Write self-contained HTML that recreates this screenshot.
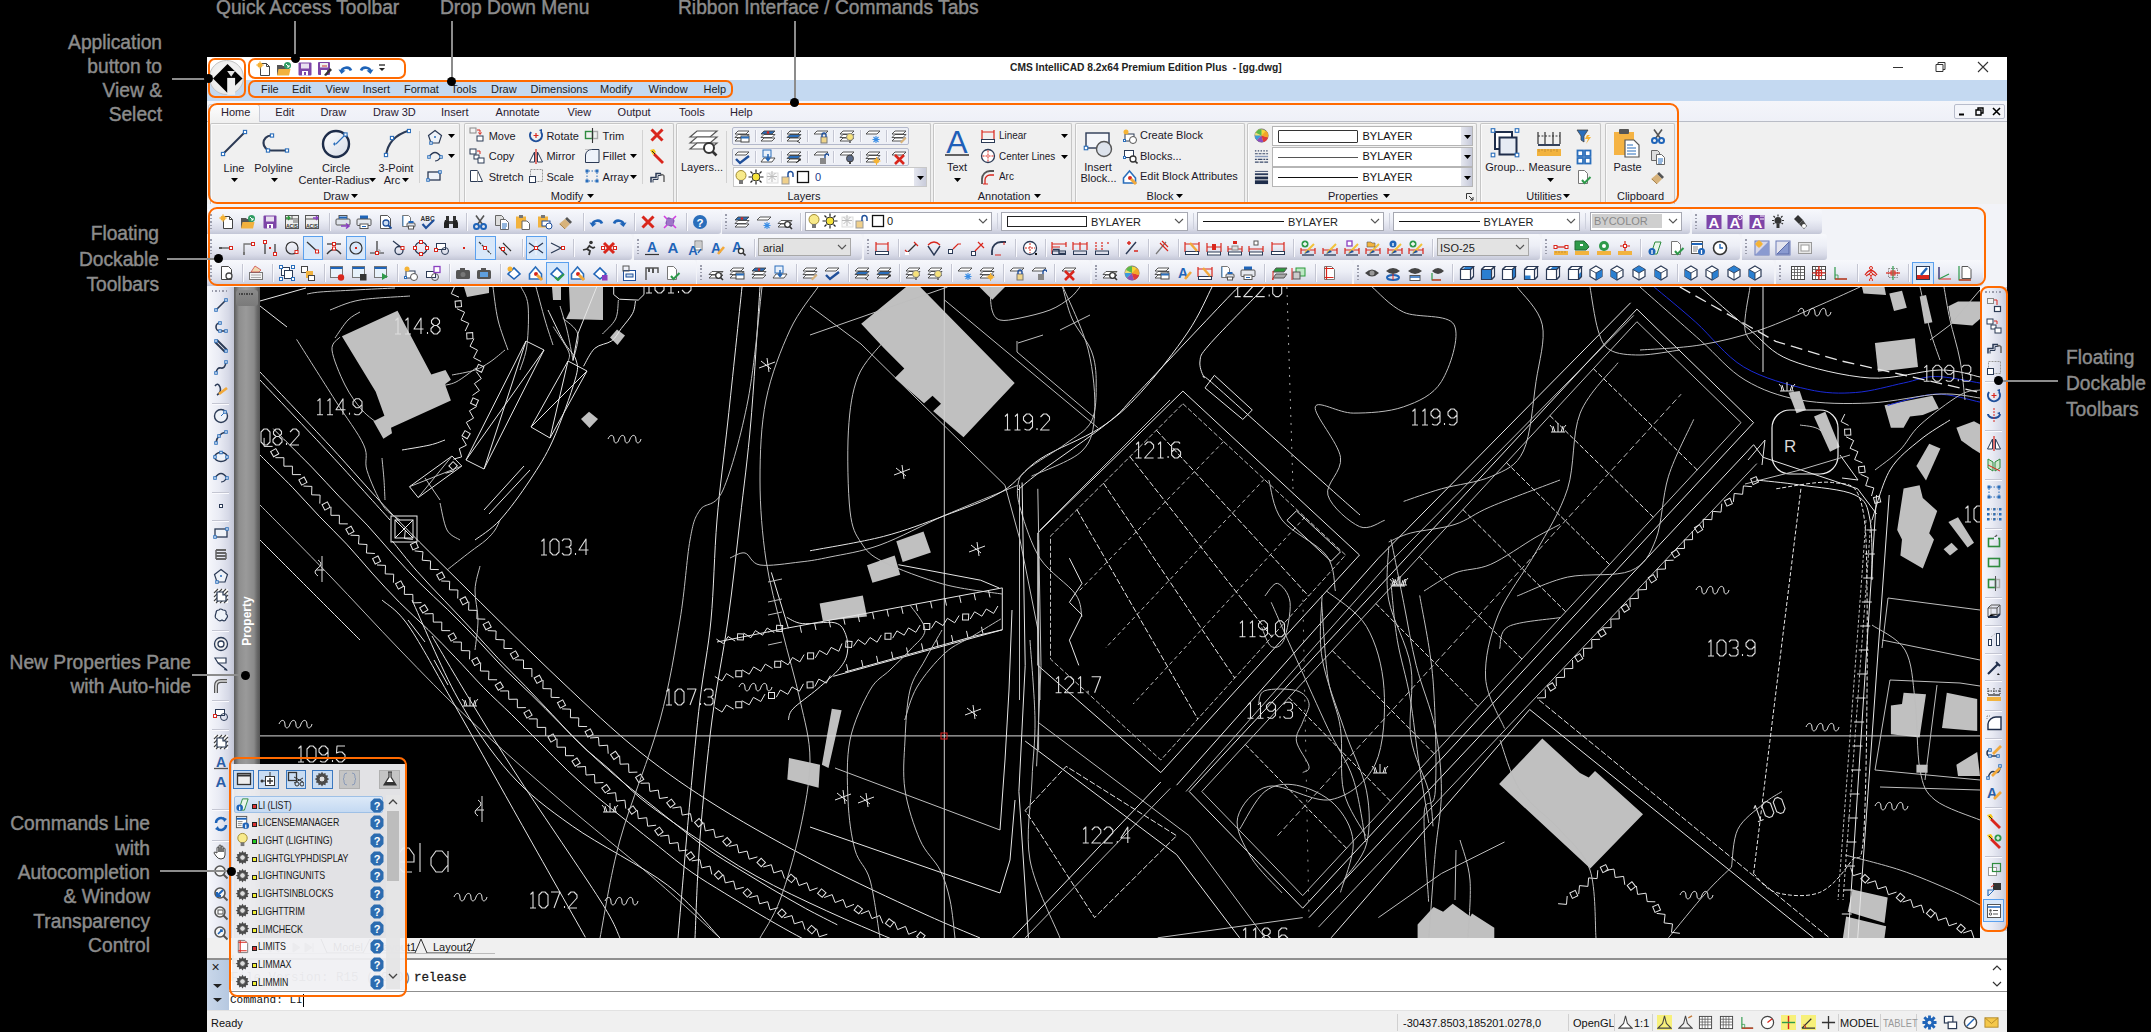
<!DOCTYPE html><html><head><meta charset="utf-8"><style>
*{margin:0;padding:0;box-sizing:border-box}
html,body{width:2151px;height:1032px;overflow:hidden;background:#000}
body{position:relative;font-family:"Liberation Sans",sans-serif;font-size:11px;color:#000}
.a{position:absolute;display:block}
.t{position:absolute;white-space:nowrap}
.or{position:absolute;border:2.5px solid #ff6a00;border-radius:7px}
.tb{position:absolute;background:linear-gradient(#f7f8fc,#eceef6 45%,#d9dbe8 80%,#c3c6d6);border-radius:0 3px 3px 0}
.tbv{position:absolute;background:linear-gradient(90deg,#f7f8fc,#e9ebf4 45%,#d5d8e6 80%,#c3c6d6)}
.cb{position:absolute;background:#fff;border:1px solid #a9abb4}
.sep{position:absolute;width:1px;background:#c5c7d0;border-right:1px solid #fbfbfd}
</style></head><body><div class="t" style="left:216px;top:-2.9px;font-size:20px;line-height:20px;color:#8c8c8c;transform:scaleX(0.96);transform-origin:0 0;-webkit-text-stroke:0.45px #8c8c8c">Quick Access Toolbar</div>
<div class="t" style="left:440px;top:-2.9px;font-size:20px;line-height:20px;color:#8c8c8c;transform:scaleX(0.96);transform-origin:0 0;-webkit-text-stroke:0.45px #8c8c8c">Drop Down Menu</div>
<div class="t" style="left:678px;top:-2.9px;font-size:20px;line-height:20px;color:#8c8c8c;transform:scaleX(0.96);transform-origin:0 0;-webkit-text-stroke:0.45px #8c8c8c">Ribbon Interface / Commands Tabs</div>
<div class="t" style="left:-838px;width:1000px;text-align:right;top:32.1px;font-size:20px;line-height:20px;color:#8c8c8c;transform:scaleX(0.96);transform-origin:100% 0;-webkit-text-stroke:0.45px #8c8c8c">Application</div>
<div class="t" style="left:-838px;width:1000px;text-align:right;top:55.9px;font-size:20px;line-height:20px;color:#8c8c8c;transform:scaleX(0.96);transform-origin:100% 0;-webkit-text-stroke:0.45px #8c8c8c">button to</div>
<div class="t" style="left:-838px;width:1000px;text-align:right;top:79.7px;font-size:20px;line-height:20px;color:#8c8c8c;transform:scaleX(0.96);transform-origin:100% 0;-webkit-text-stroke:0.45px #8c8c8c">View &amp;</div>
<div class="t" style="left:-838px;width:1000px;text-align:right;top:103.5px;font-size:20px;line-height:20px;color:#8c8c8c;transform:scaleX(0.96);transform-origin:100% 0;-webkit-text-stroke:0.45px #8c8c8c">Select</div>
<div class="t" style="left:-841px;width:1000px;text-align:right;top:223.1px;font-size:20px;line-height:20px;color:#8c8c8c;transform:scaleX(0.96);transform-origin:100% 0;-webkit-text-stroke:0.45px #8c8c8c">Floating</div>
<div class="t" style="left:-841px;width:1000px;text-align:right;top:248.7px;font-size:20px;line-height:20px;color:#8c8c8c;transform:scaleX(0.96);transform-origin:100% 0;-webkit-text-stroke:0.45px #8c8c8c">Dockable</div>
<div class="t" style="left:-841px;width:1000px;text-align:right;top:274.3px;font-size:20px;line-height:20px;color:#8c8c8c;transform:scaleX(0.96);transform-origin:100% 0;-webkit-text-stroke:0.45px #8c8c8c">Toolbars</div>
<div class="t" style="left:-809px;width:1000px;text-align:right;top:652.1px;font-size:20px;line-height:20px;color:#8c8c8c;transform:scaleX(0.96);transform-origin:100% 0;-webkit-text-stroke:0.45px #8c8c8c">New Properties Pane</div>
<div class="t" style="left:-809px;width:1000px;text-align:right;top:676.1px;font-size:20px;line-height:20px;color:#8c8c8c;transform:scaleX(0.96);transform-origin:100% 0;-webkit-text-stroke:0.45px #8c8c8c">with Auto-hide</div>
<div class="t" style="left:-850px;width:1000px;text-align:right;top:813.1px;font-size:20px;line-height:20px;color:#8c8c8c;transform:scaleX(0.96);transform-origin:100% 0;-webkit-text-stroke:0.45px #8c8c8c">Commands Line</div>
<div class="t" style="left:-850px;width:1000px;text-align:right;top:837.5px;font-size:20px;line-height:20px;color:#8c8c8c;transform:scaleX(0.96);transform-origin:100% 0;-webkit-text-stroke:0.45px #8c8c8c">with</div>
<div class="t" style="left:-850px;width:1000px;text-align:right;top:861.9px;font-size:20px;line-height:20px;color:#8c8c8c;transform:scaleX(0.96);transform-origin:100% 0;-webkit-text-stroke:0.45px #8c8c8c">Autocompletion</div>
<div class="t" style="left:-850px;width:1000px;text-align:right;top:886.3px;font-size:20px;line-height:20px;color:#8c8c8c;transform:scaleX(0.96);transform-origin:100% 0;-webkit-text-stroke:0.45px #8c8c8c">&amp; Window</div>
<div class="t" style="left:-850px;width:1000px;text-align:right;top:910.7px;font-size:20px;line-height:20px;color:#8c8c8c;transform:scaleX(0.96);transform-origin:100% 0;-webkit-text-stroke:0.45px #8c8c8c">Transparency</div>
<div class="t" style="left:-850px;width:1000px;text-align:right;top:935.1px;font-size:20px;line-height:20px;color:#8c8c8c;transform:scaleX(0.96);transform-origin:100% 0;-webkit-text-stroke:0.45px #8c8c8c">Control</div>
<div class="t" style="left:2066px;top:347.1px;font-size:20px;line-height:20px;color:#8c8c8c;transform:scaleX(0.96);transform-origin:0 0;-webkit-text-stroke:0.45px #8c8c8c">Floating</div>
<div class="t" style="left:2066px;top:373.1px;font-size:20px;line-height:20px;color:#8c8c8c;transform:scaleX(0.96);transform-origin:0 0;-webkit-text-stroke:0.45px #8c8c8c">Dockable</div>
<div class="t" style="left:2066px;top:399.1px;font-size:20px;line-height:20px;color:#8c8c8c;transform:scaleX(0.96);transform-origin:0 0;-webkit-text-stroke:0.45px #8c8c8c">Toolbars</div>
<div class="a" style="left:207px;top:57px;width:1800px;height:975px;background:#f0f0f0"></div>
<div class="a" style="left:207px;top:57px;width:1800px;height:23px;background:#fff"></div>
<div class="t" style="left:1010px;top:61.7px;font-size:11px;line-height:11px;color:#222;font-weight:bold;transform:scaleX(0.93);transform-origin:0 0">CMS IntelliCAD 8.2x64 Premium Edition Plus &nbsp;- [gg.dwg]</div>
<svg class="a" style="left:1890px;top:60px;" width="120" height="16" viewBox="0 0 120 16"><path d="M3 7.5h10" stroke="#333" stroke-width="1"/><path d="M46 4.5h7v7h-7z M48 4.5v-2h7v7h-2" fill="none" stroke="#333" stroke-width="1"/><path d="M88 2l10 10M98 2l-10 10" stroke="#333" stroke-width="1.1"/></svg>
<div class="a" style="left:207px;top:80px;width:1800px;height:21px;background:#c4d9f1"></div>
<div class="t" style="left:261px;top:83.7px;font-size:11px;line-height:11px;color:#1e1e1e;">File</div>
<div class="t" style="left:292px;top:83.7px;font-size:11px;line-height:11px;color:#1e1e1e;">Edit</div>
<div class="t" style="left:325.5px;top:83.7px;font-size:11px;line-height:11px;color:#1e1e1e;">View</div>
<div class="t" style="left:362.5px;top:83.7px;font-size:11px;line-height:11px;color:#1e1e1e;">Insert</div>
<div class="t" style="left:404px;top:83.7px;font-size:11px;line-height:11px;color:#1e1e1e;">Format</div>
<div class="t" style="left:451px;top:83.7px;font-size:11px;line-height:11px;color:#1e1e1e;">Tools</div>
<div class="t" style="left:491px;top:83.7px;font-size:11px;line-height:11px;color:#1e1e1e;">Draw</div>
<div class="t" style="left:530.5px;top:83.7px;font-size:11px;line-height:11px;color:#1e1e1e;">Dimensions</div>
<div class="t" style="left:600px;top:83.7px;font-size:11px;line-height:11px;color:#1e1e1e;">Modify</div>
<div class="t" style="left:648.5px;top:83.7px;font-size:11px;line-height:11px;color:#1e1e1e;">Window</div>
<div class="t" style="left:703.5px;top:83.7px;font-size:11px;line-height:11px;color:#1e1e1e;">Help</div>
<div class="a" style="left:209px;top:60px;width:35px;height:35px;border-radius:50%;background:radial-gradient(circle at 50% 40%,#fafafa,#e4e4e4);border:1px solid #c4c4c4"></div>
<svg class="a" style="left:212px;top:63px;" width="32" height="32" viewBox="0 0 32 32"><path d="M15.5 1L30.5 15.6L15.5 30L1 15.6Z" fill="#000"/><path d="M15.2 8.1h7.9l-3.9 5.7z" fill="#e4e4e4"/><path d="M15.2 14.9h7.9v17h-7.9z" fill="#efefef"/></svg>
<div class="a" style="left:207px;top:101px;width:1800px;height:21px;background:linear-gradient(#f4f5fa,#eef0f7)"></div>
<div class="a" style="left:207px;top:121px;width:1800px;height:1px;background:#b9bcc6"></div>
<div class="a" style="left:208px;top:104px;width:52px;height:18px;background:linear-gradient(#fdfdfd,#f0f0f0);border:1px solid #c9ccd6;border-bottom:none;border-radius:3px 3px 0 0"></div>
<div class="t" style="left:221px;top:106.7px;font-size:11px;line-height:11px;color:#2a2030;">Home</div>
<div class="t" style="left:275.3px;top:106.7px;font-size:11px;line-height:11px;color:#2a2030;">Edit</div>
<div class="t" style="left:320.5px;top:106.7px;font-size:11px;line-height:11px;color:#2a2030;">Draw</div>
<div class="t" style="left:373px;top:106.7px;font-size:11px;line-height:11px;color:#2a2030;">Draw 3D</div>
<div class="t" style="left:441px;top:106.7px;font-size:11px;line-height:11px;color:#2a2030;">Insert</div>
<div class="t" style="left:495.6px;top:106.7px;font-size:11px;line-height:11px;color:#2a2030;">Annotate</div>
<div class="t" style="left:567.5px;top:106.7px;font-size:11px;line-height:11px;color:#2a2030;">View</div>
<div class="t" style="left:617.6px;top:106.7px;font-size:11px;line-height:11px;color:#2a2030;">Output</div>
<div class="t" style="left:679px;top:106.7px;font-size:11px;line-height:11px;color:#2a2030;">Tools</div>
<div class="t" style="left:730px;top:106.7px;font-size:11px;line-height:11px;color:#2a2030;">Help</div>
<div class="a" style="left:1954px;top:104px;width:51px;height:15px;border:1px solid #b8bccb;border-radius:2px;background:#f4f5fa"></div>
<svg class="a" style="left:1955px;top:105px;" width="50" height="14" viewBox="0 0 50 14"><path d="M4 9.5h5" stroke="#000" stroke-width="2"/><path d="M21 5h5v5h-5z M23 5v-2h5v5h-2" fill="none" stroke="#000" stroke-width="1.4"/><path d="M38 3l7 7M45 3l-7 7" stroke="#000" stroke-width="1.6"/></svg>
<div class="a" style="left:207px;top:122px;width:1800px;height:82px;background:#f0f0f0"></div>
<div class="a" style="left:210px;top:123px;width:250.3px;height:81px;border:1px solid #c6c6c6;border-bottom:none;border-radius:2px 2px 0 0;box-shadow:inset 1px 1px 0 #fafafa"></div>
<div class="a" style="left:463.5px;top:123px;width:210.70000000000005px;height:81px;border:1px solid #c6c6c6;border-bottom:none;border-radius:2px 2px 0 0;box-shadow:inset 1px 1px 0 #fafafa"></div>
<div class="a" style="left:676.4px;top:123px;width:254.60000000000002px;height:81px;border:1px solid #c6c6c6;border-bottom:none;border-radius:2px 2px 0 0;box-shadow:inset 1px 1px 0 #fafafa"></div>
<div class="a" style="left:933.2px;top:123px;width:139.0999999999999px;height:81px;border:1px solid #c6c6c6;border-bottom:none;border-radius:2px 2px 0 0;box-shadow:inset 1px 1px 0 #fafafa"></div>
<div class="a" style="left:1075.3px;top:123px;width:169.70000000000005px;height:81px;border:1px solid #c6c6c6;border-bottom:none;border-radius:2px 2px 0 0;box-shadow:inset 1px 1px 0 #fafafa"></div>
<div class="a" style="left:1247.3px;top:123px;width:229.29999999999995px;height:81px;border:1px solid #c6c6c6;border-bottom:none;border-radius:2px 2px 0 0;box-shadow:inset 1px 1px 0 #fafafa"></div>
<div class="a" style="left:1479.8px;top:123px;width:121.70000000000005px;height:81px;border:1px solid #c6c6c6;border-bottom:none;border-radius:2px 2px 0 0;box-shadow:inset 1px 1px 0 #fafafa"></div>
<div class="a" style="left:1604.6px;top:123px;width:70.40000000000009px;height:81px;border:1px solid #c6c6c6;border-bottom:none;border-radius:2px 2px 0 0;box-shadow:inset 1px 1px 0 #fafafa"></div>
<div class="t" style="left:-266px;width:1000px;text-align:center;top:162.7px;font-size:11px;line-height:11px;color:#201828;">Line</div>
<svg class="a" style="left:230.5px;top:178px;" width="7" height="4" viewBox="0 0 7 4"><path d="M0 0h7l-3.5 4z" fill="#000"/></svg>
<div class="t" style="left:-226.5px;width:1000px;text-align:center;top:162.7px;font-size:11px;line-height:11px;color:#201828;">Polyline</div>
<svg class="a" style="left:271px;top:178px;" width="7" height="4" viewBox="0 0 7 4"><path d="M0 0h7l-3.5 4z" fill="#000"/></svg>
<div class="t" style="left:-164px;width:1000px;text-align:center;top:162.7px;font-size:11px;line-height:11px;color:#201828;">Circle</div>
<div class="t" style="left:-166px;width:1000px;text-align:center;top:174.7px;font-size:11px;line-height:11px;color:#201828;">Center-Radius</div>
<svg class="a" style="left:368.5px;top:178px;" width="7" height="4" viewBox="0 0 7 4"><path d="M0 0h7l-3.5 4z" fill="#000"/></svg>
<div class="t" style="left:-104px;width:1000px;text-align:center;top:162.7px;font-size:11px;line-height:11px;color:#201828;">3-Point</div>
<div class="t" style="left:-108px;width:1000px;text-align:center;top:174.7px;font-size:11px;line-height:11px;color:#201828;">Arc</div>
<svg class="a" style="left:402px;top:178px;" width="7" height="4" viewBox="0 0 7 4"><path d="M0 0h7l-3.5 4z" fill="#000"/></svg>
<div class="t" style="left:-164px;width:1000px;text-align:center;top:190.7px;font-size:11px;line-height:11px;color:#201828;">Draw</div>
<svg class="a" style="left:351px;top:194px;" width="7" height="4" viewBox="0 0 7 4"><path d="M0 0h7l-3.5 4z" fill="#000"/></svg>
<div class="a" style="left:419px;top:131px;width:1px;height:52px;background:#d2d2d2"></div>
<svg class="a" style="left:448px;top:133.5px;" width="7" height="4" viewBox="0 0 7 4"><path d="M0 0h7l-3.5 4z" fill="#000"/></svg>
<svg class="a" style="left:448px;top:154px;" width="7" height="4" viewBox="0 0 7 4"><path d="M0 0h7l-3.5 4z" fill="#000"/></svg>
<div class="t" style="left:488.7px;top:130.7px;font-size:11px;line-height:11px;color:#201828;">Move</div>
<div class="t" style="left:488.7px;top:151.2px;font-size:11px;line-height:11px;color:#201828;">Copy</div>
<div class="t" style="left:488.7px;top:171.7px;font-size:11px;line-height:11px;color:#201828;">Stretch</div>
<div class="t" style="left:546.4px;top:130.7px;font-size:11px;line-height:11px;color:#201828;">Rotate</div>
<div class="t" style="left:546.4px;top:151.2px;font-size:11px;line-height:11px;color:#201828;">Mirror</div>
<div class="t" style="left:546.4px;top:171.7px;font-size:11px;line-height:11px;color:#201828;">Scale</div>
<div class="t" style="left:602.6px;top:130.7px;font-size:11px;line-height:11px;color:#201828;">Trim</div>
<div class="t" style="left:602.6px;top:151.2px;font-size:11px;line-height:11px;color:#201828;">Fillet</div>
<div class="t" style="left:602.6px;top:171.7px;font-size:11px;line-height:11px;color:#201828;">Array</div>
<svg class="a" style="left:630px;top:154px;" width="7" height="4" viewBox="0 0 7 4"><path d="M0 0h7l-3.5 4z" fill="#000"/></svg>
<svg class="a" style="left:630px;top:174.5px;" width="7" height="4" viewBox="0 0 7 4"><path d="M0 0h7l-3.5 4z" fill="#000"/></svg>
<div class="a" style="left:641.6px;top:130px;width:1px;height:54px;background:#d2d2d2"></div>
<div class="t" style="left:67px;width:1000px;text-align:center;top:190.7px;font-size:11px;line-height:11px;color:#201828;">Modify</div>
<svg class="a" style="left:587px;top:194px;" width="7" height="4" viewBox="0 0 7 4"><path d="M0 0h7l-3.5 4z" fill="#000"/></svg>
<div class="t" style="left:202px;width:1000px;text-align:center;top:162.2px;font-size:11px;line-height:11px;color:#201828;">Layers...</div>
<div class="a" style="left:725.5px;top:131px;width:1px;height:52px;background:#d2d2d2"></div>
<div class="a" style="left:732px;top:127px;width:177px;height:18px;border:1px solid #b4b9cc;border-radius:2px;background:#eef0f6"></div>
<div class="a" style="left:732px;top:147.6px;width:177px;height:18px;border:1px solid #b4b9cc;border-radius:2px;background:#eef0f6"></div>
<div class="cb" style="left:733px;top:167px;width:194px;height:20px;border-color:#c8c8c8"></div>
<div class="a" style="left:914px;top:168px;width:12px;height:18px;background:linear-gradient(90deg,#e4e6ef,#c9ccdb)"></div>
<svg class="a" style="left:917px;top:175.5px;" width="7" height="4" viewBox="0 0 7 4"><path d="M0 0h7l-3.5 4z" fill="#000"/></svg>
<div class="t" style="left:-84px;width:1000px;text-align:right;top:171.7px;font-size:11px;line-height:11px;color:#1a3c8c;display:none">0</div>
<div class="t" style="left:815px;top:172.2px;font-size:11px;line-height:11px;color:#1b3a8a;">0</div>
<div class="t" style="left:304px;width:1000px;text-align:center;top:190.7px;font-size:11px;line-height:11px;color:#201828;">Layers</div>
<div class="t" style="left:457px;width:1000px;text-align:center;top:161.7px;font-size:11px;line-height:11px;color:#201828;">Text</div>
<svg class="a" style="left:954px;top:178px;" width="7" height="4" viewBox="0 0 7 4"><path d="M0 0h7l-3.5 4z" fill="#000"/></svg>
<div class="t" style="left:998.7px;top:130.2px;font-size:11px;line-height:11px;color:#201828;transform:scaleX(0.9);transform-origin:0 0">Linear</div>
<div class="t" style="left:998.7px;top:150.7px;font-size:11px;line-height:11px;color:#201828;transform:scaleX(0.9);transform-origin:0 0">Center Lines</div>
<div class="t" style="left:998.7px;top:171.2px;font-size:11px;line-height:11px;color:#201828;transform:scaleX(0.9);transform-origin:0 0">Arc</div>
<svg class="a" style="left:1061px;top:134px;" width="7" height="4" viewBox="0 0 7 4"><path d="M0 0h7l-3.5 4z" fill="#000"/></svg>
<svg class="a" style="left:1061px;top:154.5px;" width="7" height="4" viewBox="0 0 7 4"><path d="M0 0h7l-3.5 4z" fill="#000"/></svg>
<div class="t" style="left:504px;width:1000px;text-align:center;top:190.7px;font-size:11px;line-height:11px;color:#201828;">Annotation</div>
<svg class="a" style="left:1034px;top:194px;" width="7" height="4" viewBox="0 0 7 4"><path d="M0 0h7l-3.5 4z" fill="#000"/></svg>
<div class="t" style="left:598px;width:1000px;text-align:center;top:161.7px;font-size:11px;line-height:11px;color:#201828;">Insert</div>
<div class="t" style="left:598.5px;width:1000px;text-align:center;top:172.7px;font-size:11px;line-height:11px;color:#201828;">Block...</div>
<div class="t" style="left:1140px;top:130.2px;font-size:11px;line-height:11px;color:#201828;">Create Block</div>
<div class="t" style="left:1140px;top:150.7px;font-size:11px;line-height:11px;color:#201828;">Blocks...</div>
<div class="t" style="left:1140px;top:171.2px;font-size:11px;line-height:11px;color:#201828;">Edit Block Attributes</div>
<div class="t" style="left:660px;width:1000px;text-align:center;top:190.7px;font-size:11px;line-height:11px;color:#201828;">Block</div>
<svg class="a" style="left:1176px;top:194px;" width="7" height="4" viewBox="0 0 7 4"><path d="M0 0h7l-3.5 4z" fill="#000"/></svg>
<div class="cb" style="left:1271.8px;top:126px;width:201px;height:20px;border-color:#b5b5b5"></div>
<div class="a" style="left:1461px;top:127px;width:11px;height:18px;background:linear-gradient(90deg,#e6e8f0,#c5c8d8)"></div>
<svg class="a" style="left:1463.5px;top:134.5px;" width="7" height="4" viewBox="0 0 7 4"><path d="M0 0h7l-3.5 4z" fill="#000"/></svg>
<div class="t" style="left:1362.5px;top:130.9px;font-size:11px;line-height:11px;color:#111;">BYLAYER</div>
<div class="cb" style="left:1271.8px;top:146.5px;width:201px;height:20px;border-color:#b5b5b5"></div>
<div class="a" style="left:1461px;top:147.5px;width:11px;height:18px;background:linear-gradient(90deg,#e6e8f0,#c5c8d8)"></div>
<svg class="a" style="left:1463.5px;top:155.0px;" width="7" height="4" viewBox="0 0 7 4"><path d="M0 0h7l-3.5 4z" fill="#000"/></svg>
<div class="t" style="left:1362.5px;top:151.4px;font-size:11px;line-height:11px;color:#111;">BYLAYER</div>
<div class="cb" style="left:1271.8px;top:167px;width:201px;height:20px;border-color:#b5b5b5"></div>
<div class="a" style="left:1461px;top:168px;width:11px;height:18px;background:linear-gradient(90deg,#e6e8f0,#c5c8d8)"></div>
<svg class="a" style="left:1463.5px;top:175.5px;" width="7" height="4" viewBox="0 0 7 4"><path d="M0 0h7l-3.5 4z" fill="#000"/></svg>
<div class="t" style="left:1362.5px;top:171.9px;font-size:11px;line-height:11px;color:#111;">BYLAYER</div>
<div class="a" style="left:1277.5px;top:129.5px;width:80.5px;height:13px;border:1.5px solid #333;border-radius:1px;background:#fff"></div>
<div class="a" style="left:1277.5px;top:156.5px;width:80.5px;height:1px;background:#555"></div>
<div class="a" style="left:1277.5px;top:177px;width:80.5px;height:1px;background:#111"></div>
<div class="t" style="left:853px;width:1000px;text-align:center;top:190.7px;font-size:11px;line-height:11px;color:#201828;">Properties</div>
<svg class="a" style="left:1382.5px;top:194px;" width="7" height="4" viewBox="0 0 7 4"><path d="M0 0h7l-3.5 4z" fill="#000"/></svg>
<svg class="a" style="left:1466px;top:193px;" width="8" height="8" viewBox="0 0 8 8"><path d="M0.5 6V0.5H6" stroke="#333" fill="none"/><path d="M3 3l4 4M7 4v3h-3" stroke="#333" fill="none"/></svg>
<div class="t" style="left:1005px;width:1000px;text-align:center;top:162.2px;font-size:11px;line-height:11px;color:#201828;">Group...</div>
<div class="t" style="left:1050px;width:1000px;text-align:center;top:162.2px;font-size:11px;line-height:11px;color:#201828;">Measure</div>
<svg class="a" style="left:1547px;top:177.5px;" width="7" height="4" viewBox="0 0 7 4"><path d="M0 0h7l-3.5 4z" fill="#000"/></svg>
<div class="t" style="left:1044px;width:1000px;text-align:center;top:190.7px;font-size:11px;line-height:11px;color:#201828;">Utilities</div>
<svg class="a" style="left:1562.5px;top:194px;" width="7" height="4" viewBox="0 0 7 4"><path d="M0 0h7l-3.5 4z" fill="#000"/></svg>
<div class="t" style="left:1127.5px;width:1000px;text-align:center;top:162.2px;font-size:11px;line-height:11px;color:#201828;">Paste</div>
<div class="t" style="left:1140.5px;width:1000px;text-align:center;top:190.7px;font-size:11px;line-height:11px;color:#201828;">Clipboard</div>
<div class="a" style="left:207px;top:204px;width:1800px;height:83px;background:#f2f3f8"></div>
<div class="tb" style="left:207px;top:208.5px;width:513.7px;height:25.5px"></div>
<div class="a" style="left:210px;top:213.5px;width:2px;height:15px;background:repeating-linear-gradient(#9a9cab 0 1.5px,transparent 1.5px 3.5px)"></div>
<div class="tb" style="left:722px;top:208.5px;width:968px;height:25.5px"></div>
<div class="a" style="left:725px;top:213.5px;width:2px;height:15px;background:repeating-linear-gradient(#9a9cab 0 1.5px,transparent 1.5px 3.5px)"></div>
<div class="tb" style="left:1692px;top:208.5px;width:130px;height:25.5px"></div>
<div class="a" style="left:1695px;top:213.5px;width:2px;height:15px;background:repeating-linear-gradient(#9a9cab 0 1.5px,transparent 1.5px 3.5px)"></div>
<div class="tb" style="left:207px;top:234px;width:425px;height:25.5px"></div>
<div class="a" style="left:210px;top:239px;width:2px;height:15px;background:repeating-linear-gradient(#9a9cab 0 1.5px,transparent 1.5px 3.5px)"></div>
<div class="tb" style="left:634px;top:234px;width:228px;height:25.5px"></div>
<div class="a" style="left:637px;top:239px;width:2px;height:15px;background:repeating-linear-gradient(#9a9cab 0 1.5px,transparent 1.5px 3.5px)"></div>
<div class="tb" style="left:864px;top:234px;width:676.3px;height:25.5px"></div>
<div class="a" style="left:867px;top:239px;width:2px;height:15px;background:repeating-linear-gradient(#9a9cab 0 1.5px,transparent 1.5px 3.5px)"></div>
<div class="tb" style="left:1542px;top:234px;width:198.4000000000001px;height:25.5px"></div>
<div class="a" style="left:1545px;top:239px;width:2px;height:15px;background:repeating-linear-gradient(#9a9cab 0 1.5px,transparent 1.5px 3.5px)"></div>
<div class="tb" style="left:1742px;top:234px;width:85px;height:25.5px"></div>
<div class="a" style="left:1745px;top:239px;width:2px;height:15px;background:repeating-linear-gradient(#9a9cab 0 1.5px,transparent 1.5px 3.5px)"></div>
<div class="tb" style="left:207px;top:260px;width:488.6px;height:25.5px"></div>
<div class="a" style="left:210px;top:265px;width:2px;height:15px;background:repeating-linear-gradient(#9a9cab 0 1.5px,transparent 1.5px 3.5px)"></div>
<div class="tb" style="left:697px;top:260px;width:393px;height:25.5px"></div>
<div class="a" style="left:700px;top:265px;width:2px;height:15px;background:repeating-linear-gradient(#9a9cab 0 1.5px,transparent 1.5px 3.5px)"></div>
<div class="tb" style="left:1092px;top:260px;width:260px;height:25.5px"></div>
<div class="a" style="left:1095px;top:265px;width:2px;height:15px;background:repeating-linear-gradient(#9a9cab 0 1.5px,transparent 1.5px 3.5px)"></div>
<div class="tb" style="left:1354px;top:260px;width:420px;height:25.5px"></div>
<div class="a" style="left:1357px;top:265px;width:2px;height:15px;background:repeating-linear-gradient(#9a9cab 0 1.5px,transparent 1.5px 3.5px)"></div>
<div class="tb" style="left:1776px;top:260px;width:207px;height:25.5px"></div>
<div class="a" style="left:1779px;top:265px;width:2px;height:15px;background:repeating-linear-gradient(#9a9cab 0 1.5px,transparent 1.5px 3.5px)"></div>
<div class="cb" style="left:805.2px;top:211.5px;width:186.79999999999995px;height:19.5px;background:#fff;border-color:#a6a8b2"></div>
<svg class="a" style="left:978px;top:218.25px;" width="10" height="6" viewBox="0 0 10 6"><path d="M1 1l4 4l4-4" stroke="#555" fill="none" stroke-width="1.1"/></svg>
<div class="t" style="left:887px;top:216.2px;font-size:11px;line-height:11px;color:#1a1a1a;">0</div>
<div class="cb" style="left:1001px;top:211.5px;width:187px;height:19.5px;background:#fff;border-color:#a6a8b2"></div>
<svg class="a" style="left:1174px;top:218.25px;" width="10" height="6" viewBox="0 0 10 6"><path d="M1 1l4 4l4-4" stroke="#555" fill="none" stroke-width="1.1"/></svg>
<div class="a" style="left:1007px;top:215.5px;width:80px;height:11.5px;border:1.5px solid #222"></div>
<div class="t" style="left:1091px;top:216.7px;font-size:11px;line-height:11px;color:#222;">BYLAYER</div>
<div class="cb" style="left:1197px;top:211.5px;width:186.79999999999995px;height:19.5px;background:#fff;border-color:#a6a8b2"></div>
<svg class="a" style="left:1369.8px;top:218.25px;" width="10" height="6" viewBox="0 0 10 6"><path d="M1 1l4 4l4-4" stroke="#555" fill="none" stroke-width="1.1"/></svg>
<div class="a" style="left:1203px;top:220.75px;width:81px;height:1px;background:#111"></div>
<div class="t" style="left:1288px;top:216.7px;font-size:11px;line-height:11px;color:#222;">BYLAYER</div>
<div class="cb" style="left:1393px;top:211.5px;width:186.5999999999999px;height:19.5px;background:#fff;border-color:#a6a8b2"></div>
<svg class="a" style="left:1565.6px;top:218.25px;" width="10" height="6" viewBox="0 0 10 6"><path d="M1 1l4 4l4-4" stroke="#555" fill="none" stroke-width="1.1"/></svg>
<div class="a" style="left:1399px;top:220.75px;width:80.5px;height:1px;background:#111"></div>
<div class="t" style="left:1483.5px;top:216.7px;font-size:11px;line-height:11px;color:#222;">BYLAYER</div>
<div class="cb" style="left:1589.7px;top:211.5px;width:92.29999999999995px;height:19.5px;background:#fff;border-color:#a6a8b2"></div>
<svg class="a" style="left:1668px;top:218.25px;" width="10" height="6" viewBox="0 0 10 6"><path d="M1 1l4 4l4-4" stroke="#555" fill="none" stroke-width="1.1"/></svg>
<div class="a" style="left:1592px;top:214px;width:70px;height:14px;background:#cfcfcf"></div>
<div class="t" style="left:1594px;top:216.2px;font-size:11px;line-height:11px;color:#8a8a8a;">BYCOLOR</div>
<div class="a" style="left:996.5px;top:213px;width:1px;height:16px;background:#cdd0dc"></div>
<div class="a" style="left:1192.5px;top:213px;width:1px;height:16px;background:#cdd0dc"></div>
<div class="a" style="left:1388.5px;top:213px;width:1px;height:16px;background:#cdd0dc"></div>
<div class="a" style="left:1585px;top:213px;width:1px;height:16px;background:#cdd0dc"></div>
<div class="cb" style="left:758.3px;top:237.6px;width:92.90000000000009px;height:18.400000000000006px;background:#e3e3e3;border-color:#a8a8a8"></div>
<svg class="a" style="left:837.2px;top:243.8px;" width="10" height="6" viewBox="0 0 10 6"><path d="M1 1l4 4l4-4" stroke="#555" fill="none" stroke-width="1.1"/></svg>
<div class="t" style="left:763px;top:242.8px;font-size:11px;line-height:11px;color:#222;">arial</div>
<div class="cb" style="left:1436.5px;top:237.6px;width:92.90000000000009px;height:18.400000000000006px;background:#e3e3e3;border-color:#a8a8a8"></div>
<svg class="a" style="left:1515.4px;top:243.8px;" width="10" height="6" viewBox="0 0 10 6"><path d="M1 1l4 4l4-4" stroke="#555" fill="none" stroke-width="1.1"/></svg>
<div class="t" style="left:1440px;top:242.8px;font-size:11px;line-height:11px;color:#222;">ISO-25</div>
<div class="tbv" style="left:207px;top:287px;width:27px;height:651px"></div>
<div class="a" style="left:212px;top:290px;width:15px;height:2px;background:repeating-linear-gradient(90deg,#9a9cab 0 1.5px,transparent 1.5px 3.5px)"></div>
<div class="a" style="left:234px;top:287px;width:26px;height:651px;background:linear-gradient(90deg,#5a5a5a 0,#6f6f6f 2px,#8e8e8e 5px,#9a9a9a 12px,#8a8a8a 20px,#6a6a6a 23px,#555 26px)"></div>
<div class="a" style="left:236px;top:290px;width:22px;height:16px;background:linear-gradient(#8a8a8a,#7a7a7a);border-radius:3px"></div>
<div class="a" style="left:239px;top:293px;width:15px;height:2px;background:repeating-linear-gradient(90deg,#444 0 1.5px,transparent 1.5px 2.5px)"></div>
<div class="t" style="left:220px;top:614px;width:54px;height:14px;font-size:12px;line-height:14px;color:#fff;font-weight:bold;transform:rotate(-90deg);text-align:center">Property</div>
<div class="a" style="left:260px;top:287px;width:1720px;height:651px;background:#000"></div>
<svg class="a" style="left:260px;top:287px" width="1720" height="651" viewBox="260 287 1720 651"><path d="M341.9 336.2 L397.5 310.7 L431.3 374.4 L445.5 370.0 L450.9 379.8 L445.0 384.2 L450.9 400.5 L391.0 427.8 L392.0 433.2 L383.4 438.7 L373.5 421.3 L384.4 415.8 L375.7 391.8Z" fill="#c0c0c0"/><path d="M464.0 287.0 L489.0 287.0 L489.0 293.0 L467.0 297.0Z" fill="#c0c0c0"/><path d="M552.0 287.0 L561.0 287.0 L561.0 300.0 L553.0 300.0Z" fill="#c0c0c0"/><path d="M569.0 287.0 L603.0 287.0 L603.0 320.0 L566.0 319.0 L570.0 311.0Z" fill="#c0c0c0"/><path d="M610.0 337.5 L617.0 329.5 L625.0 335.6 L617.5 345.0Z" fill="#c0c0c0"/><path d="M581.0 419.0 L589.0 411.7 L598.0 419.0 L589.5 428.0Z" fill="#c0c0c0"/><path d="M861.2 323.8 L906.0 287.0 L920.3 287.0 L1014.7 383.0 L963.5 437.3 L894.7 378.1 L904.3 368.5 L883.6 347.8Z" fill="#c0c0c0"/><path d="M979.5 287.0 L1005.0 287.0 L992.3 299.8Z" fill="#c0c0c0"/><path d="M896.3 541.2 L923.5 531.6 L930.9 552.4 L902.7 562.0Z" fill="#c0c0c0"/><path d="M867.0 565.2 L894.7 555.6 L900.2 574.8 L872.4 582.8Z" fill="#c0c0c0"/><path d="M819.6 603.6 L862.8 595.6 L867.0 616.4 L822.8 621.0Z" fill="#c0c0c0"/><path d="M789.0 758.0 L820.0 764.7 L818.6 787.7 L787.3 779.5Z" fill="#c0c0c0"/><path d="M831.8 708.7 L841.6 710.3 L828.5 768.0 L821.9 764.7Z" fill="#c0c0c0"/><path d="M1862.0 287.0 L1884.5 287.0 L1886.0 295.0 L1863.5 293.4Z" fill="#c0c0c0"/><path d="M1889.3 293.4 L1902.0 290.8 L1906.8 307.8 L1894.0 311.0Z" fill="#c0c0c0"/><path d="M1919.7 296.6 L1926.0 295.0 L1932.4 322.2 L1924.5 323.8Z" fill="#c0c0c0"/><path d="M1948.4 306.2 L1958.0 301.4 L1980.0 301.4 L1980.0 319.0 L1972.4 325.4 L1951.6 323.8 L1950.0 315.8Z" fill="#c0c0c0"/><path d="M1874.9 343.0 L1914.8 338.2 L1918.0 367.0 L1878.0 371.7Z" fill="#c0c0c0"/><path d="M1788.5 392.5 L1799.7 391.0 L1806.0 410.0 L1796.5 413.3Z" fill="#c0c0c0"/><path d="M1814.0 416.5 L1825.3 411.7 L1839.7 446.9 L1830.0 451.7Z" fill="#c0c0c0"/><path d="M1884.5 405.3 L1932.4 395.7 L1938.8 408.5 L1922.8 414.9 L1910.0 416.5 L1903.6 427.7 L1890.9 427.7Z" fill="#c0c0c0"/><path d="M1956.4 427.7 L1974.0 421.3 L1980.0 424.5 L1980.0 453.3 L1972.4 448.5 L1961.2 440.5Z" fill="#c0c0c0"/><path d="M1916.4 466.0 L1929.2 443.7 L1940.4 448.5 L1926.0 480.5Z" fill="#c0c0c0"/><path d="M1903.6 488.5 L1919.6 485.3 L1922.8 498.0 L1937.2 510.9 L1929.2 533.2 L1934.0 539.6 L1922.8 568.4 L1900.4 555.6 L1902.0 539.6 L1897.2 530.0Z" fill="#c0c0c0"/><path d="M1948.4 522.0 L1958.0 517.3 L1974.0 542.8 L1967.6 547.6Z" fill="#c0c0c0"/><path d="M1943.6 549.2 L1951.6 542.8 L1958.0 549.2 L1950.0 555.6Z" fill="#c0c0c0"/><path d="M1499.1 783.9 L1542.3 738.5 L1580.0 773.0 L1588.7 777.5 L1595.0 771.1 L1643.0 814.3 L1590.3 868.6Z" fill="#c0c0c0"/><path d="M1417.6 924.6 L1433.6 907.0 L1443.1 911.8 L1452.7 903.8 L1470.3 916.6 L1472.0 913.4 L1494.3 927.8 L1494.3 938.0 L1417.6 938.0Z" fill="#c0c0c0"/><path d="M1890.9 705.5 L1902.0 704.0 L1903.6 692.7 L1926.0 694.3 L1919.6 737.5 L1890.9 734.3Z" fill="#c0c0c0"/><path d="M1942.0 728.0 L1946.8 692.7 L1977.2 699.1 L1977.2 731.1Z" fill="#c0c0c0"/><path d="M1916.4 764.7 L1927.6 764.7 L1927.6 772.7 L1916.4 772.7Z" fill="#c0c0c0"/><path d="M1956.4 764.7 L1977.2 751.9 L1980.0 775.9 L1958.0 775.9Z" fill="#c0c0c0"/><path d="M1852.5 889.4 L1887.7 897.4 L1884.5 923.0 L1847.7 911.8Z" fill="#c0c0c0"/><path d="M1846.1 916.6 L1886.1 926.2 L1884.5 938.0 L1842.9 938.0Z" fill="#c0c0c0"/><path d="M923.5 403.7 L932.5 395.7 L941.0 403.7 L932.5 411.7Z" fill="#000"/><path d="M264.1 437.9 L264.1 446.4 L272.6 446.4 M275.4 457.7 L283.9 457.7 L283.9 466.2 L292.4 466.2 L292.4 474.6 L300.9 474.6 M303.5 486.1 L311.9 486.4 L311.6 494.8 L320.1 495.1 L319.8 503.6 M331.0 506.8 L330.9 515.3 L339.4 515.3 L339.3 523.8 L347.8 523.9 M350.5 535.2 L359.1 535.5 L358.5 544.0 L367.0 544.5 L366.4 553.0 L374.9 553.5 M377.0 565.0 L385.5 565.4 L385.2 573.9 L393.7 574.2 L393.4 582.7 M404.6 585.9 L404.3 594.4 L412.8 594.4 L413.0 602.9 L421.5 602.6 M424.6 613.9 L433.1 613.6 L433.3 622.1 L441.8 622.1 L441.7 630.6 L450.2 630.7 M452.9 642.0 L461.4 642.1 L461.3 650.6 L469.8 650.8 L469.5 659.3 M480.7 662.5 L480.4 671.0 L488.9 671.2 L488.6 679.7 L497.1 679.8 M500.1 691.0 L508.6 690.9 L508.8 699.3 L517.3 699.2 L517.4 707.7 L525.9 707.6 M528.7 718.9 L537.2 718.9 L537.2 727.4 L545.7 727.4 L545.7 735.9 M557.0 738.7 L557.0 747.2 L565.5 747.2 L565.5 755.7 L574.0 755.7 M577.1 767.0 L585.5 766.5 L586.0 775.0 L594.5 774.5 L594.9 783.0 L603.4 782.5 M607.1 793.6 L615.6 792.7 L616.5 801.1 L624.9 800.2 L625.8 808.6 M637.4 810.2 L638.3 818.7 L646.7 817.7 L647.7 826.2 L656.1 825.2 M660.2 836.2 L668.6 835.2 L669.6 843.6 L678.0 842.6 L679.1 851.0 L687.5 850.0 M691.7 860.9 L699.9 859.6 L701.7 867.9 L710.0 866.1 L711.8 874.4 M723.5 874.7 L725.3 882.9 L733.6 881.0 L735.6 889.3 L743.8 887.3 M749.3 897.6 L757.5 895.6 L759.5 903.8 L767.7 901.7 L770.0 909.9 L778.2 907.7 M783.8 917.8 L792.0 915.6 L794.3 923.8 L802.4 921.4 L805.0 929.5 M816.6 928.7 L819.2 936.8 L827.3 934.2 " stroke="#e6e6e6" stroke-width="1" fill="none"/><rect x="-3" y="-3" width="6" height="6" fill="none" stroke="#e6e6e6" transform="translate(274.7 452.7) rotate(60)"/><rect x="-3" y="-3" width="6" height="6" fill="none" stroke="#e6e6e6" transform="translate(302.9 481.1) rotate(62)"/><rect x="-3" y="-3" width="6" height="6" fill="none" stroke="#e6e6e6" transform="translate(326.1 506.0) rotate(62)"/><rect x="-3" y="-3" width="6" height="6" fill="none" stroke="#e6e6e6" transform="translate(349.9 530.3) rotate(61)"/><rect x="-3" y="-3" width="6" height="6" fill="none" stroke="#e6e6e6" transform="translate(376.6 560.0) rotate(64)"/><rect x="-3" y="-3" width="6" height="6" fill="none" stroke="#e6e6e6" transform="translate(399.6 585.0) rotate(62)"/><rect x="-3" y="-3" width="6" height="6" fill="none" stroke="#e6e6e6" transform="translate(423.8 608.9) rotate(58)"/><rect x="-3" y="-3" width="6" height="6" fill="none" stroke="#e6e6e6" transform="translate(452.3 637.0) rotate(61)"/><rect x="-3" y="-3" width="6" height="6" fill="none" stroke="#e6e6e6" transform="translate(475.8 661.6) rotate(62)"/><rect x="-3" y="-3" width="6" height="6" fill="none" stroke="#e6e6e6" transform="translate(499.3 686.1) rotate(59)"/><rect x="-3" y="-3" width="6" height="6" fill="none" stroke="#e6e6e6" transform="translate(528.0 714.0) rotate(60)"/><rect x="-3" y="-3" width="6" height="6" fill="none" stroke="#e6e6e6" transform="translate(552.0 738.0) rotate(60)"/><rect x="-3" y="-3" width="6" height="6" fill="none" stroke="#e6e6e6" transform="translate(576.1 762.1) rotate(57)"/><rect x="-3" y="-3" width="6" height="6" fill="none" stroke="#e6e6e6" transform="translate(605.9 788.7) rotate(54)"/><rect x="-3" y="-3" width="6" height="6" fill="none" stroke="#e6e6e6" transform="translate(632.4 810.1) rotate(54)"/><rect x="-3" y="-3" width="6" height="6" fill="none" stroke="#e6e6e6" transform="translate(658.9 831.3) rotate(54)"/><rect x="-3" y="-3" width="6" height="6" fill="none" stroke="#e6e6e6" transform="translate(690.4 856.0) rotate(53)"/><rect x="-3" y="-3" width="6" height="6" fill="none" stroke="#e6e6e6" transform="translate(718.5 875.0) rotate(47)"/><rect x="-3" y="-3" width="6" height="6" fill="none" stroke="#e6e6e6" transform="translate(747.4 892.9) rotate(46)"/><rect x="-3" y="-3" width="6" height="6" fill="none" stroke="#e6e6e6" transform="translate(781.9 913.2) rotate(45)"/><rect x="-3" y="-3" width="6" height="6" fill="none" stroke="#e6e6e6" transform="translate(811.7 929.6) rotate(42)"/><path d="M405.3 530.1 L404.5 538.5 L412.9 539.4 M414.6 550.9 L423.0 551.8 L422.2 560.2 L430.6 560.9 L430.3 569.4 L438.8 569.6 M441.2 581.0 L449.7 581.3 L449.4 589.8 L457.9 590.0 L457.7 598.5 M468.9 601.7 L468.6 610.2 L477.1 610.4 L476.9 618.9 L485.3 619.2 M487.7 630.6 L496.1 631.0 L495.8 639.5 L504.2 639.9 L503.9 648.4 L512.3 648.6 M515.0 659.9 L523.5 660.0 L523.5 668.5 L531.9 668.6 L531.9 677.1 M543.1 680.1 L542.9 688.6 L551.3 688.8 L551.1 697.3 L559.6 697.6 M562.1 708.9 L570.6 709.2 L570.4 717.7 L578.8 717.9 L578.6 726.4 L587.1 726.6 M590.0 738.0 L598.5 737.4 L599.1 745.8 L607.6 745.2 L608.2 753.7 M619.6 755.7 L620.1 764.2 L628.6 763.9 L628.9 772.4 L637.4 772.1 M640.6 783.3 L649.1 783.0 L649.9 791.4 L658.3 790.1 L659.5 798.5 L667.9 797.3 M672.4 808.1 L680.8 806.8 L682.2 815.1 L690.5 813.6 L692.1 821.9 M703.8 822.6 L705.3 830.9 L713.7 829.3 L715.4 837.6 L723.7 835.9 M728.8 846.4 L737.1 844.6 L738.8 852.9 L747.1 851.1 L749.2 859.2 L757.4 856.9 M763.2 867.0 L771.4 864.7 L773.7 872.9 L781.7 870.5 L784.5 878.5 M796.1 877.5 L798.9 885.5 L806.9 882.7 L809.7 890.7 L817.6 887.9 M824.2 897.5 L832.2 894.6 L835.1 902.5 L843.1 899.5 L846.1 907.5 L854.0 904.4 M860.8 913.9 L868.7 910.7 L871.8 918.6 L879.7 915.5 L882.9 923.3 M894.4 921.7 L897.6 929.6 L905.5 926.4 L908.6 934.3 L916.5 931.1 M923.4 940.6 " stroke="#e6e6e6" stroke-width="1" fill="none"/><rect x="-3" y="-3" width="6" height="6" fill="none" stroke="#e6e6e6" transform="translate(414.4 545.9) rotate(66)"/><rect x="-3" y="-3" width="6" height="6" fill="none" stroke="#e6e6e6" transform="translate(440.7 576.1) rotate(62)"/><rect x="-3" y="-3" width="6" height="6" fill="none" stroke="#e6e6e6" transform="translate(464.0 600.8) rotate(62)"/><rect x="-3" y="-3" width="6" height="6" fill="none" stroke="#e6e6e6" transform="translate(487.2 625.7) rotate(63)"/><rect x="-3" y="-3" width="6" height="6" fill="none" stroke="#e6e6e6" transform="translate(514.4 655.0) rotate(61)"/><rect x="-3" y="-3" width="6" height="6" fill="none" stroke="#e6e6e6" transform="translate(538.2 679.3) rotate(62)"/><rect x="-3" y="-3" width="6" height="6" fill="none" stroke="#e6e6e6" transform="translate(561.5 704.0) rotate(62)"/><rect x="-3" y="-3" width="6" height="6" fill="none" stroke="#e6e6e6" transform="translate(589.1 733.0) rotate(62)"/><rect x="-3" y="-3" width="6" height="6" fill="none" stroke="#e6e6e6" transform="translate(614.7 755.4) rotate(56)"/><rect x="-3" y="-3" width="6" height="6" fill="none" stroke="#e6e6e6" transform="translate(639.7 778.4) rotate(58)"/><rect x="-3" y="-3" width="6" height="6" fill="none" stroke="#e6e6e6" transform="translate(670.9 803.3) rotate(52)"/><rect x="-3" y="-3" width="6" height="6" fill="none" stroke="#e6e6e6" transform="translate(698.8 822.8) rotate(49)"/><rect x="-3" y="-3" width="6" height="6" fill="none" stroke="#e6e6e6" transform="translate(727.0 841.7) rotate(48)"/><rect x="-3" y="-3" width="6" height="6" fill="none" stroke="#e6e6e6" transform="translate(761.2 862.5) rotate(44)"/><rect x="-3" y="-3" width="6" height="6" fill="none" stroke="#e6e6e6" transform="translate(791.2 878.4) rotate(41)"/><rect x="-3" y="-3" width="6" height="6" fill="none" stroke="#e6e6e6" transform="translate(821.8 893.1) rotate(40)"/><rect x="-3" y="-3" width="6" height="6" fill="none" stroke="#e6e6e6" transform="translate(858.3 909.6) rotate(38)"/><rect x="-3" y="-3" width="6" height="6" fill="none" stroke="#e6e6e6" transform="translate(889.6 922.9) rotate(38)"/><rect x="-3" y="-3" width="6" height="6" fill="none" stroke="#e6e6e6" transform="translate(920.9 936.2) rotate(38)"/><path d="M253.5 448.5 C255.2 450.2 257.0 452.0 263.5 458.5 C270.0 465.0 283.1 477.7 292.4 487.3 C301.7 497.0 310.3 506.8 319.3 516.3 C328.4 525.8 337.9 534.7 346.7 544.2 C355.5 553.6 363.3 563.3 372.1 573.1 C380.9 582.8 390.1 593.0 399.5 602.4 C408.8 611.9 418.8 620.4 428.1 629.6 C437.4 638.7 446.1 647.7 455.3 657.3 C464.6 666.9 474.1 677.9 483.4 687.4 C492.8 697.0 502.2 705.4 511.6 714.6 C520.9 723.7 530.2 733.1 539.5 742.5 C548.9 751.8 558.1 761.6 567.7 770.7 C577.4 779.8 587.1 788.5 597.2 797.1 C607.4 805.8 618.3 814.1 628.5 822.4 C638.7 830.6 648.1 838.2 658.6 846.4 C669.0 854.7 680.0 864.0 691.1 871.8 C702.1 879.6 713.5 886.3 724.7 893.2 C735.8 900.1 746.6 906.7 757.9 913.3 C769.2 920.0 781.2 927.0 792.3 933.0 C803.4 939.1 819.1 946.9 824.5 949.7" stroke="#e6e6e6" stroke-width="1" fill="none" /><path d="M273.3 428.7 C275.0 430.4 276.8 432.2 283.3 438.7 C289.8 445.2 303.1 458.2 312.5 467.9 C321.9 477.6 330.4 487.4 339.6 496.9 C348.7 506.5 358.3 515.6 367.2 525.1 C376.1 534.7 384.2 544.7 392.9 554.3 C401.6 563.9 410.2 573.5 419.4 582.7 C428.5 592.0 438.3 600.4 447.7 609.6 C457.1 618.8 466.3 628.2 475.6 637.9 C484.8 647.6 494.1 658.3 503.4 667.8 C512.7 677.2 521.9 685.4 531.2 694.6 C540.5 703.7 550.0 713.4 559.3 722.7 C568.6 732.0 577.7 741.5 587.0 750.4 C596.3 759.2 605.5 767.5 615.4 775.8 C625.2 784.2 635.9 792.4 646.0 800.5 C656.1 808.6 665.7 816.4 675.9 824.4 C686.1 832.5 696.7 841.4 707.2 848.9 C717.8 856.4 728.6 862.7 739.4 869.4 C750.3 876.1 761.1 882.7 772.1 889.2 C783.2 895.7 794.8 902.5 805.7 908.5 C816.5 914.4 832.1 922.1 837.3 924.8" stroke="#e6e6e6" stroke-width="1" fill="none" /><path d="M392.2 540.9 C396.3 545.9 408.2 561.3 417.0 571.2 C425.7 581.2 435.4 590.9 444.5 600.6 C453.6 610.3 462.8 619.8 471.7 629.5 C480.7 639.2 489.3 649.1 498.3 658.6 C507.4 668.2 516.9 677.4 525.9 686.7 C534.9 696.1 543.3 705.1 552.3 714.6 C561.4 724.2 570.6 734.8 580.3 744.1 C590.0 753.4 600.7 761.5 610.6 770.4 C620.6 779.4 629.8 789.3 640.0 797.8 C650.2 806.3 661.0 813.7 671.9 821.4 C682.8 829.1 694.1 836.7 705.2 844.1 C716.4 851.6 727.4 859.1 738.8 866.0 C750.1 872.9 761.8 879.3 773.5 885.4 C785.2 891.5 797.2 897.1 809.0 902.7 C820.8 908.2 832.6 913.6 844.3 918.8 C856.1 924.0 867.0 928.5 879.5 933.9 C892.0 939.2 912.9 948.1 919.5 950.9" stroke="#e6e6e6" stroke-width="1" fill="none" /><path d="M260.0 372.0 C271.7 384.3 308.0 422.3 330.0 446.0 C352.0 469.7 368.7 489.7 392.0 514.0 C415.3 538.3 442.0 564.3 470.0 592.0 C498.0 619.7 531.7 653.3 560.0 680.0 C588.3 706.7 613.3 730.7 640.0 752.0 C666.7 773.3 690.0 789.3 720.0 808.0 C750.0 826.7 786.7 846.7 820.0 864.0 C853.3 881.3 893.3 899.7 920.0 912.0 C946.7 924.3 970.0 933.7 980.0 938.0" stroke="#e6e6e6" stroke-width="1" fill="none" /><path d="M260.0 380.0 C271.7 392.3 308.3 430.7 330.0 454.0 C351.7 477.3 380.0 509.0 390.0 520.0" stroke="#e6e6e6" stroke-width="1" fill="none" /><path d="M260.0 505.0 C271.7 516.8 306.7 551.8 330.0 576.0 C353.3 600.2 376.7 626.0 400.0 650.0 C423.3 674.0 443.3 695.0 470.0 720.0 C496.7 745.0 530.0 774.2 560.0 800.0 C590.0 825.8 623.3 852.0 650.0 875.0 C676.7 898.0 708.3 927.5 720.0 938.0" stroke="#bdbdbd" stroke-width="1" fill="none" /><path d="M260.0 540.0 C268.3 548.3 293.3 573.3 310.0 590.0 C326.7 606.7 351.7 631.7 360.0 640.0" stroke="#e6e6e6" stroke-width="1" fill="none" /><path d="M382.0 600.0 C386.4 604.3 396.5 608.5 408.6 626.0 C420.7 643.5 437.0 674.2 454.5 704.8 C472.0 735.4 491.6 770.9 513.4 809.6 C535.2 848.4 573.4 916.0 585.4 937.3" stroke="#e6e6e6" stroke-width="1" fill="none" /><path d="M412.0 600.0 C419.6 616.3 441.4 669.1 457.7 698.0 C474.0 726.9 490.9 752.2 510.0 773.5 C529.1 794.8 546.1 807.4 572.3 826.0 C598.5 844.6 642.7 866.3 667.3 885.0 C691.9 903.7 711.2 929.2 720.0 938.0" stroke="#e6e6e6" stroke-width="1" fill="none" /><path d="M432.0 636.0 C438.3 646.7 455.3 676.0 470.0 700.0 C484.7 724.0 498.3 746.7 520.0 780.0 C541.7 813.3 583.3 873.7 600.0 900.0 C616.7 926.3 616.7 931.7 620.0 938.0" stroke="#e6e6e6" stroke-width="1" fill="none" /><path d="M408.0 620.0 L425.0 642.0" stroke="#e6e6e6" stroke-width="1" fill="none" /><path d="M434.0 660.0 L448.0 685.0" stroke="#e6e6e6" stroke-width="1" fill="none" /><rect x="391" y="516" width="26" height="26" fill="none" stroke="#eee"/><rect x="395" y="520" width="18" height="18" fill="none" stroke="#eee"/><path d="M395 520l18 18M413 520l-18 18" stroke="#eee"/><path d="M260.0 301.0 L306.0 288.0" stroke="#e6e6e6" stroke-width="1" fill="none" /><path d="M260.0 306.0 L287.0 327.0" stroke="#e6e6e6" stroke-width="1" fill="none" /><path d="M296.6 339.4 C303.0 349.5 323.8 382.4 335.0 400.0 C346.2 417.6 358.4 433.1 363.7 444.9 C369.0 456.6 363.8 460.4 367.0 470.5 C370.2 480.6 377.5 497.4 383.0 505.7 C388.5 514.0 397.2 517.6 400.0 520.0" stroke="#bdbdbd" stroke-width="1" fill="none" /><path d="M340.0 337.0 C338.7 339.2 331.2 342.0 332.0 350.0 C332.8 358.0 340.0 375.0 345.0 385.0 C350.0 395.0 356.2 403.3 362.0 410.0 C367.8 416.7 377.0 422.5 380.0 425.0" stroke="#bdbdbd" stroke-width="1" fill="none" /><path d="M335.0 338.0 C337.2 335.0 343.8 324.3 348.0 320.0 C352.2 315.7 358.0 313.3 360.0 312.0" stroke="#bdbdbd" stroke-width="1" fill="none" /><path d="M307.0 294.0 C309.2 293.7 312.0 292.7 320.0 292.0 C328.0 291.3 342.5 290.7 355.0 290.0 C367.5 289.3 388.3 288.3 395.0 288.0" stroke="#bdbdbd" stroke-width="1" fill="none" /><path d="M330.0 310.0 C335.0 308.3 346.7 302.3 360.0 300.0 C373.3 297.7 401.7 296.7 410.0 296.0" stroke="#bdbdbd" stroke-width="1" fill="none" /><path d="M452.0 375.0 C455.8 374.2 468.7 372.2 475.0 370.0 C481.3 367.8 485.0 365.3 490.0 362.0 C495.0 358.7 502.5 352.0 505.0 350.0" stroke="#bdbdbd" stroke-width="1" fill="none" /><path d="M454.8 286.0 L451.3 293.7 L459.0 297.2 M456.9 308.7 L464.6 312.2 L461.0 319.9 L468.8 323.4 L465.2 331.0 M473.9 338.7 L470.0 346.3 L477.5 350.2 L473.6 357.7 L481.1 361.6 M476.4 371.7 L481.3 378.6 L474.4 383.6 L479.4 390.5 L472.5 395.4 M476.7 406.5 L469.4 410.8 L473.6 418.1 L466.3 422.4 L470.5 429.7 M462.1 437.8 L466.4 445.2 L459.3 448.7 L461.6 456.9 L453.4 459.2 M453.8 470.8 L445.6 473.2 " stroke="#e6e6e6" stroke-width="1" fill="none"/><rect x="-3" y="-3" width="6" height="6" fill="none" stroke="#e6e6e6" transform="translate(458.3 303.9) rotate(85)"/><rect x="-3" y="-3" width="6" height="6" fill="none" stroke="#e6e6e6" transform="translate(469.8 335.8) rotate(87)"/><rect x="-3" y="-3" width="6" height="6" fill="none" stroke="#e6e6e6" transform="translate(480.0 368.3) rotate(114)"/><rect x="-3" y="-3" width="6" height="6" fill="none" stroke="#e6e6e6" transform="translate(474.5 401.8) rotate(114)"/><rect x="-3" y="-3" width="6" height="6" fill="none" stroke="#e6e6e6" transform="translate(466.1 434.7) rotate(120)"/><rect x="-3" y="-3" width="6" height="6" fill="none" stroke="#e6e6e6" transform="translate(453.1 465.9) rotate(134)"/><path d="M476.0 368.0 C472.7 370.3 462.0 379.0 456.0 382.0 C450.0 385.0 442.7 385.3 440.0 386.0" stroke="#bdbdbd" stroke-width="1" fill="none" /><path d="M402.0 450.0 C406.7 449.2 422.8 446.7 430.0 445.0 C437.2 443.3 442.5 440.8 445.0 440.0" stroke="#e6e6e6" stroke-width="1" fill="none" /><path d="M382.0 458.0 C382.3 461.7 383.5 473.0 384.0 480.0 C384.5 487.0 384.8 496.7 385.0 500.0" stroke="#bdbdbd" stroke-width="1" fill="none" /><path d="M409.5 486.7 L452.0 456.0 L461.8 466.0 L418.2 497.6 L409.5 486.7" stroke="#e6e6e6" stroke-width="1" fill="none" /><path d="M409.5 486.7 L461.8 466.0" stroke="#bdbdbd" stroke-width="1" fill="none" /><path d="M452.0 456.0 L418.2 497.6" stroke="#bdbdbd" stroke-width="1" fill="none" /><path d="M425.0 478.0 L440.0 500.0" stroke="#bdbdbd" stroke-width="1" fill="none" /><path d="M466.0 460.0 L526.0 341.0 L544.0 350.0 L484.0 469.0 L466.0 460.0" stroke="#e6e6e6" stroke-width="1" fill="none" /><path d="M466.0 460.0 L544.0 350.0" stroke="#e6e6e6" stroke-width="1" fill="none" /><path d="M526.0 341.0 L484.0 469.0" stroke="#e6e6e6" stroke-width="1" fill="none" /><path d="M531.0 427.0 L568.0 361.0 L587.0 371.0 L550.0 438.0 L531.0 427.0" stroke="#e6e6e6" stroke-width="1" fill="none" /><path d="M531.0 427.0 L587.0 371.0" stroke="#e6e6e6" stroke-width="1" fill="none" /><path d="M568.0 361.0 L550.0 438.0" stroke="#e6e6e6" stroke-width="1" fill="none" /><path d="M484.0 510.0 L524.0 466.0" stroke="#e6e6e6" stroke-width="1" fill="none" /><path d="M489.0 514.0 L530.0 470.0" stroke="#e6e6e6" stroke-width="1" fill="none" /><path d="M521.0 287.0 C522.2 290.0 527.0 295.3 528.0 305.0 C529.0 314.7 528.3 334.2 527.0 345.0 C525.7 355.8 521.2 365.8 520.0 370.0" stroke="#bdbdbd" stroke-width="1" fill="none" /><path d="M536.0 287.0 C537.5 292.5 542.2 310.3 545.0 320.0 C547.8 329.7 551.7 340.8 553.0 345.0" stroke="#bdbdbd" stroke-width="1" fill="none" /><path d="M560.0 306.0 C561.2 310.0 564.8 321.0 567.0 330.0 C569.2 339.0 572.0 355.0 573.0 360.0" stroke="#bdbdbd" stroke-width="1" fill="none" /><path d="M548.0 310.0 C550.7 315.3 559.3 333.7 564.0 342.0 C568.7 350.3 574.2 353.7 576.0 360.0 C577.8 366.3 578.8 366.7 575.0 380.0 C571.2 393.3 560.5 423.3 553.0 440.0 C545.5 456.7 538.8 466.7 530.0 480.0 C521.2 493.3 509.2 510.0 500.0 520.0 C490.8 530.0 479.2 536.7 475.0 540.0" stroke="#e6e6e6" stroke-width="1" fill="none" /><path d="M480.0 566.0 C479.2 570.0 475.3 581.0 475.0 590.0 C474.7 599.0 478.0 610.0 478.0 620.0 C478.0 630.0 475.5 645.0 475.0 650.0" stroke="#bdbdbd" stroke-width="1" fill="none" /><path d="M440.0 503.0 C441.2 507.5 443.7 523.8 447.0 530.0 C450.3 536.2 457.8 538.3 460.0 540.0" stroke="#bdbdbd" stroke-width="1" fill="none" /><path d="M447.0 570.0 C450.8 567.0 463.5 557.0 470.0 552.0 C476.5 547.0 481.8 543.7 486.0 540.0 C490.2 536.3 492.7 533.3 495.0 530.0 C497.3 526.7 499.2 521.7 500.0 520.0" stroke="#bdbdbd" stroke-width="1" fill="none" /><path d="M493.0 287.0 C493.8 292.5 495.5 309.5 498.0 320.0 C500.5 330.5 506.3 345.0 508.0 350.0" stroke="#bdbdbd" stroke-width="1" fill="none" /><path d="M613.7 285.0 L613.7 294.5 L619.4 299.2 L638.3 300.1 L644.0 294.5 L644.0 285.0" stroke="#e6e6e6" stroke-width="1" fill="none" /><path d="M618.4 300.0 C617.9 303.2 618.3 313.3 615.6 319.0 C612.9 324.7 604.6 331.5 602.4 334.0" stroke="#bdbdbd" stroke-width="1" fill="none" /><path d="M635.5 301.0 C635.0 303.1 635.0 308.8 632.6 313.4 C630.2 318.0 624.8 323.9 621.3 328.5 C617.8 333.1 616.2 337.5 611.8 340.8 C607.4 344.1 599.5 344.1 594.8 348.3 C590.1 352.6 585.4 363.3 583.5 366.3" stroke="#e6e6e6" stroke-width="1" fill="none" /><path d="M553.2 326.6 C555.7 330.7 565.9 345.3 568.4 351.0 C570.9 356.7 568.4 359.0 568.4 360.6" stroke="#bdbdbd" stroke-width="1" fill="none" /><path d="M562.7 318.0 C565.2 320.7 576.1 326.9 577.8 334.0 C579.5 341.1 573.8 356.2 573.0 360.6" stroke="#bdbdbd" stroke-width="1" fill="none" /><path d="M596.7 287.0 L577.8 334.0 L573.0 360.6" stroke="#e6e6e6" stroke-width="1" fill="none" /><path d="M742.0 287.0 C739.7 309.2 732.2 381.2 728.0 420.0 C723.8 458.8 719.8 486.7 717.0 520.0 C714.2 553.3 713.8 590.0 711.0 620.0 C708.2 650.0 703.5 670.0 700.0 700.0 C696.5 730.0 693.7 760.3 690.0 800.0 C686.3 839.7 680.0 915.0 678.0 938.0" stroke="#e6e6e6" stroke-width="1" fill="none" /><path d="M760.0 287.0 C758.5 309.2 754.3 381.2 751.0 420.0 C747.7 458.8 743.8 486.7 740.0 520.0 C736.2 553.3 732.7 586.7 728.0 620.0 C723.3 653.3 716.7 683.7 712.0 720.0 C707.3 756.3 702.8 801.7 700.0 838.0 C697.2 874.3 695.8 921.3 695.0 938.0" stroke="#e6e6e6" stroke-width="1" fill="none" /><path d="M762.0 287.0 C759.7 305.8 754.5 366.2 748.0 400.0 C741.5 433.8 731.0 471.7 723.0 490.0 C715.0 508.3 705.5 501.7 700.0 510.0 C694.5 518.3 693.3 521.7 690.0 540.0 C686.7 558.3 685.0 590.0 680.0 620.0 C675.0 650.0 670.0 683.3 660.0 720.0 C650.0 756.7 630.0 803.7 620.0 840.0 C610.0 876.3 603.3 921.7 600.0 938.0" stroke="#bdbdbd" stroke-width="1" fill="none" /><path d="M818.0 287.0 C813.3 294.2 798.7 311.2 790.0 330.0 C781.3 348.8 771.0 375.0 766.0 400.0 C761.0 425.0 760.0 453.3 760.0 480.0 C760.0 506.7 762.3 535.0 766.0 560.0 C769.7 585.0 776.3 606.7 782.0 630.0 C787.7 653.3 795.3 678.3 800.0 700.0 C804.7 721.7 810.0 738.3 810.0 760.0 C810.0 781.7 805.0 806.7 800.0 830.0 C795.0 853.3 786.7 882.0 780.0 900.0 C773.3 918.0 763.3 931.7 760.0 938.0" stroke="#bdbdbd" stroke-width="1" fill="none" /><path d="M730.0 558.0 C732.5 557.2 740.0 551.8 745.0 553.0 C750.0 554.2 750.8 563.5 760.0 565.0 C769.2 566.5 788.3 563.3 800.0 562.0 C811.7 560.7 816.7 559.8 830.0 557.0 C843.3 554.2 861.0 551.9 880.0 545.0 C899.0 538.1 923.7 524.6 944.0 515.7 C964.3 506.8 989.6 496.8 1001.9 491.7 C1014.2 486.6 1015.2 486.4 1017.9 485.3" stroke="#bdbdbd" stroke-width="1" fill="none" /><path d="M944.3 287.0 L944.3 938.0" stroke="#cfcfcf" stroke-width="1" fill="none" /><path d="M260.0 735.9 L1980.0 735.9" stroke="#dcdcdc" stroke-width="1" fill="none" /><rect x="941" y="733" width="6" height="6" fill="none" stroke="#d22"/><path d="M810.0 306.0 L861.0 344.0 L1005.0 485.3 L1020.0 540.0 L1038.0 630.0 L1040.0 700.0" stroke="#bdbdbd" stroke-width="1" fill="none" /><path d="M944.3 299.8 L1097.8 427.7" stroke="#bdbdbd" stroke-width="1" fill="none" /><path d="M810.0 335.0 L947.5 287.0" stroke="#bdbdbd" stroke-width="1" fill="none" /><path d="M883.6 341.4 C879.3 347.2 863.9 361.6 858.0 376.5 C852.1 391.4 849.7 408.5 848.4 430.9 C847.1 453.3 847.9 492.2 850.0 510.9 C852.1 529.5 855.6 534.3 861.2 542.8 C866.8 551.3 869.8 555.1 883.6 562.0 C897.5 568.9 924.6 579.1 944.3 584.4 C964.0 589.7 992.3 592.4 1001.9 594.0" stroke="#bdbdbd" stroke-width="1" fill="none" /><path d="M810.0 550.8 C822.3 548.4 861.2 542.2 883.6 536.4 C906.0 530.5 924.6 523.2 944.3 515.7 C964.0 508.3 985.9 501.1 1001.9 491.7 C1017.9 482.2 1023.6 469.6 1040.0 459.0 C1056.3 448.4 1083.2 439.0 1100.0 428.0 C1116.8 417.0 1125.8 408.8 1140.5 392.8 C1155.2 376.8 1176.1 349.6 1188.0 332.0 C1199.9 314.4 1208.0 294.5 1212.0 287.0" stroke="#e6e6e6" stroke-width="1" fill="none" /><path d="M1017.9 490.0 C1021.6 487.0 1024.8 483.3 1040.0 472.0 C1055.2 460.7 1092.0 435.7 1108.8 422.0 C1125.5 408.3 1120.2 411.2 1140.5 390.0 C1160.8 368.8 1213.9 312.2 1230.5 295.0 C1247.1 277.8 1238.4 288.3 1240.0 287.0" stroke="#e6e6e6" stroke-width="1" fill="none" /><path d="M1062.6 287.0 C1064.2 292.3 1067.4 308.3 1072.2 319.0 C1077.0 329.7 1087.4 340.3 1091.4 351.0 C1095.4 361.7 1096.2 371.3 1096.2 383.0 C1096.2 394.7 1096.5 411.2 1091.4 421.3 C1086.3 431.4 1076.5 435.7 1065.8 443.7 C1055.1 451.7 1035.5 462.4 1027.5 469.3 C1019.5 476.2 1019.0 478.4 1017.9 485.3 C1016.8 492.2 1017.3 498.6 1021.0 510.9 C1024.7 523.1 1031.2 544.9 1040.3 558.8 C1049.4 572.6 1068.5 584.3 1075.4 594.0 C1082.3 603.7 1080.7 613.2 1081.8 617.0" stroke="#bdbdbd" stroke-width="1" fill="none" /><path d="M1019.5 485.0 L1019.5 700.0" stroke="#bdbdbd" stroke-width="1" fill="none" /><path d="M1038.6 540.0 L1038.6 750.0" stroke="#bdbdbd" stroke-width="1" fill="none" /><path d="M990.0 287.0 C990.3 290.8 990.3 304.5 992.0 310.0 C993.7 315.5 995.3 318.7 1000.0 320.0 C1004.7 321.3 1011.7 319.7 1020.0 318.0 C1028.3 316.3 1041.7 313.3 1050.0 310.0 C1058.3 306.7 1065.0 301.8 1070.0 298.0 C1075.0 294.2 1078.3 288.8 1080.0 287.0" stroke="#bdbdbd" stroke-width="1" fill="none" /><path d="M1018.0 343.0 L1043.0 335.0" stroke="#bdbdbd" stroke-width="1" fill="none" /><path d="M1060.0 330.0 L1090.0 315.0" stroke="#bdbdbd" stroke-width="1" fill="none" /><path d="M1017.0 341.0 L1017.0 352.0 L1095.0 418.0" stroke="#bdbdbd" stroke-width="1" fill="none" /><path d="M717.0 642.0 L786.8 628.2 L1002.3 587.9 L1002.3 629.8 L833.3 676.3" stroke="#e6e6e6" stroke-width="1" fill="none" /><path d="M845.0 672.0 L975.0 636.0 L1002.3 629.8" stroke="#e6e6e6" stroke-width="1" fill="none" /><path d="M716.4 639.1 L723.5 643.7 L728.1 636.5 L735.2 641.1 M743.7 633.1 L750.9 637.7 L755.4 630.6 L762.6 635.2 L767.2 628.0 L774.3 632.6 M782.8 624.6 " stroke="#e6e6e6" stroke-width="1" fill="none"/><rect x="-3" y="-3" width="6" height="6" fill="none" stroke="#e6e6e6" transform="translate(740.5 636.9) rotate(3)"/><rect x="-3" y="-3" width="6" height="6" fill="none" stroke="#e6e6e6" transform="translate(779.5 628.4) rotate(3)"/><path d="M714.8 676.5 L722.0 680.9 L726.4 673.6 L733.7 678.0 M742.0 669.8 L749.2 674.2 L753.6 666.9 L760.9 671.3 L765.3 664.1 L772.5 668.5 M780.9 660.3 L788.1 664.8 L792.5 657.5 L799.8 661.9 L804.1 654.6 M815.3 657.8 L819.5 650.5 L826.9 654.7 L831.1 647.4 L838.8 651.3 L842.0 643.5 M853.3 646.5 L858.1 639.6 L865.1 644.5 L870.0 637.5 L877.1 642.2 L881.4 634.9 M892.6 638.2 L896.9 630.9 L904.2 635.2 L908.5 627.9 L915.8 632.3 L920.2 625.0 M931.3 628.4 L935.8 621.2 L943.0 625.6 L947.4 618.3 L954.7 622.8 L959.1 615.5 M970.2 619.0 L974.6 611.8 L981.9 616.2 L986.3 609.0 L993.6 613.4 L997.9 606.0 " stroke="#e6e6e6" stroke-width="1" fill="none"/><rect x="-3" y="-3" width="6" height="6" fill="none" stroke="#e6e6e6" transform="translate(738.8 673.7) rotate(1)"/><rect x="-3" y="-3" width="6" height="6" fill="none" stroke="#e6e6e6" transform="translate(777.7 664.2) rotate(1)"/><rect x="-3" y="-3" width="6" height="6" fill="none" stroke="#e6e6e6" transform="translate(810.6 655.9) rotate(0)"/><rect x="-3" y="-3" width="6" height="6" fill="none" stroke="#e6e6e6" transform="translate(848.8 644.2) rotate(5)"/><rect x="-3" y="-3" width="6" height="6" fill="none" stroke="#e6e6e6" transform="translate(888.0 636.3) rotate(1)"/><rect x="-3" y="-3" width="6" height="6" fill="none" stroke="#e6e6e6" transform="translate(926.8 626.5) rotate(1)"/><rect x="-3" y="-3" width="6" height="6" fill="none" stroke="#e6e6e6" transform="translate(965.6 617.0) rotate(2)"/><path d="M714.9 707.5 L722.0 712.1 L726.4 705.0 L733.8 709.2 M741.8 700.7 L749.2 704.8 L753.4 697.4 L760.8 701.5 L765.0 694.1 M776.2 697.3 L780.4 690.0 L787.8 694.3 L792.0 686.9 L799.4 691.2 L803.5 683.8 M814.8 686.6 L818.8 679.1 L826.3 683.1 L830.3 675.6 " stroke="#e6e6e6" stroke-width="1" fill="none"/><rect x="-3" y="-3" width="6" height="6" fill="none" stroke="#e6e6e6" transform="translate(738.8 704.7) rotate(-1)"/><rect x="-3" y="-3" width="6" height="6" fill="none" stroke="#e6e6e6" transform="translate(771.5 695.5) rotate(0)"/><rect x="-3" y="-3" width="6" height="6" fill="none" stroke="#e6e6e6" transform="translate(810.1 684.9) rotate(-2)"/><path d="M739 687 C741 682 745 682 745 688 C745 692 749 692 750 687 C752 682 756 682 756 688 C756 692 760 692 761 687 C763 682 767 682 767 688 C767 692 771 692 772 687" stroke="#e6e6e6" fill="none"/><path d="M800.0 625.7 L801.5 632.7" stroke="#e6e6e6" stroke-width="1" fill="none" /><path d="M814.5 623.0 L816.0 630.0" stroke="#e6e6e6" stroke-width="1" fill="none" /><path d="M829.0 620.3 L830.5 627.3" stroke="#e6e6e6" stroke-width="1" fill="none" /><path d="M843.5 617.6 L845.0 624.6" stroke="#e6e6e6" stroke-width="1" fill="none" /><path d="M858.0 614.9 L859.5 621.9" stroke="#e6e6e6" stroke-width="1" fill="none" /><path d="M872.5 612.2 L874.0 619.2" stroke="#e6e6e6" stroke-width="1" fill="none" /><path d="M887.0 609.5 L888.5 616.5" stroke="#e6e6e6" stroke-width="1" fill="none" /><path d="M901.5 606.8 L903.0 613.8" stroke="#e6e6e6" stroke-width="1" fill="none" /><path d="M916.0 604.0 L917.5 611.0" stroke="#e6e6e6" stroke-width="1" fill="none" /><path d="M930.5 601.3 L932.0 608.3" stroke="#e6e6e6" stroke-width="1" fill="none" /><path d="M945.0 598.6 L946.5 605.6" stroke="#e6e6e6" stroke-width="1" fill="none" /><path d="M959.5 595.9 L961.0 602.9" stroke="#e6e6e6" stroke-width="1" fill="none" /><path d="M974.0 593.2 L975.5 600.2" stroke="#e6e6e6" stroke-width="1" fill="none" /><path d="M988.5 590.5 L990.0 597.5" stroke="#e6e6e6" stroke-width="1" fill="none" /><path d="M848.0 671.2 L846.5 664.2" stroke="#e6e6e6" stroke-width="1" fill="none" /><path d="M863.0 667.0 L861.5 660.0" stroke="#e6e6e6" stroke-width="1" fill="none" /><path d="M878.0 662.9 L876.5 655.9" stroke="#e6e6e6" stroke-width="1" fill="none" /><path d="M893.0 658.7 L891.5 651.7" stroke="#e6e6e6" stroke-width="1" fill="none" /><path d="M908.0 654.5 L906.5 647.5" stroke="#e6e6e6" stroke-width="1" fill="none" /><path d="M923.0 650.4 L921.5 643.4" stroke="#e6e6e6" stroke-width="1" fill="none" /><path d="M938.0 646.2 L936.5 639.2" stroke="#e6e6e6" stroke-width="1" fill="none" /><path d="M953.0 642.1 L951.5 635.1" stroke="#e6e6e6" stroke-width="1" fill="none" /><path d="M968.0 637.9 L966.5 630.9" stroke="#e6e6e6" stroke-width="1" fill="none" /><path d="M983.0 633.8 L981.5 626.8" stroke="#e6e6e6" stroke-width="1" fill="none" /><path d="M898.4 564.7 L980.6 580.2 L999.2 588.0" stroke="#e6e6e6" stroke-width="1" fill="none" /><path d="M786.8 617.4 C789.4 618.4 794.3 622.7 802.3 623.6 C810.3 624.5 827.7 621.0 834.9 622.8 C842.1 624.6 843.6 629.4 845.7 634.4 C847.8 639.4 848.3 647.3 847.3 653.0 C846.3 658.7 844.4 662.5 839.5 668.5 C834.6 674.5 825.5 682.0 817.8 688.7 C810.0 695.4 797.9 703.6 793.0 708.8 C788.1 714.0 789.2 718.1 788.4 720.0" stroke="#e6e6e6" stroke-width="1" fill="none" /><path d="M771.3 572.4 L788.4 628.2" stroke="#e6e6e6" stroke-width="1" fill="none" /><path d="M904.7 720.0 C906.8 714.5 910.3 698.2 917.0 687.0 C923.7 675.8 935.7 661.5 945.0 653.0 C954.3 644.5 963.6 641.7 972.9 636.0 C982.2 630.3 996.1 621.8 1000.8 619.0" stroke="#bdbdbd" stroke-width="1" fill="none" /><path d="M768.0 582.0 L782.0 579.0" stroke="#bdbdbd" stroke-width="1" fill="none" /><path d="M768.0 602.0 L782.0 599.0" stroke="#bdbdbd" stroke-width="1" fill="none" /><path d="M768.0 615.0 L782.0 612.0" stroke="#bdbdbd" stroke-width="1" fill="none" /><path d="M768.0 632.0 L782.0 629.0" stroke="#bdbdbd" stroke-width="1" fill="none" /><path d="M768.0 645.0 L782.0 642.0" stroke="#bdbdbd" stroke-width="1" fill="none" /><path d="M910.0 605.0 C912.5 609.2 925.0 622.5 925.0 630.0 C925.0 637.5 915.8 643.3 910.0 650.0 C904.2 656.7 896.7 663.3 890.0 670.0 C883.3 676.7 876.7 678.3 870.0 690.0 C863.3 701.7 853.7 721.7 850.0 740.0 C846.3 758.3 847.2 781.7 848.0 800.0 C848.8 818.3 851.3 836.7 855.0 850.0 C858.7 863.3 865.8 865.3 870.0 880.0 C874.2 894.7 878.3 928.3 880.0 938.0" stroke="#bdbdbd" stroke-width="1" fill="none" /><path d="M942.0 630.0 C939.2 635.0 930.3 650.0 925.0 660.0 C919.7 670.0 913.3 676.7 910.0 690.0 C906.7 703.3 905.8 723.3 905.0 740.0 C904.2 756.7 902.5 773.3 905.0 790.0 C907.5 806.7 914.2 826.7 920.0 840.0 C925.8 853.3 935.0 860.0 940.0 870.0 C945.0 880.0 947.5 888.7 950.0 900.0 C952.5 911.3 954.2 931.7 955.0 938.0" stroke="#bdbdbd" stroke-width="1" fill="none" /><path d="M835.0 768.0 L1000.0 830.0" stroke="#bdbdbd" stroke-width="1" fill="none" /><path d="M810.0 827.0 L1000.0 893.0" stroke="#e6e6e6" stroke-width="1" fill="none" /><path d="M1000.0 830.0 L1005.0 760.0 L1009.0 690.0 L1012.0 610.0" stroke="#e6e6e6" stroke-width="1" fill="none" /><path d="M1000.0 893.0 L1010.0 860.0 L1015.0 800.0" stroke="#e6e6e6" stroke-width="1" fill="none" /><path d="M1030.0 640.0 C1030.8 653.3 1034.7 696.7 1035.0 720.0 C1035.3 743.3 1032.8 756.7 1032.0 780.0 C1031.2 803.3 1025.3 833.7 1030.0 860.0 C1034.7 886.3 1055.0 925.0 1060.0 938.0" stroke="#bdbdbd" stroke-width="1" fill="none" /><path d="M1182.9 391.1 L1359.5 555.0 L1160.8 772.6 L1037.8 665.4 L1037.8 532.9 L1182.9 391.1" stroke="#e6e6e6" stroke-width="1" fill="none" /><path d="M1182.9 403.7 L1345.6 555.0 L1160.8 760.0 L1050.5 659.1 L1050.5 536.1 L1182.9 403.7" stroke="#bdbdbd" stroke-width="1" fill="none" stroke-dasharray="5 2"/><path d="M1076.9 509.6 L1197.8 719.0" stroke="#e6e6e6" stroke-width="1" fill="none" stroke-dasharray="6 2"/><path d="M1103.4 483.1 L1234.7 678.0" stroke="#e6e6e6" stroke-width="1" fill="none" stroke-dasharray="6 2"/><path d="M1129.9 456.6 L1271.7 637.0" stroke="#e6e6e6" stroke-width="1" fill="none" stroke-dasharray="6 2"/><path d="M1156.4 430.2 L1308.6 596.0" stroke="#e6e6e6" stroke-width="1" fill="none" stroke-dasharray="6 2"/><path d="M1223.6 441.5 L1078.0 592.1" stroke="#bdbdbd" stroke-width="1" fill="none" stroke-dasharray="4 3"/><path d="M1264.2 479.3 L1105.6 648.0" stroke="#bdbdbd" stroke-width="1" fill="none" stroke-dasharray="4 3"/><path d="M1304.9 517.2 L1133.2 704.0" stroke="#bdbdbd" stroke-width="1" fill="none" stroke-dasharray="4 3"/><path d="M1257.0 295.0 C1249.0 303.3 1218.5 334.0 1209.0 345.0 C1199.5 356.0 1200.8 355.7 1200.0 361.0 C1199.2 366.3 1201.6 373.0 1204.0 377.0 C1206.4 381.0 1195.6 368.2 1214.6 385.0 C1233.6 401.8 1293.6 455.8 1317.8 477.5 C1342.0 499.2 1353.0 508.8 1360.0 515.0" stroke="#e6e6e6" stroke-width="1" fill="none" /><path d="M1040.0 530.0 L1170.0 400.0" stroke="#bdbdbd" stroke-width="1" fill="none" /><path d="M1214.4 375.3 L1252.3 410.0 L1242.8 419.4 L1205.0 387.9 L1214.4 375.3" stroke="#e6e6e6" stroke-width="1" fill="none" /><path d="M1296.4 510.9 L1340.5 551.9 L1331.1 561.3 L1286.9 520.3 L1296.4 510.9" stroke="#e6e6e6" stroke-width="1" fill="none" /><path d="M1069.4 558.2 L1082.0 583.4 L1069.4 602.3 L1082.0 614.9 L1069.4 640.2 L1078.8 665.4" stroke="#e6e6e6" stroke-width="1" fill="none" /><path d="M1176.6 785.2 L1378.4 558.2 L1630.6 302.8" stroke="#e6e6e6" stroke-width="1" fill="none" /><path d="M1186.0 791.5 L1384.7 567.6 L1633.8 315.4" stroke="#bdbdbd" stroke-width="1" fill="none" /><path d="M1012.6 937.8 L1160.8 782.0" stroke="#e6e6e6" stroke-width="1" fill="none" /><path d="M1025.2 937.8 L1170.3 788.4" stroke="#bdbdbd" stroke-width="1" fill="none" /><path d="M1157.7 937.8 L1302.7 917.6" stroke="#bdbdbd" stroke-width="1" fill="none" /><path d="M1636.9 309.1 L1753.6 422.6 L1302.7 908.2 L1189.2 791.5 L1636.9 309.1" stroke="#e6e6e6" stroke-width="1" fill="none" /><path d="M1636.9 321.7 L1741.0 422.6 L1302.7 895.6 L1201.8 791.5 L1636.9 321.7" stroke="#bdbdbd" stroke-width="1" fill="none" /><path d="M1245.3 744.5 L1346.5 848.3" stroke="#e6e6e6" stroke-width="1" fill="none" stroke-dasharray="5 2"/><path d="M1288.8 697.5 L1390.4 801.0" stroke="#e6e6e6" stroke-width="1" fill="none" stroke-dasharray="5 2"/><path d="M1332.3 650.6 L1434.2 753.7" stroke="#e6e6e6" stroke-width="1" fill="none" stroke-dasharray="5 2"/><path d="M1375.9 603.6 L1478.0 706.4" stroke="#e6e6e6" stroke-width="1" fill="none" stroke-dasharray="5 2"/><path d="M1419.4 556.6 L1521.9 659.1" stroke="#e6e6e6" stroke-width="1" fill="none" stroke-dasharray="5 2"/><path d="M1462.9 509.6 L1565.7 611.8" stroke="#e6e6e6" stroke-width="1" fill="none" stroke-dasharray="5 2"/><path d="M1506.4 462.6 L1609.5 564.5" stroke="#e6e6e6" stroke-width="1" fill="none" stroke-dasharray="5 2"/><path d="M1549.9 415.6 L1653.3 517.2" stroke="#e6e6e6" stroke-width="1" fill="none" stroke-dasharray="5 2"/><path d="M1593.4 368.7 L1697.2 469.9" stroke="#e6e6e6" stroke-width="1" fill="none" stroke-dasharray="5 2"/><path d="M1277.5 835.7 L1681.1 394.2" stroke="#bdbdbd" stroke-width="1" fill="none" stroke-dasharray="6 3"/><path d="M1309.0 917.6 L1753.6 444.7 L1763.1 457.3 L1819.8 476.2 L1857.7 488.8 L1876.6 514.0" stroke="#e6e6e6" stroke-width="1" fill="none" /><path d="M1318.5 927.1 L1756.8 463.6" stroke="#bdbdbd" stroke-width="1" fill="none" /><path d="M1331.1 937.8 L1529.7 709.5" stroke="#e6e6e6" stroke-width="1" fill="none" /><path d="M1537.0 698.0 L1545.5 697.7 L1545.2 689.3 M1556.4 686.1 L1556.1 677.6 L1564.6 677.3 L1564.3 668.8 L1572.8 668.5 L1572.5 660.0 M1583.7 656.8 L1583.5 648.4 L1591.9 648.1 L1591.7 639.6 L1600.1 639.3 M1602.6 627.9 L1611.1 627.6 L1610.8 619.1 L1619.3 618.9 L1619.0 610.4 M1630.2 607.2 L1629.9 598.7 L1638.4 598.4 L1638.0 589.9 L1646.5 589.5 L1646.2 581.1 M1657.4 577.8 L1657.0 569.3 L1665.5 569.0 L1665.2 560.5 L1673.6 560.2 M1676.0 548.7 L1684.5 548.4 L1684.2 539.9 L1692.6 539.6 L1692.3 531.1 M1703.5 527.8 L1703.1 519.3 L1711.8 519.7 L1712.6 511.3 L1721.0 512.1 L1721.8 503.7 M1733.4 501.9 L1734.2 493.5 L1742.6 494.3 L1743.4 485.9 L1751.9 486.7 M1755.8 475.7 " stroke="#e6e6e6" stroke-width="1" fill="none"/><rect x="-3" y="-3" width="6" height="6" fill="none" stroke="#e6e6e6" transform="translate(1551.5 686.9) rotate(-32)"/><rect x="-3" y="-3" width="6" height="6" fill="none" stroke="#e6e6e6" transform="translate(1578.8 657.7) rotate(-32)"/><rect x="-3" y="-3" width="6" height="6" fill="none" stroke="#e6e6e6" transform="translate(1602.0 632.9) rotate(-32)"/><rect x="-3" y="-3" width="6" height="6" fill="none" stroke="#e6e6e6" transform="translate(1625.3 608.1) rotate(-32)"/><rect x="-3" y="-3" width="6" height="6" fill="none" stroke="#e6e6e6" transform="translate(1652.4 578.7) rotate(-32)"/><rect x="-3" y="-3" width="6" height="6" fill="none" stroke="#e6e6e6" transform="translate(1675.5 553.7) rotate(-32)"/><rect x="-3" y="-3" width="6" height="6" fill="none" stroke="#e6e6e6" transform="translate(1698.6 528.7) rotate(-32)"/><rect x="-3" y="-3" width="6" height="6" fill="none" stroke="#e6e6e6" transform="translate(1728.4 502.2) rotate(-24)"/><rect x="-3" y="-3" width="6" height="6" fill="none" stroke="#e6e6e6" transform="translate(1754.6 480.6) rotate(-24)"/><path d="M1529.7 709.5 L1813.5 937.8" stroke="#e6e6e6" stroke-width="1" fill="none" /><path d="M1539.2 700.1 L1829.3 937.8" stroke="#e6e6e6" stroke-width="1" fill="none" stroke-dasharray="6 2"/><path d="M1271.2 602.3 C1275.4 611.8 1286.9 638.1 1296.4 659.1 C1305.9 680.1 1318.5 708.5 1327.9 728.4 C1337.4 748.4 1346.8 760.0 1353.2 778.9 C1359.5 797.8 1363.7 831.4 1365.8 842.0" stroke="#bdbdbd" stroke-width="1" fill="none" /><path d="M1391.0 539.3 C1393.1 549.8 1399.4 581.3 1403.6 602.3 C1407.8 623.3 1411.0 644.4 1416.2 665.4 C1421.5 686.4 1430.9 707.4 1435.1 728.4 C1439.3 749.5 1441.4 770.5 1441.4 791.5 C1441.4 812.5 1437.2 830.2 1435.1 854.6 C1433.0 879.0 1429.9 923.9 1428.8 937.8" stroke="#bdbdbd" stroke-width="1" fill="none" /><path d="M1618.0 362.7 C1611.7 371.1 1588.6 392.1 1580.2 413.1 C1571.8 434.1 1574.9 465.7 1567.6 488.8 C1560.2 511.9 1547.6 530.8 1536.0 551.9 C1524.5 572.9 1506.6 593.9 1498.2 614.9 C1489.8 636.0 1484.5 659.1 1485.6 678.0 C1486.6 696.9 1501.4 720.0 1504.5 728.4" stroke="#bdbdbd" stroke-width="1" fill="none" /><path d="M1693.7 419.4 C1689.5 428.9 1674.8 456.2 1668.5 476.2 C1662.2 496.2 1662.2 523.5 1655.9 539.3 C1649.6 555.0 1645.4 564.5 1630.6 570.8 C1615.9 577.1 1586.5 572.9 1567.6 577.1 C1548.7 581.3 1525.5 592.9 1517.1 596.0" stroke="#bdbdbd" stroke-width="1" fill="none" /><path d="M1258.6 703.2 C1259.6 701.1 1258.6 692.7 1264.9 690.6 C1271.2 688.5 1289.0 688.5 1296.4 690.6 C1303.8 692.7 1308.0 698.0 1309.0 703.2 C1310.1 708.5 1304.8 715.8 1302.7 722.1 C1300.6 728.4 1295.3 733.7 1296.4 741.1 C1297.5 748.4 1308.0 761.0 1309.0 766.3 C1310.1 771.5 1303.8 771.5 1302.7 772.6" stroke="#bdbdbd" stroke-width="1" fill="none" /><path d="M1264.9 596.0 C1267.0 593.9 1273.3 582.3 1277.5 583.4 C1281.7 584.5 1289.0 592.9 1290.1 602.3 C1291.1 611.8 1286.9 632.8 1283.8 640.2 C1280.6 647.5 1274.9 648.6 1271.2 646.5 C1267.5 644.4 1263.3 630.7 1261.7 627.5" stroke="#bdbdbd" stroke-width="1" fill="none" /><path d="M1239.6 829.3 C1243.8 823.0 1255.4 798.9 1264.9 791.5 C1274.3 784.2 1284.8 783.1 1296.4 785.2 C1308.0 787.3 1324.8 794.7 1334.2 804.1 C1343.7 813.6 1352.1 827.2 1353.2 842.0 C1354.2 856.7 1342.6 884.0 1340.5 892.4" stroke="#bdbdbd" stroke-width="1" fill="none" /><path d="M1378.4 917.6 L1441.4 873.5 L1504.5 842.0" stroke="#bdbdbd" stroke-width="1" fill="none" /><path d="M1322.0 595.4 C1322.0 605.8 1318.3 635.4 1322.0 657.6 C1325.7 679.8 1336.6 706.4 1344.0 728.6 C1351.4 750.8 1362.8 771.6 1366.5 790.8 C1370.2 810.0 1370.2 829.2 1366.5 844.0 C1362.8 858.8 1347.8 873.6 1344.0 879.5" stroke="#bdbdbd" stroke-width="1" fill="none" /><path d="M1326.5 591.0 C1333.2 596.9 1356.9 610.2 1366.5 626.5 C1376.1 642.8 1382.5 665.7 1384.0 688.6 C1385.5 711.5 1384.1 745.5 1375.3 764.0 C1366.5 782.5 1348.8 795.9 1331.0 799.6 C1313.2 803.3 1284.3 783.3 1268.8 786.3 C1253.2 789.3 1240.7 805.6 1237.7 817.4 C1234.7 829.2 1243.6 844.7 1251.0 857.3 C1258.4 869.9 1276.8 887.0 1282.0 892.9" stroke="#bdbdbd" stroke-width="1" fill="none" /><path d="M1388.7 546.6 C1388.7 555.5 1385.0 579.9 1388.7 599.9 C1392.4 619.9 1407.1 643.6 1410.8 666.5 C1414.5 689.4 1407.8 716.8 1410.8 737.5 C1413.8 758.2 1424.9 776.0 1428.6 790.8 C1432.3 805.6 1432.3 820.4 1433.0 826.3" stroke="#bdbdbd" stroke-width="1" fill="none" /><path d="M1419.7 595.4 C1421.9 609.5 1430.4 647.2 1433.0 679.8 C1435.6 712.4 1436.8 768.6 1435.3 790.8 C1433.8 813.0 1425.3 794.5 1424.2 813.0 C1423.1 831.5 1427.9 886.9 1428.6 901.7" stroke="#bdbdbd" stroke-width="1" fill="none" /><path d="M1268.8 480.0 C1271.0 486.7 1272.4 507.4 1282.0 520.0 C1291.6 532.6 1317.6 543.7 1326.5 555.5 C1335.4 567.3 1333.9 585.1 1335.4 591.0" stroke="#bdbdbd" stroke-width="1" fill="none" /><path d="M1388.7 542.0 C1392.4 540.5 1399.8 535.9 1410.8 533.0 C1421.8 530.1 1441.7 528.8 1455.0 524.4 C1468.3 520.0 1473.3 514.0 1490.8 506.6 C1508.3 499.2 1548.5 484.4 1560.0 480.0" stroke="#bdbdbd" stroke-width="1" fill="none" /><path d="M1424.0 591.0 C1429.2 588.0 1443.9 577.5 1455.0 573.0 C1466.1 568.5 1477.5 570.2 1490.8 564.3 C1504.1 558.4 1523.5 544.4 1535.0 537.7 C1546.5 531.1 1555.8 526.6 1560.0 524.4" stroke="#bdbdbd" stroke-width="1" fill="none" /><path d="M1499.6 648.7 C1501.1 645.0 1498.4 631.7 1508.5 626.5 C1518.6 621.3 1551.4 619.1 1560.0 617.6" stroke="#bdbdbd" stroke-width="1" fill="none" /><path d="M1025.2 810.4 L1066.2 766.3 L1176.6 835.7 L1094.6 917.6 L1025.2 810.4" stroke="#e6e6e6" stroke-width="1" fill="none" stroke-dasharray="6 2"/><path d="M1037.8 722.1 L1189.2 835.7 L1264.9 937.8" stroke="#bdbdbd" stroke-width="1" fill="none" /><path d="M1025.2 741.1 L1176.6 854.6 L1239.6 937.8" stroke="#e6e6e6" stroke-width="1" fill="none" /><path d="M1022.1 482.5 L1025.2 665.4 L1018.9 791.5 L1028.4 937.8" stroke="#e6e6e6" stroke-width="1" fill="none" /><path d="M1037.8 488.8 L1041.0 665.4 L1036.6 766.3" stroke="#bdbdbd" stroke-width="1" fill="none" /><path d="M1372.1 287.0 C1377.3 291.2 1389.9 305.9 1403.6 312.2 C1417.3 318.5 1447.8 313.3 1454.1 324.8 C1460.4 336.4 1449.9 367.9 1441.4 381.6 C1433.0 395.3 1418.3 401.6 1403.6 406.8 C1388.9 412.1 1367.9 413.1 1353.2 413.1 C1338.4 413.1 1317.4 399.5 1315.3 406.8 C1313.2 414.2 1338.4 442.6 1340.5 457.3 C1342.6 472.0 1324.8 483.5 1327.9 495.1 C1331.1 506.7 1350.0 522.4 1359.5 526.6 C1368.9 530.8 1380.5 521.4 1384.7 520.3" stroke="#bdbdbd" stroke-width="1" fill="none" /><path d="M1517.1 287.0 C1521.3 293.3 1539.2 309.1 1542.3 324.8 C1545.5 340.6 1539.2 360.6 1536.0 381.6 C1532.9 402.6 1530.8 435.2 1523.4 451.0 C1516.1 466.7 1505.6 469.9 1491.9 476.2 C1478.2 482.5 1456.2 484.6 1441.4 488.8 C1426.7 493.0 1409.9 499.3 1403.6 501.4" stroke="#bdbdbd" stroke-width="1" fill="none" /><path d="M1063.1 287.0 C1067.3 297.5 1083.0 329.0 1088.3 350.1 C1093.5 371.1 1095.6 396.3 1094.6 413.1 C1093.5 429.9 1092.5 440.5 1082.0 451.0 C1071.5 461.5 1039.9 472.0 1031.5 476.2" stroke="#bdbdbd" stroke-width="1" fill="none" /><path d="M1286.9 287.0 L1293.2 495.1" stroke="#aaa" stroke-width="1" fill="none" stroke-dasharray="2 6"/><path d="M1302.7 589.7 L1309.0 917.6" stroke="#999" stroke-width="1" fill="none" stroke-dasharray="2 8"/><path d="M1321.6 602.3 C1322.7 614.9 1324.8 657.0 1327.9 678.0 C1331.1 699.0 1337.9 709.5 1340.5 728.4 C1343.2 747.4 1339.5 773.6 1343.7 791.5 C1347.9 809.4 1362.1 828.3 1365.8 835.7" stroke="#bdbdbd" stroke-width="1" fill="none" /><path d="M1391.0 583.4 C1392.0 592.9 1394.1 621.2 1397.3 640.2 C1400.5 659.1 1406.2 675.9 1409.9 696.9 C1413.6 717.9 1416.2 745.3 1419.4 766.3 C1422.5 787.3 1427.3 813.6 1428.8 823.0" stroke="#bdbdbd" stroke-width="1" fill="none" /><path d="M1800.9 488.8 L1753.6 873.5" stroke="#e6e6e6" stroke-width="1" fill="none" stroke-dasharray="4 2"/><path d="M1753.6 873.5 C1757.3 876.6 1764.6 889.3 1775.7 892.4 C1786.7 895.6 1807.2 897.7 1819.8 892.4 C1832.4 887.2 1844.0 871.4 1851.4 860.9 C1858.7 850.4 1861.3 872.4 1864.0 829.3 C1866.6 786.3 1867.7 657.0 1867.1 602.3 C1866.6 547.7 1866.6 521.4 1860.8 501.4 C1855.0 481.4 1846.6 484.6 1832.4 482.5 C1818.3 480.4 1785.1 487.8 1775.7 488.8" stroke="#e6e6e6" stroke-width="1" fill="none" stroke-dasharray="4 2"/><path d="M1731.5 867.2 C1732.6 860.9 1732.6 839.9 1737.8 829.3 C1743.1 818.8 1755.7 810.4 1763.1 804.1 C1770.4 797.8 1778.8 793.6 1782.0 791.5" stroke="#bdbdbd" stroke-width="1" fill="none" /><path d="M1668.5 937.8 C1674.8 930.2 1695.8 904.2 1706.3 892.4 C1716.8 880.6 1727.3 871.4 1731.5 867.2" stroke="#bdbdbd" stroke-width="1" fill="none" /><path d="M1654.2 287.0 C1661.1 292.9 1680.9 308.9 1695.8 322.2 C1710.7 335.5 1725.1 355.8 1743.8 367.0 C1762.5 378.2 1789.0 385.1 1807.7 389.3 C1826.4 393.6 1839.7 393.6 1855.7 392.5 C1871.7 391.4 1890.3 385.7 1903.6 383.0 C1916.9 380.3 1922.9 376.5 1935.6 376.5 C1948.3 376.5 1972.6 381.9 1980.0 383.0" stroke="#1a2ad8" stroke-width="1" fill="none" /><path d="M1887.7 405.3 C1895.7 403.4 1920.2 394.6 1935.6 394.1 C1951.0 393.6 1972.6 400.8 1980.0 402.1" stroke="#1a2ad8" stroke-width="1" fill="none" /><path d="M1640.0 287.0 C1650.0 295.8 1682.5 324.5 1700.0 340.0 C1717.5 355.5 1728.3 370.0 1745.0 380.0 C1761.7 390.0 1779.2 396.2 1800.0 400.0 C1820.8 403.8 1846.7 404.0 1870.0 403.0 C1893.3 402.0 1921.7 394.8 1940.0 394.0 C1958.3 393.2 1973.3 397.3 1980.0 398.0" stroke="#bdbdbd" stroke-width="1" fill="none" /><path d="M1700.0 287.0 C1708.3 294.2 1735.0 317.8 1750.0 330.0 C1765.0 342.2 1770.0 352.0 1790.0 360.0 C1810.0 368.0 1845.0 376.3 1870.0 378.0 C1895.0 379.7 1921.7 370.2 1940.0 370.0 C1958.3 369.8 1973.3 375.8 1980.0 377.0" stroke="#e6e6e6" stroke-width="1" fill="none" /><path d="M1679.8 287.0 L1775.7 341.4 L1839.7 360.6 L1903.6 375.0 L1980.0 392.5" stroke="#e6e6e6" stroke-width="1.3" fill="none" stroke-dasharray="12 6"/><path d="M1640.0 350.0 C1650.0 349.2 1680.0 348.3 1700.0 345.0 C1720.0 341.7 1740.0 336.7 1760.0 330.0 C1780.0 323.3 1803.3 312.2 1820.0 305.0 C1836.7 297.8 1853.3 290.0 1860.0 287.0" stroke="#bdbdbd" stroke-width="1" fill="none" /><path d="M1763.0 287.0 L1763.0 372.0" stroke="#e6e6e6" stroke-width="1" fill="none" /><path d="M1750.0 287.0 C1749.2 294.2 1743.3 319.5 1745.0 330.0 C1746.7 340.5 1757.5 346.7 1760.0 350.0" stroke="#bdbdbd" stroke-width="1" fill="none" /><path d="M1944.0 287.0 C1945.0 292.5 1947.3 307.8 1950.0 320.0 C1952.7 332.2 1957.5 346.7 1960.0 360.0 C1962.5 373.3 1964.2 393.3 1965.0 400.0" stroke="#bdbdbd" stroke-width="1" fill="none" /><path d="M1920.0 287.0 C1921.7 294.2 1926.7 317.8 1930.0 330.0 C1933.3 342.2 1938.3 355.0 1940.0 360.0" stroke="#bdbdbd" stroke-width="1" fill="none" /><path d="M1930.0 340.0 L1950.0 325.0 L1980.0 290.0" stroke="#bdbdbd" stroke-width="1" fill="none" /><rect x="1772" y="410" width="66" height="64" rx="18" fill="none" stroke="#eee" stroke-width="1.2"/><path d="M1800.0 425.0 C1803.3 425.8 1814.7 425.8 1820.0 430.0 C1825.3 434.2 1830.0 446.7 1832.0 450.0" stroke="#bdbdbd" stroke-width="1" fill="none" /><path d="M1748.0 460.0 L1765.0 440.0 L1762.0 465.0" stroke="#e6e6e6" stroke-width="1" fill="none" /><path d="M1840.0 455.0 L1858.0 480.0 L1842.0 478.0" stroke="#e6e6e6" stroke-width="1" fill="none" /><path d="M1745.0 484.0 L1800.0 470.0 L1850.0 455.0" stroke="#bdbdbd" stroke-width="1" fill="none" /><path d="M1756.0 480.0 C1763.3 480.8 1783.5 482.5 1800.0 485.0 C1816.5 487.5 1843.3 489.2 1855.0 495.0 C1866.7 500.8 1867.2 505.8 1870.0 520.0 C1872.8 534.2 1871.7 570.0 1872.0 580.0" stroke="#e6e6e6" stroke-width="1" fill="none" /><path d="M1875.0 470.0 C1879.2 466.7 1892.5 457.5 1900.0 450.0 C1907.5 442.5 1910.0 434.2 1920.0 425.0 C1930.0 415.8 1950.0 400.8 1960.0 395.0 C1970.0 389.2 1976.7 390.8 1980.0 390.0" stroke="#bdbdbd" stroke-width="1" fill="none" /><path d="M1872.0 520.0 C1875.0 511.7 1882.0 483.3 1890.0 470.0 C1898.0 456.7 1910.0 448.3 1920.0 440.0 C1930.0 431.7 1945.0 423.3 1950.0 420.0" stroke="#e6e6e6" stroke-width="1" fill="none" /><path d="M1844.8 414.1 L1841.1 421.6 L1848.6 425.4 M1846.1 436.8 L1853.7 440.6 L1850.1 448.3 L1857.9 451.7 L1854.6 459.5 L1862.4 462.8 M1860.5 474.3 L1868.3 477.7 L1865.7 485.6 L1873.8 487.9 L1871.5 496.0 M1881.7 501.8 " stroke="#e6e6e6" stroke-width="1" fill="none"/><rect x="-3" y="-3" width="6" height="6" fill="none" stroke="#e6e6e6" transform="translate(1847.7 432.1) rotate(87)"/><rect x="-3" y="-3" width="6" height="6" fill="none" stroke="#e6e6e6" transform="translate(1861.8 469.5) rotate(83)"/><rect x="-3" y="-3" width="6" height="6" fill="none" stroke="#e6e6e6" transform="translate(1877.1 499.8) rotate(76)"/><path d="M1876.6 495.0 L1848.2 938.0" stroke="#e6e6e6" stroke-width="1" fill="none" /><path d="M1889.2 495.0 L1857.7 938.0" stroke="#e6e6e6" stroke-width="1" fill="none" /><path d="M1866.0 520.0 L1838.0 900.0" stroke="#bbb" stroke-width="1" fill="none" stroke-dasharray="3 2"/><path d="M1871.0 520.0 L1843.0 900.0" stroke="#bbb" stroke-width="1" fill="none" stroke-dasharray="3 2"/><path d="M1866.4 530.0 L1876.4 530.0" stroke="#e6e6e6" stroke-width="1" fill="none" /><path d="M1864.8 554.0 L1874.8 554.0" stroke="#e6e6e6" stroke-width="1" fill="none" /><path d="M1863.3 578.0 L1873.3 578.0" stroke="#e6e6e6" stroke-width="1" fill="none" /><path d="M1861.8 602.0 L1871.8 602.0" stroke="#e6e6e6" stroke-width="1" fill="none" /><path d="M1860.2 626.0 L1870.2 626.0" stroke="#e6e6e6" stroke-width="1" fill="none" /><path d="M1858.7 650.0 L1868.7 650.0" stroke="#e6e6e6" stroke-width="1" fill="none" /><path d="M1857.1 674.0 L1867.1 674.0" stroke="#e6e6e6" stroke-width="1" fill="none" /><path d="M1855.6 698.0 L1865.6 698.0" stroke="#e6e6e6" stroke-width="1" fill="none" /><path d="M1854.1 722.0 L1864.1 722.0" stroke="#e6e6e6" stroke-width="1" fill="none" /><path d="M1852.5 746.0 L1862.5 746.0" stroke="#e6e6e6" stroke-width="1" fill="none" /><path d="M1851.0 770.0 L1861.0 770.0" stroke="#e6e6e6" stroke-width="1" fill="none" /><path d="M1849.5 794.0 L1859.5 794.0" stroke="#e6e6e6" stroke-width="1" fill="none" /><path d="M1847.9 818.0 L1857.9 818.0" stroke="#e6e6e6" stroke-width="1" fill="none" /><path d="M1846.4 842.0 L1856.4 842.0" stroke="#e6e6e6" stroke-width="1" fill="none" /><path d="M1844.9 866.0 L1854.9 866.0" stroke="#e6e6e6" stroke-width="1" fill="none" /><path d="M1843.3 890.0 L1853.3 890.0" stroke="#e6e6e6" stroke-width="1" fill="none" /><path d="M1841.8 914.0 L1851.8 914.0" stroke="#e6e6e6" stroke-width="1" fill="none" /><path d="M1882.0 640.0 L1980.0 660.0" stroke="#bdbdbd" stroke-width="1" fill="none" /><path d="M1882.0 648.0 L1888.0 598.0 L1980.0 610.0" stroke="#bdbdbd" stroke-width="1" fill="none" /><path d="M1875.0 770.0 L1890.0 680.0 L1960.0 683.0 L1980.0 686.0" stroke="#bdbdbd" stroke-width="1" fill="none" /><path d="M1875.0 770.0 L1980.0 780.0" stroke="#bdbdbd" stroke-width="1" fill="none" /><path d="M1937.0 685.0 L1925.0 780.0" stroke="#bdbdbd" stroke-width="1" fill="none" /><path d="M1872.0 625.0 C1877.5 629.2 1897.8 637.5 1905.0 650.0 C1912.2 662.5 1912.5 680.0 1915.0 700.0 C1917.5 720.0 1916.7 753.3 1920.0 770.0 C1923.3 786.7 1925.0 791.7 1935.0 800.0 C1945.0 808.3 1972.5 816.7 1980.0 820.0" stroke="#bdbdbd" stroke-width="1" fill="none" /><path d="M1880.0 787.0 L1980.0 790.0" stroke="#bdbdbd" stroke-width="1" fill="none" /><path d="M1558.1 903.7 L1566.5 904.4 L1567.2 896.0 M1578.7 894.1 L1579.5 885.6 L1587.9 886.4 L1588.6 877.9 L1597.1 878.6 L1597.8 870.2 M1605.6 870.3 L1614.0 869.1 L1615.2 877.5 L1623.6 876.4 L1624.8 884.8 M1636.4 886.0 L1637.6 894.4 L1646.0 893.2 L1647.2 901.6 L1655.3 901.8 M1656.7 913.4 L1665.1 914.4 L1664.1 922.9 L1672.5 923.9 L1671.5 932.3 L1679.9 933.3 " stroke="#e6e6e6" stroke-width="1" fill="none"/><rect x="-3" y="-3" width="6" height="6" fill="none" stroke="#e6e6e6" transform="translate(1573.8 894.4) rotate(-25)"/><rect x="-3" y="-3" width="6" height="6" fill="none" stroke="#e6e6e6" transform="translate(1604.3 868.6) rotate(-25)"/><rect x="-3" y="-3" width="6" height="6" fill="none" stroke="#e6e6e6" transform="translate(1631.4 886.0) rotate(52)"/><rect x="-3" y="-3" width="6" height="6" fill="none" stroke="#e6e6e6" transform="translate(1656.6 908.4) rotate(67)"/><path d="M1850.7 867.6 L1853.2 875.7 L1861.3 873.2 M1867.2 883.3 L1875.4 880.8 L1877.8 889.0 L1885.9 886.5 L1888.4 894.7 L1896.5 892.1 M1902.6 902.0 L1910.7 899.5 L1913.3 907.6 L1921.4 905.0 L1923.9 913.1 M1935.6 912.3 L1938.2 920.4 L1946.2 917.8 L1948.9 925.8 L1957.0 923.1 M1963.2 933.0 L1971.3 930.3 L1974.0 938.3 " stroke="#e6e6e6" stroke-width="1" fill="none"/><rect x="-3" y="-3" width="6" height="6" fill="none" stroke="#e6e6e6" transform="translate(1865.1 878.7) rotate(43)"/><rect x="-3" y="-3" width="6" height="6" fill="none" stroke="#e6e6e6" transform="translate(1900.5 897.5) rotate(42)"/><rect x="-3" y="-3" width="6" height="6" fill="none" stroke="#e6e6e6" transform="translate(1930.6 913.2) rotate(42)"/><rect x="-3" y="-3" width="6" height="6" fill="none" stroke="#e6e6e6" transform="translate(1961.0 928.5) rotate(42)"/><path d="M1845.0 855.0 C1854.2 857.5 1882.5 864.2 1900.0 870.0 C1917.5 875.8 1936.7 884.2 1950.0 890.0 C1963.3 895.8 1975.0 902.5 1980.0 905.0" stroke="#bdbdbd" stroke-width="1" fill="none" /><path d="M1500.0 740.0 C1503.3 748.3 1510.0 775.0 1520.0 790.0 C1530.0 805.0 1548.3 816.7 1560.0 830.0 C1571.7 843.3 1584.0 852.0 1590.0 870.0 C1596.0 888.0 1595.0 926.7 1596.0 938.0" stroke="#bdbdbd" stroke-width="1" fill="none" /><path d="M1460.0 840.0 C1461.7 846.7 1468.7 863.7 1470.0 880.0 C1471.3 896.3 1468.3 928.3 1468.0 938.0" stroke="#bdbdbd" stroke-width="1" fill="none" /><path d="M1456.0 850.0 L1455.0 900.0" stroke="#bdbdbd" stroke-width="1" fill="none" /><path d="M1590.0 287.0 C1591.3 294.2 1594.7 319.5 1598.0 330.0 C1601.3 340.5 1603.0 345.8 1610.0 350.0 C1617.0 354.2 1628.3 355.0 1640.0 355.0 C1651.7 355.0 1673.3 350.8 1680.0 350.0" stroke="#bdbdbd" stroke-width="1" fill="none" /><g transform="translate(394 318)" fill="none" stroke="#dedede" stroke-width="1.1" stroke-linejoin="round"><path d="M1.5 2.5L4 0V16M1 16H7" transform="translate(0 0)"/><path d="M1.5 2.5L4 0V16M1 16H7" transform="translate(10 0)"/><path d="M7 16V0L0 11H9.5" transform="translate(20 0)"/><path d="M1.5 14V16" transform="translate(32 0)"/><path d="M3 0H6L8.5 2.5V5L6 7.5H3L0.5 5V2.5ZM3 7.5L0 10.5V13L3 16H6L9 13V10.5L6 7.5" transform="translate(37 0)"/></g><g transform="translate(316 398.7)" fill="none" stroke="#dedede" stroke-width="1.1" stroke-linejoin="round"><path d="M1.5 2.5L4 0V16M1 16H7" transform="translate(0 0)"/><path d="M1.5 2.5L4 0V16M1 16H7" transform="translate(10 0)"/><path d="M7 16V0L0 11H9.5" transform="translate(20 0)"/><path d="M1.5 14V16" transform="translate(32 0)"/><path d="M9 6L6 9H3L0 6V3L3 0H6L9 3V13L6 16H3L1 15" transform="translate(37 0)"/></g><g transform="translate(261 429)" fill="none" stroke="#dedede" stroke-width="1.1" stroke-linejoin="round"><path d="M3 0H6L9 3V13L6 16H3L0 13V3Z" transform="translate(0 0)"/><path d="M3 0H6L8.5 2.5V5L6 7.5H3L0.5 5V2.5ZM3 7.5L0 10.5V13L3 16H6L9 13V10.5L6 7.5" transform="translate(12 0)"/><path d="M1.5 14V16" transform="translate(24 0)"/><path d="M0 3L3 0H6L9 3V6L0 16H9" transform="translate(29 0)"/></g><g transform="translate(540 539)" fill="none" stroke="#dedede" stroke-width="1.1" stroke-linejoin="round"><path d="M1.5 2.5L4 0V16M1 16H7" transform="translate(0 0)"/><path d="M3 0H6L9 3V13L6 16H3L0 13V3Z" transform="translate(10 0)"/><path d="M0 2L2 0H7L9 2V6L7 8H3.5M7 8L9 10V14L7 16H2L0 14" transform="translate(22 0)"/><path d="M1.5 14V16" transform="translate(34 0)"/><path d="M7 16V0L0 11H9.5" transform="translate(39 0)"/></g><g transform="translate(645 277)" fill="none" stroke="#dedede" stroke-width="1.1" stroke-linejoin="round"><path d="M1.5 2.5L4 0V16M1 16H7" transform="translate(0 0)"/><path d="M3 0H6L9 3V13L6 16H3L0 13V3Z" transform="translate(10 0)"/><path d="M1.5 2.5L4 0V16M1 16H7" transform="translate(22 0)"/><path d="M1.5 14V16" transform="translate(32 0)"/><path d="M9 0H1L0.5 7L3 6H6L9 9V13L6 16H3L0 13" transform="translate(37 0)"/></g><g transform="translate(1003.5 414)" fill="none" stroke="#dedede" stroke-width="1.1" stroke-linejoin="round"><path d="M1.5 2.5L4 0V16M1 16H7" transform="translate(0 0)"/><path d="M1.5 2.5L4 0V16M1 16H7" transform="translate(10 0)"/><path d="M9 6L6 9H3L0 6V3L3 0H6L9 3V13L6 16H3L1 15" transform="translate(20 0)"/><path d="M1.5 14V16" transform="translate(32 0)"/><path d="M0 3L3 0H6L9 3V6L0 16H9" transform="translate(37 0)"/></g><g transform="translate(1134.6 442)" fill="none" stroke="#dedede" stroke-width="1.1" stroke-linejoin="round"><path d="M1.5 2.5L4 0V16M1 16H7" transform="translate(0 0)"/><path d="M0 3L3 0H6L9 3V6L0 16H9" transform="translate(10 0)"/><path d="M1.5 2.5L4 0V16M1 16H7" transform="translate(22 0)"/><path d="M1.5 14V16" transform="translate(32 0)"/><path d="M8.5 1.5L7 0H3L0 3V13L3 16H6L9 13V10L6 7H3L0 10" transform="translate(37 0)"/></g><g transform="translate(1233.7 280.6)" fill="none" stroke="#dedede" stroke-width="1.1" stroke-linejoin="round"><path d="M1.5 2.5L4 0V16M1 16H7" transform="translate(0 0)"/><path d="M0 3L3 0H6L9 3V6L0 16H9" transform="translate(10 0)"/><path d="M0 3L3 0H6L9 3V6L0 16H9" transform="translate(22 0)"/><path d="M1.5 14V16" transform="translate(34 0)"/><path d="M3 0H6L9 3V13L6 16H3L0 13V3Z" transform="translate(39 0)"/></g><g transform="translate(1411 409)" fill="none" stroke="#dedede" stroke-width="1.1" stroke-linejoin="round"><path d="M1.5 2.5L4 0V16M1 16H7" transform="translate(0 0)"/><path d="M1.5 2.5L4 0V16M1 16H7" transform="translate(10 0)"/><path d="M9 6L6 9H3L0 6V3L3 0H6L9 3V13L6 16H3L1 15" transform="translate(20 0)"/><path d="M1.5 14V16" transform="translate(32 0)"/><path d="M9 6L6 9H3L0 6V3L3 0H6L9 3V13L6 16H3L1 15" transform="translate(37 0)"/></g><g transform="translate(1054.6 676.7)" fill="none" stroke="#dedede" stroke-width="1.1" stroke-linejoin="round"><path d="M1.5 2.5L4 0V16M1 16H7" transform="translate(0 0)"/><path d="M0 3L3 0H6L9 3V6L0 16H9" transform="translate(10 0)"/><path d="M1.5 2.5L4 0V16M1 16H7" transform="translate(22 0)"/><path d="M1.5 14V16" transform="translate(32 0)"/><path d="M0 0H9L3 16" transform="translate(37 0)"/></g><g transform="translate(1081.8 827)" fill="none" stroke="#dedede" stroke-width="1.1" stroke-linejoin="round"><path d="M1.5 2.5L4 0V16M1 16H7" transform="translate(0 0)"/><path d="M0 3L3 0H6L9 3V6L0 16H9" transform="translate(10 0)"/><path d="M0 3L3 0H6L9 3V6L0 16H9" transform="translate(22 0)"/><path d="M1.5 14V16" transform="translate(34 0)"/><path d="M7 16V0L0 11H9.5" transform="translate(39 0)"/></g><g transform="translate(1238.5 620.8)" fill="none" stroke="#dedede" stroke-width="1.1" stroke-linejoin="round"><path d="M1.5 2.5L4 0V16M1 16H7" transform="translate(0 0)"/><path d="M1.5 2.5L4 0V16M1 16H7" transform="translate(10 0)"/><path d="M9 6L6 9H3L0 6V3L3 0H6L9 3V13L6 16H3L1 15" transform="translate(20 0)"/><path d="M1.5 14V16" transform="translate(32 0)"/><path d="M3 0H6L9 3V13L6 16H3L0 13V3Z" transform="translate(37 0)"/></g><g transform="translate(1246.5 702.3)" fill="none" stroke="#dedede" stroke-width="1.1" stroke-linejoin="round"><path d="M1.5 2.5L4 0V16M1 16H7" transform="translate(0 0)"/><path d="M1.5 2.5L4 0V16M1 16H7" transform="translate(10 0)"/><path d="M9 6L6 9H3L0 6V3L3 0H6L9 3V13L6 16H3L1 15" transform="translate(20 0)"/><path d="M1.5 14V16" transform="translate(32 0)"/><path d="M0 2L2 0H7L9 2V6L7 8H3.5M7 8L9 10V14L7 16H2L0 14" transform="translate(37 0)"/></g><g transform="translate(1241.7 928)" fill="none" stroke="#dedede" stroke-width="1.1" stroke-linejoin="round"><path d="M1.5 2.5L4 0V16M1 16H7" transform="translate(0 0)"/><path d="M1.5 2.5L4 0V16M1 16H7" transform="translate(10 0)"/><path d="M3 0H6L8.5 2.5V5L6 7.5H3L0.5 5V2.5ZM3 7.5L0 10.5V13L3 16H6L9 13V10.5L6 7.5" transform="translate(20 0)"/><path d="M1.5 14V16" transform="translate(32 0)"/><path d="M8.5 1.5L7 0H3L0 3V13L3 16H6L9 13V10L6 7H3L0 10" transform="translate(37 0)"/></g><g transform="translate(1922.8 365.3)" fill="none" stroke="#dedede" stroke-width="1.1" stroke-linejoin="round"><path d="M1.5 2.5L4 0V16M1 16H7" transform="translate(0 0)"/><path d="M3 0H6L9 3V13L6 16H3L0 13V3Z" transform="translate(10 0)"/><path d="M9 6L6 9H3L0 6V3L3 0H6L9 3V13L6 16H3L1 15" transform="translate(22 0)"/><path d="M1.5 14V16" transform="translate(34 0)"/><path d="M0 2L2 0H7L9 2V6L7 8H3.5M7 8L9 10V14L7 16H2L0 14" transform="translate(39 0)"/></g><g transform="translate(1964 506)" fill="none" stroke="#dedede" stroke-width="1.1" stroke-linejoin="round"><path d="M1.5 2.5L4 0V16M1 16H7" transform="translate(0 0)"/><path d="M3 0H6L9 3V13L6 16H3L0 13V3Z" transform="translate(10 0)"/></g><g transform="translate(1707 640)" fill="none" stroke="#dedede" stroke-width="1.1" stroke-linejoin="round"><path d="M1.5 2.5L4 0V16M1 16H7" transform="translate(0 0)"/><path d="M3 0H6L9 3V13L6 16H3L0 13V3Z" transform="translate(10 0)"/><path d="M0 2L2 0H7L9 2V6L7 8H3.5M7 8L9 10V14L7 16H2L0 14" transform="translate(22 0)"/><path d="M1.5 14V16" transform="translate(34 0)"/><path d="M9 6L6 9H3L0 6V3L3 0H6L9 3V13L6 16H3L1 15" transform="translate(39 0)"/></g><g transform="translate(297 746)" fill="none" stroke="#dedede" stroke-width="1.1" stroke-linejoin="round"><path d="M1.5 2.5L4 0V16M1 16H7" transform="translate(0 0)"/><path d="M3 0H6L9 3V13L6 16H3L0 13V3Z" transform="translate(10 0)"/><path d="M9 6L6 9H3L0 6V3L3 0H6L9 3V13L6 16H3L1 15" transform="translate(22 0)"/><path d="M1.5 14V16" transform="translate(34 0)"/><path d="M9 0H1L0.5 7L3 6H6L9 9V13L6 16H3L0 13" transform="translate(39 0)"/></g><g transform="translate(665 689)" fill="none" stroke="#dedede" stroke-width="1.1" stroke-linejoin="round"><path d="M1.5 2.5L4 0V16M1 16H7" transform="translate(0 0)"/><path d="M3 0H6L9 3V13L6 16H3L0 13V3Z" transform="translate(10 0)"/><path d="M0 0H9L3 16" transform="translate(22 0)"/><path d="M1.5 14V16" transform="translate(34 0)"/><path d="M0 2L2 0H7L9 2V6L7 8H3.5M7 8L9 10V14L7 16H2L0 14" transform="translate(39 0)"/></g><g transform="translate(529 892)" fill="none" stroke="#dedede" stroke-width="1.1" stroke-linejoin="round"><path d="M1.5 2.5L4 0V16M1 16H7" transform="translate(0 0)"/><path d="M3 0H6L9 3V13L6 16H3L0 13V3Z" transform="translate(10 0)"/><path d="M0 0H9L3 16" transform="translate(22 0)"/><path d="M1.5 14V16" transform="translate(34 0)"/><path d="M0 3L3 0H6L9 3V6L0 16H9" transform="translate(39 0)"/></g><g transform="rotate(-20 1757 822) translate(1757 806)" fill="none" stroke="#dedede" stroke-width="1.1" stroke-linejoin="round"><path d="M1.5 2.5L4 0V16M1 16H7" transform="translate(0 0)"/><path d="M3 0H6L9 3V13L6 16H3L0 13V3Z" transform="translate(10 0)"/><path d="M3 0H6L9 3V13L6 16H3L0 13V3Z" transform="translate(22 0)"/></g><g fill="none" stroke="#dedede" stroke-width="1.1"><path d="M398 862H414V855L409 848H403L398 855V866L403 872H412"/><path d="M420 843V872"/><path d="M448 851V872M448 858L442 851H436L431 858V865L436 872H442L448 865"/></g><path d="M318 560q6 4 0 8t0 8M322 556v26M316 570h8" stroke="#ddd" fill="none"/><path d="M478 800q6 4 0 8t0 8M482 796v26M476 810h8" stroke="#ddd" fill="none"/><text x="1784" y="452" font-size="17" font-family="Liberation Sans" fill="#d8d8d8">R</text><path d="M759 368l16-6M767 358l2 14M761 361l10 8" stroke="#e6e6e6" fill="none"/><path d="M894 475l16-6M902 465l2 14M896 468l10 8" stroke="#e6e6e6" fill="none"/><path d="M969 552l16-6M977 542l2 14M971 545l10 8" stroke="#e6e6e6" fill="none"/><path d="M965 715l16-6M973 705l2 14M967 708l10 8" stroke="#e6e6e6" fill="none"/><path d="M858 803l16-6M866 793l2 14M860 796l10 8" stroke="#e6e6e6" fill="none"/><path d="M835 800l16-6M843 790l2 14M837 793l10 8" stroke="#e6e6e6" fill="none"/><path d="M463 706h14M470 706v-9M465 706q0-5 -3-7M475 706q0-5 3-7M467 706l-2-6M473 706l2-6" stroke="#e6e6e6" fill="none"/><path d="M603 812h14M610 812v-9M605 812q0-5 -3-7M615 812q0-5 3-7M607 812l-2-6M613 812l2-6" stroke="#e6e6e6" fill="none"/><path d="M1551 432h14M1558 432v-9M1553 432q0-5 -3-7M1563 432q0-5 3-7M1555 432l-2-6M1561 432l2-6" stroke="#e6e6e6" fill="none"/><path d="M1391 586h14M1398 586v-9M1393 586q0-5 -3-7M1403 586q0-5 3-7M1395 586l-2-6M1401 586l2-6" stroke="#e6e6e6" fill="none"/><path d="M1373 773h14M1380 773v-9M1375 773q0-5 -3-7M1385 773q0-5 3-7M1377 773l-2-6M1383 773l2-6" stroke="#e6e6e6" fill="none"/><path d="M1780 391h14M1787 391v-9M1782 391q0-5 -3-7M1792 391q0-5 3-7M1784 391l-2-6M1790 391l2-6" stroke="#e6e6e6" fill="none"/><path d="M1393 585h14M1400 585v-9M1395 585q0-5 -3-7M1405 585q0-5 3-7M1397 585l-2-6M1403 585l2-6" stroke="#e6e6e6" fill="none"/><path d="M608 439 C610 434 614 434 614 440 C614 444 618 444 619 439 C621 434 625 434 625 440 C625 444 629 444 630 439 C632 434 636 434 636 440 C636 444 640 444 641 439" stroke="#e6e6e6" fill="none"/><path d="M1798 312 C1800 307 1804 307 1804 313 C1804 317 1808 317 1809 312 C1811 307 1815 307 1815 313 C1815 317 1819 317 1820 312 C1822 307 1826 307 1826 313 C1826 317 1830 317 1831 312" stroke="#e6e6e6" fill="none"/><path d="M1696 590 C1698 585 1702 585 1702 591 C1702 595 1706 595 1707 590 C1709 585 1713 585 1713 591 C1713 595 1717 595 1718 590 C1720 585 1724 585 1724 591 C1724 595 1728 595 1729 590" stroke="#e6e6e6" fill="none"/><path d="M279 724 C281 719 285 719 285 725 C285 729 289 729 290 724 C292 719 296 719 296 725 C296 729 300 729 301 724 C303 719 307 719 307 725 C307 729 311 729 312 724" stroke="#e6e6e6" fill="none"/><path d="M454 897 C456 892 460 892 460 898 C460 902 464 902 465 897 C467 892 471 892 471 898 C471 902 475 902 476 897 C478 892 482 892 482 898 C482 902 486 902 487 897" stroke="#e6e6e6" fill="none"/><path d="M605 901 C607 896 611 896 611 902 C611 906 615 906 616 901 C618 896 622 896 622 902 C622 906 626 906 627 901 C629 896 633 896 633 902 C633 906 637 906 638 901" stroke="#e6e6e6" fill="none"/><path d="M1875 806 C1877 801 1881 801 1881 807 C1881 811 1885 811 1886 806 C1888 801 1892 801 1892 807 C1892 811 1896 811 1897 806 C1899 801 1903 801 1903 807 C1903 811 1907 811 1908 806" stroke="#e6e6e6" fill="none"/><path d="M1806 727 C1808 722 1812 722 1812 728 C1812 732 1816 732 1817 727 C1819 722 1823 722 1823 728 C1823 732 1827 732 1828 727 C1830 722 1834 722 1834 728 C1834 732 1838 732 1839 727" stroke="#e6e6e6" fill="none"/><path d="M1680 895 C1682 890 1686 890 1686 896 C1686 900 1690 900 1691 895 C1693 890 1697 890 1697 896 C1697 900 1701 900 1702 895 C1704 890 1708 890 1708 896 C1708 900 1712 900 1713 895" stroke="#e6e6e6" fill="none"/></svg>
<div class="tbv" style="left:1980px;top:287px;width:27px;height:644px"></div>
<div class="a" style="left:1985px;top:281px;width:21px;height:6px;background:#f2f3f8"></div>
<div class="a" style="left:207px;top:938px;width:1800px;height:21px;background:#f0f0f0"></div>
<div class="a" style="left:207px;top:958px;width:1800px;height:2px;background:#8f8f8f"></div>
<div class="a" style="left:229px;top:960px;width:1778px;height:31px;background:#fff"></div>
<div class="a" style="left:229px;top:990.5px;width:1778px;height:1.5px;background:#8f8f8f"></div>
<div class="a" style="left:229px;top:992px;width:1778px;height:18px;background:#fff"></div>
<div class="a" style="left:207px;top:1010px;width:1800px;height:1px;background:#e2e2e2"></div>
<div class="a" style="left:207px;top:1011px;width:1800px;height:21px;background:#f0f0f0"></div>
<div class="a" style="left:207px;top:960px;width:22px;height:50px;background:linear-gradient(90deg,#c9d7ea,#b6c8e0)"></div>
<div class="t" style="left:-284.5px;width:1000px;text-align:center;top:960.1px;font-size:14px;line-height:14px;color:#222;">×</div>
<svg class="a" style="left:211px;top:982px;" width="14" height="26" viewBox="0 0 14 26"><path d="M2 2h9l-4.5 4z M2 16h9l-4.5 4z" fill="#222"/></svg>
<div class="t" style="left:1000px;top:940.7px;font-size:11px;line-height:11px;color:#1a1a1a;"></div>
<svg class="a" style="left:255px;top:938px;" width="240" height="20" viewBox="0 0 240 20"><path d="M6 5v9M16 5l-7 4.5l7 4.5z M24 5l-7 4.5l7 4.5z" fill="#999" stroke="#999"/><path d="M38 5l7 4.5l-7 4.5z M50 5l7 4.5l-7 4.5z M58 5v9" fill="#999" stroke="#999"/><path d="M66 1L72 15H108L115 1" stroke="#333" fill="#fff"/><path d="M115 1L121 15H160L166 1" stroke="#333" fill="none"/><path d="M166 1L172 15H214L220 1" stroke="#333" fill="none"/><path d="M0 15.5H240" stroke="#bbb"/></svg>
<div class="t" style="left:333px;top:941.7px;font-size:11px;line-height:11px;color:#1a1a1a;">Model</div>
<div class="t" style="left:377px;top:941.7px;font-size:11px;line-height:11px;color:#1a1a1a;">Layout1</div>
<div class="t" style="left:433px;top:941.7px;font-size:11px;line-height:11px;color:#1a1a1a;">Layout2</div>
<div class="a" style="left:1985px;top:291px;width:17px;height:2px;background:repeating-linear-gradient(90deg,#9a9cab 0 1.5px,transparent 1.5px 3.5px)"></div>
<div class="t" style="left:414px;top:972.4px;font-size:12.5px;line-height:12.5px;color:#1a1a1a;font-family:'Liberation Mono',monospace;-webkit-text-stroke:0.3px #1a1a1a">release</div>
<div class="t" style="left:231px;top:972.4px;font-size:12.5px;line-height:12.5px;color:#666;font-family:'Liberation Mono',monospace;">File Version: R15 (2000)</div>
<div class="t" style="left:231px;top:955.4px;font-size:12.5px;line-height:12.5px;color:#666;font-family:'Liberation Mono',monospace;">Li</div>
<div class="t" style="left:230px;top:995.2px;font-size:11px;line-height:11px;color:#111;font-family:'Liberation Mono',monospace;">Command: LI</div>
<div class="a" style="left:303px;top:994px;width:1px;height:13px;background:#000"></div>
<svg class="a" style="left:1990px;top:962px;" width="14" height="28" viewBox="0 0 14 28"><path d="M3 8l4-4l4 4M3 20l4 4l4-4" stroke="#333" fill="none" stroke-width="1.2"/></svg>
<div class="t" style="left:211px;top:1017.7px;font-size:11px;line-height:11px;color:#111;">Ready</div>
<div class="a" style="left:1397px;top:1014px;width:1px;height:17px;background:#d0d0d0"></div>
<div class="t" style="left:1403px;top:1017.7px;font-size:11px;line-height:11px;color:#111;">-30437.8503,185201.0278,0</div>
<div class="a" style="left:1568px;top:1014px;width:1px;height:17px;background:#d0d0d0"></div>
<div class="t" style="left:1573px;top:1017.7px;font-size:11px;line-height:11px;color:#111;">OpenGL</div>
<div class="t" style="left:1634px;top:1017.7px;font-size:11px;line-height:11px;color:#111;">1:1</div>
<div class="t" style="left:1840px;top:1017.7px;font-size:11px;line-height:11px;color:#111;">MODEL</div>
<div class="a" style="left:1613.6px;top:1014px;width:1px;height:17px;background:#d0d0d0"></div>
<div class="a" style="left:1652px;top:1014px;width:1px;height:17px;background:#d0d0d0"></div>
<div class="a" style="left:1838px;top:1014px;width:1px;height:17px;background:#d0d0d0"></div>
<div class="a" style="left:1880px;top:1014px;width:1px;height:17px;background:#d0d0d0"></div>
<div class="a" style="left:1916px;top:1014px;width:1px;height:17px;background:#d0d0d0"></div>
<div class="t" style="left:1883px;top:1017.7px;font-size:11px;line-height:11px;color:#999;transform:scaleX(0.85);transform-origin:0 0">TABLET</div>
<svg class="a" style="left:255.5px;top:60.5px" width="16" height="16" viewBox="0 0 16 16"><path d="M4.5 2.5h6l3 3v9h-9z" fill="#fff" stroke="#444"/><path d="M10.5 2.5v3h3" fill="none" stroke="#444"/><circle cx="4" cy="4" r="2.6" fill="#f5b335"/><path d="M4 0v8M0 4h8" stroke="#f5b335" stroke-width="0.8"/></svg>
<svg class="a" style="left:276px;top:60.5px" width="16" height="16" viewBox="0 0 16 16"><path d="M1 4h5l1 1h6v9H1z" fill="#555"/><path d="M2.5 8h12l-1.5 6.5H1z" fill="#f2b13e"/><circle cx="11.5" cy="4.5" r="3.5" fill="#2f9c63"/><path d="M10 3l3 3M13 4v2h-2" stroke="#fff" fill="none"/></svg>
<svg class="a" style="left:297px;top:60.5px" width="16" height="16" viewBox="0 0 16 16"><rect x="1.5" y="1.5" width="13" height="13" rx="1" fill="#7d45a8"/><rect x="4" y="2.5" width="8" height="5" fill="#e8e0f0"/><rect x="5" y="10" width="6" height="4.5" fill="#fff"/><rect x="7" y="11" width="2" height="3" fill="#7d45a8"/></svg>
<svg class="a" style="left:317px;top:60.5px" width="16" height="16" viewBox="0 0 16 16"><rect x="1" y="1" width="12" height="13" rx="1" fill="#7d45a8"/><rect x="3" y="2" width="8" height="4.5" fill="#eee"/><rect x="4" y="9" width="6" height="5" fill="#fff"/><path d="M7 14l6-7l2 2l-6 6z" fill="#333"/><path d="M5 5h5" stroke="#c33"/></svg>
<svg class="a" style="left:337.5px;top:60.5px" width="16" height="16" viewBox="0 0 16 16"><path d="M3.5 11c0-5 8-6 9.5-1.5" stroke="#1f64b8" stroke-width="2.6" fill="none"/><path d="M0.5 8.5l3 4.5l4-3.5z" fill="#1f64b8"/></svg>
<svg class="a" style="left:358px;top:60.5px" width="16" height="16" viewBox="0 0 16 16"><path d="M12.5 11c0-5-8-6-9.5-1.5" stroke="#1f64b8" stroke-width="2.6" fill="none"/><path d="M15.5 8.5l-3 4.5l-4-3.5z" fill="#1f64b8"/></svg>
<svg class="a" style="left:374px;top:60.5px" width="16" height="16" viewBox="0 0 16 16"><path d="M5 4h6" stroke="#222" stroke-width="1.3"/><path d="M5 7h6l-3 3z" fill="#222"/></svg>
<svg class="a" style="left:219px;top:129px" width="30" height="30" viewBox="0 0 30 30"><path d="M4 25L26 3" stroke="#2b3a55" stroke-width="2"/><rect x="2.4" y="23.4" width="3.2" height="3.2" fill="#fff" stroke="#2a6ebb" stroke-width="1.1"/><rect x="24.4" y="1.4" width="3.2" height="3.2" fill="#fff" stroke="#2a6ebb" stroke-width="1.1"/></svg>
<svg class="a" style="left:261px;top:131px" width="30" height="30" viewBox="0 0 30 30"><path d="M10 4.5a7.5 7.5 0 0 0 0 15h17" stroke="#2b3a55" stroke-width="2.2" fill="none"/><rect x="9.4" y="2.9" width="3.2" height="3.2" fill="#fff" stroke="#2a6ebb" stroke-width="1.1"/><rect x="5.4" y="17.9" width="3.2" height="3.2" fill="#fff" stroke="#2a6ebb" stroke-width="1.1"/><rect x="24.4" y="17.9" width="3.2" height="3.2" fill="#fff" stroke="#2a6ebb" stroke-width="1.1"/></svg>
<svg class="a" style="left:321px;top:128.5px" width="30" height="30" viewBox="0 0 30 30"><defs><linearGradient id="cg" x1="0" y1="0" x2="1" y2="1"><stop offset="0" stop-color="#fff"/><stop offset="1" stop-color="#d5dbe6"/></linearGradient></defs><circle cx="15" cy="15" r="13" fill="url(#cg)" stroke="#1e2d4a" stroke-width="2.4"/><path d="M15 15l9-9M13.5 13.5v3M12 15h3" stroke="#2a6ebb" stroke-width="1.1"/><rect x="22.9" y="3.9" width="3.2" height="3.2" fill="#fff" stroke="#2a6ebb" stroke-width="1.1"/></svg>
<svg class="a" style="left:380.5px;top:128px" width="30" height="30" viewBox="0 0 30 30"><path d="M5 28Q7 9 28 2.5" stroke="#2b3a55" stroke-width="2.2" fill="none"/><rect x="3.4" y="25.4" width="3.2" height="3.2" fill="#fff" stroke="#2a6ebb" stroke-width="1.1"/><rect x="9.4" y="8.4" width="3.2" height="3.2" fill="#fff" stroke="#2a6ebb" stroke-width="1.1"/><rect x="26.4" y="1.4" width="3.2" height="3.2" fill="#fff" stroke="#2a6ebb" stroke-width="1.1"/></svg>
<svg class="a" style="left:426.5px;top:128.5px" width="16" height="16" viewBox="0 0 16 16"><path d="M8 1.5l6.5 5l-2.5 7.5h-8L1.5 6.5z" fill="#eef2f8" stroke="#2b3a55" stroke-width="1.2"/><circle cx="8" cy="8" r="1" fill="#2a6ebb"/><rect x="2.75" y="12.75" width="2.5" height="2.5" fill="#fff" stroke="#2a6ebb" stroke-width="1"/></svg>
<svg class="a" style="left:426.5px;top:147.5px" width="16" height="16" viewBox="0 0 16 16"><path d="M2 9q6-9 12 0" stroke="#2b3a55" stroke-width="1.6" fill="none"/><rect x="0.75" y="7.75" width="2.5" height="2.5" fill="#fff" stroke="#2a6ebb" stroke-width="1"/><rect x="12.75" y="7.75" width="2.5" height="2.5" fill="#fff" stroke="#2a6ebb" stroke-width="1"/><path d="M8 13q3 0 5-3" stroke="#2b3a55" stroke-width="1.2" fill="none"/></svg>
<svg class="a" style="left:426px;top:168px" width="16" height="16" viewBox="0 0 16 16"><rect x="2" y="4" width="12" height="8" fill="#eef2f8" stroke="#2b3a55" stroke-width="1.3"/><rect x="0.75" y="10.75" width="2.5" height="2.5" fill="#fff" stroke="#2a6ebb" stroke-width="1"/><rect x="12.75" y="2.75" width="2.5" height="2.5" fill="#fff" stroke="#2a6ebb" stroke-width="1"/></svg>
<svg class="a" style="left:469px;top:127px" width="16" height="16" viewBox="0 0 16 16"><rect x="1" y="1" width="6" height="5" fill="#f4f4f4" stroke="#888"/><rect x="8" y="9" width="6" height="5" fill="#fff" stroke="#2b3a55"/><path d="M8 3h3v4M9.5 5.5l1.5 2l1.5-2" stroke="#d9261c" fill="none"/></svg>
<svg class="a" style="left:469px;top:147.5px" width="16" height="16" viewBox="0 0 16 16"><rect x="1" y="1" width="6" height="5" fill="#fff" stroke="#2b3a55"/><rect x="5" y="7" width="5" height="4" fill="#fff" stroke="#2b3a55"/><rect x="9" y="10" width="6" height="5" fill="#fff" stroke="#2b3a55"/><path d="M8 3h3v3" stroke="#d9261c" fill="none"/></svg>
<svg class="a" style="left:469px;top:168px" width="16" height="16" viewBox="0 0 16 16"><path d="M1.5 2.5h7l5 11h-12z" fill="#fff" stroke="#2b3a55"/><path d="M8.5 2.5v11" stroke="#999"/></svg>
<svg class="a" style="left:527.5px;top:127px" width="16" height="16" viewBox="0 0 16 16"><path d="M3 5a6 6 0 1 0 10 0" stroke="#1f4f9a" stroke-width="2" fill="none"/><path d="M11 3l3-1l0 4z" fill="#1f4f9a"/><path d="M8 6v5M5.5 8.5h5" stroke="#d9261c" stroke-width="1.2"/></svg>
<svg class="a" style="left:527.5px;top:147.5px" width="16" height="16" viewBox="0 0 16 16"><path d="M6.5 4l-5 10h5z" fill="#fff" stroke="#2b3a55"/><path d="M9.5 4l5 10h-5z" fill="#fff" stroke="#2b3a55"/><path d="M8 1v15" stroke="#d9261c" stroke-width="1.2"/></svg>
<svg class="a" style="left:527.5px;top:168px" width="16" height="16" viewBox="0 0 16 16"><rect x="2.5" y="1.5" width="12" height="12" fill="none" stroke="#999" stroke-dasharray="2 1"/><rect x="1.5" y="8.5" width="6" height="6" fill="#fff" stroke="#2b3a55"/></svg>
<svg class="a" style="left:584px;top:127px" width="16" height="16" viewBox="0 0 16 16"><rect x="1.5" y="4.5" width="7" height="7" fill="none" stroke="#2e8b3e" stroke-width="1.4"/><rect x="8.5" y="4.5" width="5" height="7" fill="none" stroke="#aaa" stroke-width="1.4"/><path d="M8.5 1v15" stroke="#333" stroke-width="1.1"/></svg>
<svg class="a" style="left:584px;top:147.5px" width="16" height="16" viewBox="0 0 16 16"><path d="M1.5 14.5V7a6 6 0 0 1 6-5.5H15V14.5z" fill="#eef3fa" stroke="#2b3a55"/><path d="M1.5 1.5h6" stroke="#999" stroke-dasharray="1 1"/></svg>
<svg class="a" style="left:584px;top:168px" width="16" height="16" viewBox="0 0 16 16"><rect x="1.5" y="1.5" width="3" height="3" fill="#2a6ebb"/><rect x="1.5" y="11.5" width="3" height="3" fill="#2a6ebb"/><rect x="11.5" y="1.5" width="3" height="3" fill="#2a6ebb"/><rect x="11.5" y="11.5" width="3" height="3" fill="#2a6ebb"/><path d="M4.5 3h7M4.5 13h7M3 4.5v7M13 4.5v7" stroke="#2a6ebb" stroke-dasharray="1.5 1.5"/></svg>
<svg class="a" style="left:649px;top:127px" width="16" height="16" viewBox="0 0 16 16"><path d="M2.5 2.5l11 11M13.5 2.5l-11 11" stroke="#d9261c" stroke-width="3"/></svg>
<svg class="a" style="left:649px;top:147.5px" width="16" height="16" viewBox="0 0 16 16"><path d="M6 5l9 9l-2 2l-9-9z" fill="#d9261c"/><path d="M1 2l4-1l2 3l-3 3z" fill="#f5c518"/><path d="M3 3l3 3" stroke="#222"/></svg>
<svg class="a" style="left:649px;top:168px" width="16" height="16" viewBox="0 0 16 16"><path d="M2 14.5v-5h5v-4h5" stroke="#2b3a55" fill="none" stroke-width="1.5"/><path d="M4 14.5v-3h5v-4h3.5" stroke="#2b3a55" fill="none" stroke-width="1"/><path d="M11 7a3 3 0 0 1 4 1v6" stroke="#666" fill="none" stroke-width="1.5"/></svg>
<svg class="a" style="left:688px;top:127px" width="32" height="32" viewBox="0 0 32 32"><path d="M9 4h20l-7 6H2z" fill="#fff" stroke="#555" stroke-width="1.2"/><path d="M9 10h20l-7 6H2z" fill="#fff" stroke="#555" stroke-width="1.2"/><path d="M9 16h20l-7 6H2z" fill="#fff" stroke="#555" stroke-width="1.2"/><circle cx="21" cy="21" r="5" fill="#fff" stroke="#333" stroke-width="2"/><path d="M24.5 24.5l4 4" stroke="#333" stroke-width="2.6"/></svg>
<svg class="a" style="left:734.0px;top:128px" width="16" height="16" viewBox="0 0 16 16"><path d="M4 10h11l-3 3H1z" fill="#fff" stroke="#444" stroke-width="0.9"/><path d="M4 6.5h11l-3 3H1z" fill="#fff" stroke="#444" stroke-width="0.9"/><path d="M4 3h11l-3 3H1z" fill="#fff" stroke="#444" stroke-width="0.9"/><rect x="7" y="8" width="8" height="6" fill="#fff" stroke="#444"/><path d="M7 9.5h8" stroke="#2a6ebb" stroke-width="2"/></svg>
<svg class="a" style="left:760.2px;top:128px" width="16" height="16" viewBox="0 0 16 16"><path d="M4 10h11l-3 3H1z" fill="#fff" stroke="#444" stroke-width="0.9"/><path d="M4 6.5h11l-3 3H1z" fill="#fff" stroke="#444" stroke-width="0.9"/><path d="M4 3h11l-3 3H1z" fill="#2a6ebb" stroke="#444" stroke-width="0.9"/><circle cx="8" cy="4.5" r="1.3" fill="#d9261c"/></svg>
<div class="a" style="left:754.7px;top:130px;width:1px;height:12px;background:#c4c6d2;box-shadow:1px 0 0 #fafafe"></div>
<svg class="a" style="left:786.4px;top:128px" width="16" height="16" viewBox="0 0 16 16"><path d="M4 10h11l-3 3H1z" fill="#fff" stroke="#444" stroke-width="0.9"/><path d="M4 6.5h11l-3 3H1z" fill="#2a6ebb" stroke="#444" stroke-width="0.9"/><path d="M4 3h11l-3 3H1z" fill="#fff" stroke="#444" stroke-width="0.9"/><path d="M11 13l3 2" stroke="#333"/></svg>
<div class="a" style="left:780.9px;top:130px;width:1px;height:12px;background:#c4c6d2;box-shadow:1px 0 0 #fafafe"></div>
<svg class="a" style="left:812.6px;top:128px" width="16" height="16" viewBox="0 0 16 16"><path d="M4 3h11l-3 3H1z" fill="#fff" stroke="#444" stroke-width="0.9"/><rect x="8" y="9" width="6" height="6" fill="#f0d58a" stroke="#777"/><path d="M9 9V7a2 2 0 0 1 4 0v2" stroke="#1f4f9a" fill="none" stroke-width="1.4"/></svg>
<div class="a" style="left:807.1px;top:130px;width:1px;height:12px;background:#c4c6d2;box-shadow:1px 0 0 #fafafe"></div>
<svg class="a" style="left:838.8px;top:128px" width="16" height="16" viewBox="0 0 16 16"><path d="M4 10h11l-3 3H1z" fill="#fff" stroke="#444" stroke-width="0.9"/><path d="M4 6.5h11l-3 3H1z" fill="#fff" stroke="#444" stroke-width="0.9"/><path d="M4 3h11l-3 3H1z" fill="#fff" stroke="#444" stroke-width="0.9"/><circle cx="11" cy="9" r="3.5" fill="#f7e27a" stroke="#888"/><rect x="10" y="12" width="2" height="3" fill="#777"/></svg>
<div class="a" style="left:833.3px;top:130px;width:1px;height:12px;background:#c4c6d2;box-shadow:1px 0 0 #fafafe"></div>
<svg class="a" style="left:865.0px;top:128px" width="16" height="16" viewBox="0 0 16 16"><path d="M4 3h11l-3 3H1z" fill="#fff" stroke="#444" stroke-width="0.9"/><path d="M11 8v7M7.5 11.5h7M8.5 9l5 5M13.5 9l-5 5" stroke="#3a8ee6" stroke-width="1.1"/></svg>
<div class="a" style="left:859.5px;top:130px;width:1px;height:12px;background:#c4c6d2;box-shadow:1px 0 0 #fafafe"></div>
<svg class="a" style="left:891.2px;top:128px" width="16" height="16" viewBox="0 0 16 16"><path d="M4 10h11l-3 3H1z" fill="#fff" stroke="#444" stroke-width="0.9"/><path d="M4 6.5h11l-3 3H1z" fill="#fff" stroke="#444" stroke-width="0.9"/><path d="M4 3h11l-3 3H1z" fill="#fff" stroke="#444" stroke-width="0.9"/><path d="M9 14l5-5l1.5 1.5l-5 5z" fill="#d7b27a"/></svg>
<div class="a" style="left:885.7px;top:130px;width:1px;height:12px;background:#c4c6d2;box-shadow:1px 0 0 #fafafe"></div>
<svg class="a" style="left:734.0px;top:148.5px" width="16" height="16" viewBox="0 0 16 16"><path d="M4 3h11l-3 3H1z" fill="#fff" stroke="#444" stroke-width="0.9"/><path d="M2 10l4 4l9-7" stroke="#1f4f9a" stroke-width="2.4" fill="none"/></svg>
<svg class="a" style="left:760.2px;top:148.5px" width="16" height="16" viewBox="0 0 16 16"><rect x="3" y="1" width="8" height="7" fill="#e8f0fa" stroke="#2a6ebb"/><path d="M4 9h11l-3 4H1z" fill="#fff" stroke="#444" stroke-width="0.9"/><path d="M8 5v6M6 9l2 2.5l2-2.5" stroke="#1f64b8" stroke-width="1.5" fill="none"/></svg>
<div class="a" style="left:754.7px;top:150.5px;width:1px;height:12px;background:#c4c6d2;box-shadow:1px 0 0 #fafafe"></div>
<svg class="a" style="left:786.4px;top:148.5px" width="16" height="16" viewBox="0 0 16 16"><path d="M4 10h11l-3 3H1z" fill="#fff" stroke="#444" stroke-width="0.9"/><path d="M4 6.5h11l-3 3H1z" fill="#2a6ebb" stroke="#444" stroke-width="0.9"/><path d="M4 3h11l-3 3H1z" fill="#fff" stroke="#444" stroke-width="0.9"/><path d="M10 14l4-4M12 10h2v2" stroke="#333" fill="none"/></svg>
<div class="a" style="left:780.9px;top:150.5px;width:1px;height:12px;background:#c4c6d2;box-shadow:1px 0 0 #fafafe"></div>
<svg class="a" style="left:812.6px;top:148.5px" width="16" height="16" viewBox="0 0 16 16"><path d="M4 3h11l-3 3H1z" fill="#fff" stroke="#444" stroke-width="0.9"/><rect x="7" y="9" width="6" height="6" fill="#888"/><path d="M12 9V7a2 2 0 0 1 4 0" stroke="#1f4f9a" fill="none" stroke-width="1.4"/></svg>
<div class="a" style="left:807.1px;top:150.5px;width:1px;height:12px;background:#c4c6d2;box-shadow:1px 0 0 #fafafe"></div>
<svg class="a" style="left:838.8px;top:148.5px" width="16" height="16" viewBox="0 0 16 16"><path d="M4 3h11l-3 3H1z" fill="#fff" stroke="#444" stroke-width="0.9"/><circle cx="11" cy="9.5" r="3.5" fill="#5a6a88" stroke="#444"/><rect x="10" y="12" width="2" height="3" fill="#444"/></svg>
<div class="a" style="left:833.3px;top:150.5px;width:1px;height:12px;background:#c4c6d2;box-shadow:1px 0 0 #fafafe"></div>
<svg class="a" style="left:865.0px;top:148.5px" width="16" height="16" viewBox="0 0 16 16"><path d="M4 10h11l-3 3H1z" fill="#fff" stroke="#444" stroke-width="0.9"/><path d="M4 6.5h11l-3 3H1z" fill="#fff" stroke="#444" stroke-width="0.9"/><path d="M4 3h11l-3 3H1z" fill="#fff" stroke="#444" stroke-width="0.9"/><circle cx="11.5" cy="12" r="2.5" fill="#f5b335"/><path d="M11.5 8v8M7.5 12h8" stroke="#f5b335"/></svg>
<div class="a" style="left:859.5px;top:150.5px;width:1px;height:12px;background:#c4c6d2;box-shadow:1px 0 0 #fafafe"></div>
<svg class="a" style="left:891.2px;top:148.5px" width="16" height="16" viewBox="0 0 16 16"><path d="M4 3h11l-3 3H1z" fill="#fff" stroke="#444" stroke-width="0.9"/><path d="M4 6l9 9M13 6l-9 9" stroke="#d9261c" stroke-width="2.6"/></svg>
<div class="a" style="left:885.7px;top:150.5px;width:1px;height:12px;background:#c4c6d2;box-shadow:1px 0 0 #fafafe"></div>
<svg class="a" style="left:732.5px;top:169px" width="16" height="16" viewBox="0 0 16 16"><circle cx="8" cy="6.5" r="5" fill="#f8ea8a" stroke="#a08a30"/><rect x="6" y="11" width="4" height="4" fill="#777"/></svg>
<svg class="a" style="left:748px;top:169px" width="16" height="16" viewBox="0 0 16 16"><circle cx="8" cy="8" r="4" fill="#f5e23a" stroke="#333"/><path d="M8 0.5v3M8 12.5v3M0.5 8h3M12.5 8h3M2.5 2.5l2 2M11.5 11.5l2 2M13.5 2.5l-2 2M2.5 13.5l2-2" stroke="#222" stroke-width="1.2"/></svg>
<svg class="a" style="left:764px;top:169px" width="16" height="16" viewBox="0 0 16 16"><rect x="3" y="4" width="11" height="10" fill="#fafafa" stroke="#ddd"/><path d="M8 2v11M3 7.5h10M4.5 4l7 7M11.5 4l-7 7" stroke="#bbb"/></svg>
<svg class="a" style="left:780px;top:169px" width="16" height="16" viewBox="0 0 16 16"><rect x="2" y="8" width="7" height="7" fill="#f0d08a" stroke="#999"/><path d="M8 8V5a2.5 2.5 0 0 1 5 0v3" stroke="#1f4f9a" fill="none" stroke-width="1.5"/></svg>
<svg class="a" style="left:795px;top:169px" width="16" height="16" viewBox="0 0 16 16"><rect x="2.5" y="2.5" width="11" height="11" fill="#fff" stroke="#111" stroke-width="1.3"/></svg>
<svg class="a" style="left:944px;top:128px" width="28" height="30" viewBox="0 0 28 30"><text x="13" y="25" font-size="32" font-family="Liberation Sans" fill="#1f5fb8" text-anchor="middle">A</text><path d="M1 27h24" stroke="#333" stroke-width="1.5"/></svg>
<svg class="a" style="left:979.5px;top:127.5px" width="16" height="16" viewBox="0 0 16 16"><path d="M2 2v9M14 2v9M2 4h12" stroke="#d9261c" stroke-width="1.2"/><rect x="1.5" y="11.5" width="13" height="3" fill="#fff" stroke="#2b3a55"/></svg>
<svg class="a" style="left:979.5px;top:148px" width="16" height="16" viewBox="0 0 16 16"><circle cx="8" cy="8" r="6.5" fill="#fff" stroke="#2b3a55" stroke-width="1.3"/><path d="M8 2.5v11M2.5 8h11" stroke="#d9261c" stroke-dasharray="2 1"/></svg>
<svg class="a" style="left:979.5px;top:168.5px" width="16" height="16" viewBox="0 0 16 16"><path d="M2 15V10a8 8 0 0 1 8-8h4" stroke="#555" stroke-width="1.8" fill="none"/><path d="M5 15V11a5 5 0 0 1 5-5h4" stroke="#d9261c" stroke-width="1.3" fill="none"/><path d="M3 15h5" stroke="#d9261c"/></svg>
<svg class="a" style="left:1083px;top:130px" width="32" height="30" viewBox="0 0 32 30"><rect x="3" y="3" width="23" height="15" fill="#f4f6fa" stroke="#2b3a55" stroke-width="1.4"/><circle cx="21" cy="19" r="7.5" fill="#dde3ec" stroke="#555" stroke-width="1.4"/><rect x="1.25" y="16.25" width="3.5" height="3.5" fill="#fff" stroke="#2a6ebb" stroke-width="1.1"/></svg>
<svg class="a" style="left:1121.5px;top:127.5px" width="16" height="16" viewBox="0 0 16 16"><rect x="3" y="6" width="9" height="7" fill="#fff" stroke="#2b3a55"/><circle cx="11" cy="12" r="3.5" fill="#fff" stroke="#555"/><circle cx="4" cy="4" r="2.5" fill="#f5b335"/><rect x="1.5" y="11.5" width="2" height="2" fill="#fff" stroke="#2a6ebb"/></svg>
<svg class="a" style="left:1121.5px;top:148px" width="16" height="16" viewBox="0 0 16 16"><rect x="2.5" y="2.5" width="9" height="7" fill="#fff" stroke="#2b3a55"/><circle cx="11" cy="11" r="3" fill="#fff" stroke="#333" stroke-width="1.3"/><path d="M13 13l2.5 2.5" stroke="#333" stroke-width="1.6"/><rect x="1.5" y="8.5" width="2" height="2" fill="#fff" stroke="#2a6ebb"/></svg>
<svg class="a" style="left:1121.5px;top:168.5px" width="16" height="16" viewBox="0 0 16 16"><path d="M1.5 9l6-7l6 7v5h-12z" fill="#fff" stroke="#2a6ebb" stroke-width="1.6"/><circle cx="8" cy="9" r="2" fill="#d9261c"/><path d="M9 10l5 5" stroke="#f2a93b" stroke-width="3"/></svg>
<svg class="a" style="left:1253.5px;top:128.0px" width="15" height="15" viewBox="0 0 16 16"><circle cx="8" cy="8" r="7" fill="#f5d63a" stroke="#777"/><path d="M8 8V1a7 7 0 0 0-7 7z" fill="#e8e07a"/><path d="M8 8H1a7 7 0 0 0 2 5z" fill="#3a9ae0"/><path d="M8 8L3 13a7 7 0 0 0 7 2z" fill="#8a4ec0"/><path d="M8 8l2 7a7 7 0 0 0 5-5z" fill="#e03a3a"/><path d="M8 8l7 2a7 7 0 0 0-2-7z" fill="#f2a52a"/><path d="M8 8V1a7 7 0 0 0-6 4z" fill="#5cb84a"/></svg>
<svg class="a" style="left:1253.5px;top:149.0px" width="15" height="15" viewBox="0 0 16 16"><path d="M1 2h14" stroke="#3a4a6a" stroke-dasharray="1.5 1.5" stroke-width="1.2"/><path d="M1 5h14" stroke="#3a4a6a" stroke-dasharray="3 1" stroke-width="1.2"/><path d="M1 8h14" stroke="#8899bb" stroke-width="1.5"/><path d="M1 11h14" stroke="#3a4a6a" stroke-dasharray="2 1 5 1" stroke-width="1.2"/><path d="M1 14h14" stroke="#3a4a6a" stroke-dasharray="4 1" stroke-width="1.2"/></svg>
<svg class="a" style="left:1253.5px;top:169.5px" width="15" height="15" viewBox="0 0 16 16"><path d="M1 1.5h14" stroke="#3a4a6a" stroke-width="1"/><path d="M1 4.5h14" stroke="#2a3a5a" stroke-width="2"/><path d="M1 8.5h14" stroke="#1e2d4a" stroke-width="3"/><path d="M1 13h14" stroke="#1e2d4a" stroke-width="4"/></svg>
<svg class="a" style="left:1490px;top:128px" width="30" height="30" viewBox="0 0 30 30"><rect x="5" y="4" width="17" height="17" fill="#fff" stroke="#1e2d4a" stroke-width="2"/><rect x="9.5" y="9.5" width="17" height="17" fill="#e6ebf3" stroke="#1e2d4a" stroke-width="2"/><rect x="1.2" y="0.7" width="3.6" height="3.6" fill="#fff" stroke="#2a6ebb" stroke-width="1.1"/><rect x="25.2" y="0.7" width="3.6" height="3.6" fill="#fff" stroke="#2a6ebb" stroke-width="1.1"/><rect x="1.2" y="25.2" width="3.6" height="3.6" fill="#fff" stroke="#2a6ebb" stroke-width="1.1"/><rect x="25.2" y="25.2" width="3.6" height="3.6" fill="#fff" stroke="#2a6ebb" stroke-width="1.1"/></svg>
<svg class="a" style="left:1535px;top:128px" width="30" height="30" viewBox="0 0 30 30"><path d="M3 4v12M10 4v12M18 4v12M25 4v12" stroke="#333" stroke-width="1.2"/><path d="M3 8h22" stroke="#333" stroke-dasharray="2 1.5"/><path d="M3 17h22" stroke="#1e2d4a" stroke-width="1.8"/><rect x="2" y="21" width="24" height="7" fill="#f2b33e"/><path d="M4 21v3M7 21v2M10 21v3M13 21v2M16 21v3M19 21v2M22 21v3" stroke="#a87a2a" stroke-width="0.6"/></svg>
<svg class="a" style="left:1576px;top:128px" width="16" height="16" viewBox="0 0 16 16"><path d="M1 2h11l-4 6v6l-3-2V8z" fill="#2a6ebb" stroke="#444" stroke-width="0.8"/><path d="M11 7l-2 4h3l-2 5l5-7h-3l2-2z" fill="#f5b335"/></svg>
<svg class="a" style="left:1576px;top:148.5px" width="16" height="16" viewBox="0 0 16 16"><rect x="1.5" y="1.5" width="5.5" height="5.5" fill="#fff" stroke="#2a6ebb" stroke-width="1.8"/><rect x="1.5" y="9" width="5.5" height="5.5" fill="#fff" stroke="#2a6ebb" stroke-width="1.8"/><rect x="9" y="1.5" width="5.5" height="5.5" fill="#fff" stroke="#2a6ebb" stroke-width="1.8"/><rect x="9" y="9" width="5.5" height="5.5" fill="#fff" stroke="#2a6ebb" stroke-width="1.8"/></svg>
<svg class="a" style="left:1576px;top:169px" width="16" height="16" viewBox="0 0 16 16"><path d="M2.5 1.5h6l3 3v10h-9z" fill="#fff" stroke="#777"/><path d="M6 11l2.5 3l6-6" stroke="#2e9a4a" stroke-width="2" fill="none"/></svg>
<svg class="a" style="left:1613px;top:127px" width="30" height="32" viewBox="0 0 30 32"><rect x="1" y="5" width="20" height="23" fill="#f5b343"/><rect x="6" y="2" width="10" height="5" rx="1" fill="#555"/><path d="M12 13h9l5 5v12H12z" fill="#fff" stroke="#555" stroke-width="1.2"/><path d="M14 18h6M14 21h9M14 24h9M14 27h9" stroke="#2a6ebb" stroke-width="1.1"/></svg>
<svg class="a" style="left:1649.5px;top:127.5px" width="16" height="16" viewBox="0 0 16 16"><path d="M4 1.5l6.5 9M12 1.5l-6.5 9" stroke="#555" stroke-width="1.6"/><circle cx="4.5" cy="12.5" r="2.5" fill="none" stroke="#1f64b8" stroke-width="2"/><circle cx="11.5" cy="12.5" r="2.5" fill="none" stroke="#1f64b8" stroke-width="2"/></svg>
<svg class="a" style="left:1649.5px;top:148.5px" width="16" height="16" viewBox="0 0 16 16"><path d="M1.5 1.5h6l2 2v8h-8z" fill="#ddd" stroke="#666"/><path d="M6.5 5.5h5l3 3v7h-8z" fill="#fff" stroke="#666"/><path d="M8 10h5M8 12h5M8 14h4" stroke="#2a6ebb"/></svg>
<svg class="a" style="left:1649.5px;top:169px" width="16" height="16" viewBox="0 0 16 16"><path d="M9 3l5 5l-2 2l-5-5z" fill="#555"/><path d="M7 5l5 5l-5 5l-6-5z" fill="#d7b27a"/><path d="M2 10l5 5" stroke="#a88550"/></svg>
<svg class="a" style="left:218.8px;top:213.5px" width="16" height="16" viewBox="0 0 16 16"><path d="M4.5 2.5h6l3 3v9h-9z" fill="#fff" stroke="#444"/><path d="M10.5 2.5v3h3" fill="none" stroke="#444"/><circle cx="4" cy="4" r="2.6" fill="#f5b335"/><path d="M4 0v8M0 4h8" stroke="#f5b335" stroke-width="0.8"/></svg>
<svg class="a" style="left:240.2px;top:213.5px" width="16" height="16" viewBox="0 0 16 16"><path d="M1 4h5l1 1h6v9H1z" fill="#555"/><path d="M2.5 8h12l-1.5 6.5H1z" fill="#f2b13e"/><circle cx="11.5" cy="4.5" r="3.5" fill="#2f9c63"/><path d="M10 3l3 3M13 4v2h-2" stroke="#fff" fill="none"/></svg>
<svg class="a" style="left:261.9px;top:213.5px" width="16" height="16" viewBox="0 0 16 16"><rect x="1.5" y="1.5" width="13" height="13" rx="1" fill="#7d45a8"/><rect x="4" y="2.5" width="8" height="5" fill="#e8e0f0"/><rect x="5" y="10" width="6" height="4.5" fill="#fff"/><rect x="7" y="11" width="2" height="3" fill="#7d45a8"/></svg>
<svg class="a" style="left:283.5px;top:213.5px" width="16" height="16" viewBox="0 0 16 16"><rect x="1.5" y="1.5" width="13" height="13" fill="#eee" stroke="#555"/><path d="M1.5 5h13M8 1.5v3.5" stroke="#555"/><rect x="9" y="5" width="5" height="4" fill="#aaa"/><path d="M2 4h4M4 2l2 2l-2 2" stroke="#2a9a3a" fill="none" stroke-width="1.3"/><text x="2" y="14" font-size="5" font-family="Liberation Sans" font-weight="bold" fill="#333">ACIS</text></svg>
<svg class="a" style="left:304.1px;top:213.5px" width="16" height="16" viewBox="0 0 16 16"><rect x="1.5" y="1.5" width="13" height="13" fill="#eee" stroke="#555"/><path d="M1.5 5h13" stroke="#555"/><path d="M9 4h5M12 2l2 2l-2 2" stroke="#8a3fc0" fill="none" stroke-width="1.3"/><text x="2" y="14" font-size="5" font-family="Liberation Sans" font-weight="bold" fill="#333">ACIS</text></svg>
<div class="a" style="left:328.5px;top:212.5px;width:1px;height:18px;background:#c4c6d2;box-shadow:1px 0 0 #fafafe"></div>
<svg class="a" style="left:334.6px;top:213.5px" width="16" height="16" viewBox="0 0 16 16"><rect x="4" y="1.5" width="8" height="4" fill="#fff" stroke="#555"/><rect x="1" y="5" width="14" height="6" rx="1" fill="#dfe3ea" stroke="#555"/><rect x="4" y="2.5" width="8" height="2" fill="#1f64b8"/><path d="M6 12h8M11 9.5l3 2.5l-3 2.5" stroke="#8a3fc0" fill="none" stroke-width="1.6"/></svg>
<svg class="a" style="left:356.3px;top:213.5px" width="16" height="16" viewBox="0 0 16 16"><rect x="4" y="1.5" width="8" height="4" fill="#1f64b8"/><rect x="1" y="5" width="14" height="6.5" rx="1" fill="#e6e9ef" stroke="#555"/><rect x="4" y="10" width="8" height="4.5" fill="#fff" stroke="#555"/><path d="M6 12.5h4" stroke="#1f64b8"/></svg>
<svg class="a" style="left:378.1px;top:213.5px" width="16" height="16" viewBox="0 0 16 16"><path d="M2.5 1.5h7l3 3v10h-10z" fill="#fff" stroke="#555"/><circle cx="8" cy="9" r="3" fill="#cfe0f5" stroke="#1f4f9a" stroke-width="1.3"/><path d="M10 11l3.5 3.5" stroke="#1f4f9a" stroke-width="1.8"/></svg>
<svg class="a" style="left:399.9px;top:213.5px" width="16" height="16" viewBox="0 0 16 16"><path d="M2.5 1.5h6l2 2v9h-8z" fill="#fff" stroke="#777"/><path d="M3 2v10" stroke="#4a90d0"/><rect x="7" y="9" width="8" height="4" rx="1" fill="#dfe3ea" stroke="#555"/><rect x="8.5" y="7" width="5" height="2" fill="#1f64b8"/><rect x="8.5" y="12" width="5" height="3" fill="#fff" stroke="#555"/></svg>
<svg class="a" style="left:420.4px;top:213.5px" width="16" height="16" viewBox="0 0 16 16"><text x="0.5" y="6.5" font-size="6.5" font-family="Liberation Sans" font-weight="bold" fill="#333">ABC</text><path d="M2.5 10l3.5 4l8-8" stroke="#1f4f9a" stroke-width="2.2" fill="none"/></svg>
<svg class="a" style="left:442.5px;top:213.5px" width="16" height="16" viewBox="0 0 16 16"><path d="M2 6h4v8H1V9z M10 6h4l1 3v5h-5z" fill="#222"/><rect x="3" y="2" width="3" height="5" fill="#333"/><rect x="10" y="2" width="3" height="5" fill="#333"/><rect x="6" y="7" width="4" height="3" fill="#444"/></svg>
<div class="a" style="left:465.8px;top:212.5px;width:1px;height:18px;background:#c4c6d2;box-shadow:1px 0 0 #fafafe"></div>
<svg class="a" style="left:472.3px;top:213.5px" width="16" height="16" viewBox="0 0 16 16"><path d="M4 1.5l6.5 9M12 1.5l-6.5 9" stroke="#555" stroke-width="1.6"/><circle cx="4.5" cy="12.5" r="2.5" fill="none" stroke="#1f64b8" stroke-width="2"/><circle cx="11.5" cy="12.5" r="2.5" fill="none" stroke="#1f64b8" stroke-width="2"/></svg>
<svg class="a" style="left:494px;top:213.5px" width="16" height="16" viewBox="0 0 16 16"><path d="M1.5 1.5h6l2 2v8h-8z" fill="#ddd" stroke="#666"/><path d="M6.5 5.5h5l3 3v7h-8z" fill="#fff" stroke="#666"/><path d="M8 10h5M8 12h5M8 14h4" stroke="#2a6ebb"/></svg>
<svg class="a" style="left:515px;top:213.5px" width="16" height="16" viewBox="0 0 16 16"><rect x="1" y="2.5" width="10" height="12" fill="#f2b33e"/><rect x="4" y="1" width="4" height="3" fill="#777"/><path d="M7 7h5l2.5 2.5v6h-7.5z" fill="#fff" stroke="#666"/></svg>
<svg class="a" style="left:536.7px;top:213.5px" width="16" height="16" viewBox="0 0 16 16"><rect x="1" y="2.5" width="10" height="11" fill="#f2b33e"/><rect x="4" y="1" width="4" height="3" fill="#777"/><rect x="5" y="7" width="8" height="5" fill="#fff" stroke="#1f4f9a"/><circle cx="12" cy="12" r="3" fill="#fff" stroke="#1f4f9a"/></svg>
<svg class="a" style="left:558px;top:213.5px" width="16" height="16" viewBox="0 0 16 16"><path d="M9 3l5 5l-2 2l-5-5z" fill="#555"/><path d="M7 5l5 5l-5 5l-6-5z" fill="#d7b27a"/><path d="M2 10l5 5" stroke="#a88550"/></svg>
<div class="a" style="left:582.6px;top:212.5px;width:1px;height:18px;background:#c4c6d2;box-shadow:1px 0 0 #fafafe"></div>
<svg class="a" style="left:588.5px;top:213.5px" width="16" height="16" viewBox="0 0 16 16"><path d="M3.5 11c0-5 8-6 9.5-1.5" stroke="#1f64b8" stroke-width="2.6" fill="none"/><path d="M0.5 8.5l3 4.5l4-3.5z" fill="#1f64b8"/></svg>
<svg class="a" style="left:610.6px;top:213.5px" width="16" height="16" viewBox="0 0 16 16"><path d="M12.5 11c0-5-8-6-9.5-1.5" stroke="#1f64b8" stroke-width="2.6" fill="none"/><path d="M15.5 8.5l-3 4.5l-4-3.5z" fill="#1f64b8"/></svg>
<div class="a" style="left:633.6px;top:212.5px;width:1px;height:18px;background:#c4c6d2;box-shadow:1px 0 0 #fafafe"></div>
<svg class="a" style="left:640.2px;top:213.5px" width="16" height="16" viewBox="0 0 16 16"><path d="M2.5 2.5l11 11M13.5 2.5l-11 11" stroke="#d9261c" stroke-width="3"/></svg>
<svg class="a" style="left:661.6px;top:213.5px" width="16" height="16" viewBox="0 0 16 16"><path d="M2 2l12 12M14 2l-12 12" stroke="#d23ee0" stroke-width="1.6"/><rect x="4" y="4" width="8" height="8" rx="2" fill="#8a5bb8" transform="rotate(20 8 8)"/><path d="M5 6h6M5 8h6M5 10h6" stroke="#c5a8e6" stroke-width="0.7"/></svg>
<div class="a" style="left:685.5px;top:212.5px;width:1px;height:18px;background:#c4c6d2;box-shadow:1px 0 0 #fafafe"></div>
<svg class="a" style="left:691.7px;top:213.5px" width="16" height="16" viewBox="0 0 16 16"><circle cx="8" cy="8" r="7" fill="#2a6ebb"/><text x="8" y="12.5" font-size="11.5" font-family="Liberation Sans" font-weight="bold" fill="#fff" text-anchor="middle">?</text></svg>
<svg class="a" style="left:733.6px;top:213.5px" width="16" height="16" viewBox="0 0 16 16"><path d="M4 10h11l-3 3H1z" fill="#fff" stroke="#444" stroke-width="0.9"/><path d="M4 6.5h11l-3 3H1z" fill="#fff" stroke="#444" stroke-width="0.9"/><path d="M4 3h11l-3 3H1z" fill="#2a6ebb" stroke="#444" stroke-width="0.9"/><circle cx="8" cy="4.5" r="1.3" fill="#d9261c"/></svg>
<svg class="a" style="left:755.8px;top:213.5px" width="16" height="16" viewBox="0 0 16 16"><path d="M4 3h11l-3 3H1z" fill="#fff" stroke="#444" stroke-width="0.9"/><path d="M11 8v7M7.5 11.5h7M8.5 9l5 5M13.5 9l-5 5" stroke="#3a8ee6" stroke-width="1.1"/></svg>
<svg class="a" style="left:777.1px;top:213.5px" width="16" height="16" viewBox="0 0 16 16"><path d="M4 10h11l-3 3H1z" fill="#fff" stroke="#444" stroke-width="0.9"/><path d="M4 6.5h11l-3 3H1z" fill="#fff" stroke="#444" stroke-width="0.9"/><circle cx="10.5" cy="10.5" r="2.8" fill="#fff" stroke="#333" stroke-width="1.3"/><path d="M12.5 12.5l2.5 2.5" stroke="#333" stroke-width="1.6"/></svg>
<div class="a" style="left:800px;top:212.5px;width:1px;height:18px;background:#c4c6d2;box-shadow:1px 0 0 #fafafe"></div>
<svg class="a" style="left:1705.6px;top:213.5px" width="16" height="16" viewBox="0 0 16 16"><rect x="0.5" y="1" width="15" height="14" fill="#7d45a8"/><text x="8" y="14" font-size="15" font-family="Liberation Sans" font-weight="bold" fill="#fff" text-anchor="middle">A</text></svg>
<svg class="a" style="left:1727px;top:213.5px" width="16" height="16" viewBox="0 0 16 16"><rect x="0.5" y="1" width="15" height="14" fill="#7d45a8"/><text x="8" y="14" font-size="15" font-family="Liberation Sans" font-weight="bold" fill="#fff" text-anchor="middle">A</text><circle cx="13" cy="3.5" r="2" fill="none" stroke="#fff"/></svg>
<svg class="a" style="left:1748.6px;top:213.5px" width="16" height="16" viewBox="0 0 16 16"><rect x="0.5" y="1" width="15" height="14" fill="#7d45a8"/><text x="8" y="14" font-size="15" font-family="Liberation Sans" font-weight="bold" fill="#fff" text-anchor="middle">A</text><path d="M11 2h4M11 5h4" stroke="#fff"/></svg>
<svg class="a" style="left:1770px;top:213.5px" width="16" height="16" viewBox="0 0 16 16"><circle cx="8" cy="6.5" r="3.5" fill="#333"/><rect x="6.5" y="10" width="3" height="4" fill="#333"/><path d="M8 0.5v2M2 6.5h2M12 6.5h2M3.5 2l1.5 1.5M12.5 2l-1.5 1.5M3 10l1.5-1M13 10l-1.5-1" stroke="#333" stroke-width="1.2"/></svg>
<svg class="a" style="left:1791.5px;top:213.5px" width="16" height="16" viewBox="0 0 16 16"><path d="M2 5l4-4l5 5l-4 4z" fill="#333"/><path d="M7 10l4-4l4 6l-3 3z" fill="#444"/><circle cx="12" cy="12" r="2" fill="#fff"/></svg>
<svg class="a" style="left:806.4px;top:213px" width="16" height="16" viewBox="0 0 16 16"><circle cx="8" cy="6.5" r="5" fill="#f8ea8a" stroke="#a08a30"/><rect x="6" y="11" width="4" height="4" fill="#777"/></svg>
<svg class="a" style="left:822.3px;top:213px" width="16" height="16" viewBox="0 0 16 16"><circle cx="8" cy="8" r="4" fill="#f5e23a" stroke="#333"/><path d="M8 0.5v3M8 12.5v3M0.5 8h3M12.5 8h3M2.5 2.5l2 2M11.5 11.5l2 2M13.5 2.5l-2 2M2.5 13.5l2-2" stroke="#222" stroke-width="1.2"/></svg>
<svg class="a" style="left:839px;top:213px" width="16" height="16" viewBox="0 0 16 16"><rect x="3" y="4" width="11" height="10" fill="#fafafa" stroke="#ddd"/><path d="M8 2v11M3 7.5h10M4.5 4l7 7M11.5 4l-7 7" stroke="#bbb"/></svg>
<svg class="a" style="left:854px;top:213px" width="16" height="16" viewBox="0 0 16 16"><rect x="2" y="8" width="7" height="7" fill="#f0d08a" stroke="#999"/><path d="M8 8V5a2.5 2.5 0 0 1 5 0v3" stroke="#1f4f9a" fill="none" stroke-width="1.5"/></svg>
<svg class="a" style="left:870px;top:213px" width="16" height="16" viewBox="0 0 16 16"><rect x="2.5" y="2.5" width="11" height="11" fill="#fff" stroke="#111" stroke-width="1.3"/></svg>
<div class="a" style="left:302.6px;top:235.5px;width:20.899999999999977px;height:24.0px;background:#d8e8fa;border:1px solid #5aa0ee"></div>
<div class="a" style="left:345.6px;top:235.5px;width:20.899999999999977px;height:24.0px;background:#d8e8fa;border:1px solid #5aa0ee"></div>
<div class="a" style="left:475.3px;top:235.5px;width:20.899999999999977px;height:24.0px;background:#d8e8fa;border:1px solid #5aa0ee"></div>
<div class="a" style="left:526.3px;top:235.5px;width:20.90000000000009px;height:24.0px;background:#d8e8fa;border:1px solid #5aa0ee"></div>
<svg class="a" style="left:218.4px;top:239.5px" width="16" height="16" viewBox="0 0 16 16"><path d="M2 8h10" stroke="#555" stroke-width="1.3"/><rect x="1" y="7" width="3" height="2" fill="#555"/><rect x="11.5" y="6.5" width="3" height="3" fill="#fff" stroke="#d9261c" stroke-width="1"/></svg>
<svg class="a" style="left:240.2px;top:239.5px" width="16" height="16" viewBox="0 0 16 16"><path d="M4 14V4h8" stroke="#777" stroke-width="1.3" fill="none"/><rect x="3" y="12" width="2" height="3" fill="#777"/><rect x="11.5" y="2.5" width="3" height="3" fill="#fff" stroke="#d9261c" stroke-width="1"/></svg>
<svg class="a" style="left:261.9px;top:239.5px" width="16" height="16" viewBox="0 0 16 16"><path d="M3 2v12M13 4v12" stroke="#333" stroke-width="1.2"/><rect x="1.5" y="0.5" width="3" height="3" fill="#fff" stroke="#d9261c" stroke-width="1"/><rect x="11.5" y="12.5" width="3" height="3" fill="#fff" stroke="#d9261c" stroke-width="1"/><rect x="7" y="7" width="2" height="2" fill="#d9261c"/></svg>
<svg class="a" style="left:283.7px;top:239.5px" width="16" height="16" viewBox="0 0 16 16"><circle cx="8" cy="8" r="6" fill="none" stroke="#333" stroke-width="1.2"/><rect x="11.0" y="10.5" width="3" height="3" fill="#fff" stroke="#d9261c" stroke-width="1"/></svg>
<svg class="a" style="left:305px;top:239.5px" width="16" height="16" viewBox="0 0 16 16"><path d="M2 2l12 11" stroke="#333" stroke-width="1.3"/><rect x="10.5" y="10.0" width="3" height="3" fill="#fff" stroke="#d9261c" stroke-width="1"/></svg>
<svg class="a" style="left:325.9px;top:239.5px" width="16" height="16" viewBox="0 0 16 16"><path d="M1 4h14" stroke="#333" stroke-width="1.2"/><path d="M1 14q7-9 14 0" stroke="#333" stroke-width="1.3" fill="none"/><rect x="6.5" y="2.5" width="3" height="3" fill="#fff" stroke="#d9261c" stroke-width="1"/><rect x="6.5" y="7.0" width="3" height="3" fill="#fff" stroke="#d9261c" stroke-width="1"/></svg>
<svg class="a" style="left:348px;top:239.5px" width="16" height="16" viewBox="0 0 16 16"><circle cx="8" cy="8" r="6" fill="none" stroke="#333" stroke-width="1.2"/><rect x="7" y="7" width="2" height="2" fill="#d9261c"/></svg>
<svg class="a" style="left:369.4px;top:239.5px" width="16" height="16" viewBox="0 0 16 16"><path d="M1 13h14M8 1v12" stroke="#333" stroke-width="1.2"/><path d="M8 10h3v3" stroke="#999" fill="none"/><rect x="6.5" y="11.5" width="3" height="3" fill="#fff" stroke="#d9261c" stroke-width="1"/></svg>
<svg class="a" style="left:391.1px;top:239.5px" width="16" height="16" viewBox="0 0 16 16"><circle cx="8" cy="10.5" r="4" fill="none" stroke="#2b3a55" stroke-width="1.3"/><path d="M2 1l9 7" stroke="#2b3a55" stroke-width="1.2"/><rect x="10.0" y="6.5" width="3" height="3" fill="#fff" stroke="#d9261c" stroke-width="1"/></svg>
<svg class="a" style="left:412.9px;top:239.5px" width="16" height="16" viewBox="0 0 16 16"><circle cx="8" cy="8" r="6" fill="none" stroke="#2b3a55" stroke-width="1.2"/><rect x="6.5" y="0.5" width="3" height="3" fill="#fff" stroke="#d9261c" stroke-width="1"/><rect x="6.5" y="12.5" width="3" height="3" fill="#fff" stroke="#d9261c" stroke-width="1"/><rect x="0.5" y="6.5" width="3" height="3" fill="#fff" stroke="#d9261c" stroke-width="1"/><rect x="12.5" y="6.5" width="3" height="3" fill="#fff" stroke="#d9261c" stroke-width="1"/></svg>
<svg class="a" style="left:433.8px;top:239.5px" width="16" height="16" viewBox="0 0 16 16"><rect x="2.5" y="3.5" width="9" height="6" fill="#fff" stroke="#2b3a55"/><circle cx="11" cy="11" r="3.5" fill="none" stroke="#2b3a55"/><rect x="0.5" y="8.5" width="3" height="3" fill="#fff" stroke="#d9261c" stroke-width="1"/></svg>
<svg class="a" style="left:455.6px;top:239.5px" width="16" height="16" viewBox="0 0 16 16"><rect x="7" y="7" width="2" height="2" fill="#d9261c"/></svg>
<svg class="a" style="left:477.3px;top:239.5px" width="16" height="16" viewBox="0 0 16 16"><path d="M2 2l12 12" stroke="#333" stroke-width="1.2" stroke-dasharray="3 1"/><rect x="6.5" y="6.5" width="3" height="3" fill="#fff" stroke="#d9261c" stroke-width="1"/></svg>
<svg class="a" style="left:497.4px;top:239.5px" width="16" height="16" viewBox="0 0 16 16"><path d="M2 7l8 8M6 3l8 8" stroke="#333" stroke-width="1.2"/><rect x="4.5" y="7.5" width="3" height="3" fill="#fff" stroke="#d9261c" stroke-width="1"/></svg>
<div class="a" style="left:522.2px;top:238.5px;width:1px;height:18px;background:#c4c6d2;box-shadow:1px 0 0 #fafafe"></div>
<svg class="a" style="left:528.4px;top:239.5px" width="16" height="16" viewBox="0 0 16 16"><path d="M1 3l14 10M1 13l14-10" stroke="#2b3a55" stroke-width="1.2"/><path d="M8 1v14" stroke="#fff" stroke-width="0.8"/><rect x="6.5" y="6.5" width="3" height="3" fill="#fff" stroke="#d9261c" stroke-width="1"/></svg>
<svg class="a" style="left:550px;top:239.5px" width="16" height="16" viewBox="0 0 16 16"><path d="M1 3l10 5l-10 5" stroke="#2b3a55" stroke-width="1.2" fill="none"/><rect x="11.5" y="6.5" width="3" height="3" fill="#fff" stroke="#d9261c" stroke-width="1"/></svg>
<div class="a" style="left:573.4px;top:238.5px;width:1px;height:18px;background:#c4c6d2;box-shadow:1px 0 0 #fafafe"></div>
<svg class="a" style="left:580.5px;top:239.5px" width="16" height="16" viewBox="0 0 16 16"><circle cx="10" cy="2.5" r="1.8" fill="#333"/><path d="M9 5l-3 4l3 2l-1 4M8 6l4 2l2-1M6 9l-4 1" stroke="#333" stroke-width="1.8" fill="none"/></svg>
<svg class="a" style="left:601.4px;top:239.5px" width="16" height="16" viewBox="0 0 16 16"><path d="M3 3l10 10M13 3l-10 10" stroke="#d9261c" stroke-width="3"/><rect x="0.5" y="6.5" width="3" height="3" fill="#fff" stroke="#d9261c" stroke-width="1"/><rect x="12.5" y="6.5" width="3" height="3" fill="#fff" stroke="#d9261c" stroke-width="1"/></svg>
<svg class="a" style="left:643.7px;top:239.5px" width="16" height="16" viewBox="0 0 16 16"><text x="8" y="12" font-size="14" font-family="Liberation Sans" font-weight="bold" fill="#1f64b8" text-anchor="middle">A</text><path d="M1 14.5h14" stroke="#333" stroke-width="1.2"/></svg>
<svg class="a" style="left:665px;top:239.5px" width="16" height="16" viewBox="0 0 16 16"><text x="8" y="13" font-size="15" font-family="Liberation Sans" font-weight="bold" fill="#1f64b8" text-anchor="middle">A</text></svg>
<svg class="a" style="left:687.2px;top:239.5px" width="16" height="16" viewBox="0 0 16 16"><rect x="8" y="1" width="7" height="9" fill="#fff" stroke="#777"/><path d="M9 3h5M9 5h5M9 7h5" stroke="#999"/><text x="6" y="15" font-size="13" font-family="Liberation Sans" font-weight="bold" fill="#1f64b8" text-anchor="middle">A</text><path d="M14 9l-3 4" stroke="#1f64b8" stroke-width="1.3"/></svg>
<svg class="a" style="left:708.5px;top:239.5px" width="16" height="16" viewBox="0 0 16 16"><text x="7" y="13" font-size="14" font-family="Liberation Sans" font-weight="bold" fill="#1f64b8" text-anchor="middle">A</text><path d="M9 14l6-7" stroke="#f2a93b" stroke-width="2.6"/></svg>
<svg class="a" style="left:730.2px;top:239.5px" width="16" height="16" viewBox="0 0 16 16"><text x="7" y="12" font-size="14" font-family="Liberation Sans" font-weight="bold" fill="#1f64b8" text-anchor="middle">A</text><circle cx="11" cy="11" r="2.6" fill="#fff" stroke="#333" stroke-width="1.3"/><path d="M13 13l2.5 2.5" stroke="#333" stroke-width="1.6"/></svg>
<div class="a" style="left:754.1px;top:238.5px;width:1px;height:18px;background:#c4c6d2;box-shadow:1px 0 0 #fafafe"></div>
<svg class="a" style="left:874.2px;top:239.5px" width="16" height="16" viewBox="0 0 16 16"><path d="M2 2v9M14 2v9M2 4h12" stroke="#d9261c" stroke-width="1.2"/><rect x="1.5" y="11.5" width="13" height="3" fill="#fff" stroke="#2b3a55"/></svg>
<div class="a" style="left:898px;top:238.5px;width:1px;height:18px;background:#c4c6d2;box-shadow:1px 0 0 #fafafe"></div>
<svg class="a" style="left:903.5px;top:239.5px" width="16" height="16" viewBox="0 0 16 16"><path d="M3 13l9-9" stroke="#333" stroke-width="1.2"/><path d="M1 10l4 4M10 2l4 4" stroke="#d9261c" stroke-width="1.2"/><rect x="1" y="12" width="4" height="3" fill="#fff"/></svg>
<svg class="a" style="left:925.7px;top:239.5px" width="16" height="16" viewBox="0 0 16 16"><path d="M2 6l6 9l6-9" stroke="#2b3a55" stroke-width="1.4" fill="none"/><path d="M2 5q6-6 12 0" stroke="#d9261c" stroke-width="1.2" fill="none"/></svg>
<svg class="a" style="left:947.2px;top:239.5px" width="16" height="16" viewBox="0 0 16 16"><rect x="1.5" y="9.5" width="4" height="4" fill="#fff" stroke="#2b3a55"/><path d="M6 9l5-5h3" stroke="#d9261c" stroke-width="1.2" fill="none"/></svg>
<svg class="a" style="left:969.8px;top:239.5px" width="16" height="16" viewBox="0 0 16 16"><rect x="1.5" y="11.5" width="4" height="4" fill="#fff" stroke="#2b3a55"/><path d="M5 11l8-8M8 2l6 6" stroke="#d9261c" stroke-width="1.2"/></svg>
<svg class="a" style="left:990.7px;top:239.5px" width="16" height="16" viewBox="0 0 16 16"><path d="M1 15V11a9 9 0 0 1 9-9h5" stroke="#2b3a55" stroke-width="1.8" fill="none"/><path d="M13 2v3M10 15h-6" stroke="#d9261c"/></svg>
<div class="a" style="left:1014.6px;top:238.5px;width:1px;height:18px;background:#c4c6d2;box-shadow:1px 0 0 #fafafe"></div>
<svg class="a" style="left:1021.5999999999999px;top:239.5px" width="16" height="16" viewBox="0 0 16 16"><circle cx="8" cy="8" r="6.5" fill="#fff" stroke="#2b3a55" stroke-width="1.3"/><path d="M8 3v10M3 8h10" stroke="#d9261c" stroke-dasharray="2 1"/><rect x="13" y="13" width="2" height="2" fill="#111"/></svg>
<div class="a" style="left:1044.7px;top:238.5px;width:1px;height:18px;background:#c4c6d2;box-shadow:1px 0 0 #fafafe"></div>
<svg class="a" style="left:1050.9px;top:239.5px" width="16" height="16" viewBox="0 0 16 16"><path d="M1 2v12M15 2v5M1 4h14M1 7h8" stroke="#d9261c" stroke-width="1.2"/><path d="M2 9.5h6v4H15" stroke="#2b3a55" stroke-width="1.4" fill="none"/><rect x="1.5" y="11" width="13" height="3.5" fill="none" stroke="#2b3a55"/></svg>
<svg class="a" style="left:1071.9px;top:239.5px" width="16" height="16" viewBox="0 0 16 16"><path d="M1 2v8M8 2v8M15 2v8M1 4h14" stroke="#d9261c" stroke-width="1.2"/><rect x="1.5" y="11" width="13" height="3.5" fill="none" stroke="#2b3a55"/></svg>
<svg class="a" style="left:1094.1px;top:239.5px" width="16" height="16" viewBox="0 0 16 16"><path d="M2 2v8M8 2v8M14 2v3" stroke="#d9261c" stroke-dasharray="2 1" stroke-width="1.2"/><rect x="1.5" y="11" width="13" height="3.5" fill="none" stroke="#2b3a55"/></svg>
<div class="a" style="left:1117.5px;top:238.5px;width:1px;height:18px;background:#c4c6d2;box-shadow:1px 0 0 #fafafe"></div>
<svg class="a" style="left:1123.7px;top:239.5px" width="16" height="16" viewBox="0 0 16 16"><path d="M2 14l10-12" stroke="#2b3a55" stroke-width="1.4"/><path d="M3 3h4M5 1v4M10 11h4" stroke="#d9261c" stroke-width="1.4"/></svg>
<div class="a" style="left:1147.6px;top:238.5px;width:1px;height:18px;background:#c4c6d2;box-shadow:1px 0 0 #fafafe"></div>
<svg class="a" style="left:1153.9px;top:239.5px" width="16" height="16" viewBox="0 0 16 16"><path d="M2 14l10-12" stroke="#777" stroke-width="1.2"/><path d="M6 3l8 8M8 1l6 6" stroke="#d9261c" stroke-width="1.2"/></svg>
<div class="a" style="left:1177.8px;top:238.5px;width:1px;height:18px;background:#c4c6d2;box-shadow:1px 0 0 #fafafe"></div>
<svg class="a" style="left:1184px;top:239.5px" width="16" height="16" viewBox="0 0 16 16"><path d="M1 2v10M15 2v10M1 4h14" stroke="#d9261c" stroke-width="1.2"/><rect x="1.5" y="11.5" width="13" height="3" fill="#fff" stroke="#2b3a55"/><path d="M6 3l7 8" stroke="#f2a93b" stroke-width="2.4"/></svg>
<svg class="a" style="left:1205.7px;top:239.5px" width="16" height="16" viewBox="0 0 16 16"><path d="M1 3v9M15 3v9M1 7h14" stroke="#d9261c" stroke-width="1.2"/><rect x="6" y="4" width="4" height="6" fill="#d9261c"/><rect x="1.5" y="12" width="13" height="3" fill="#fff" stroke="#2b3a55"/></svg>
<svg class="a" style="left:1226.7px;top:239.5px" width="16" height="16" viewBox="0 0 16 16"><path d="M1 6v6M15 6v6M1 9h14" stroke="#d9261c" stroke-width="1.2"/><rect x="6" y="1" width="4" height="3" fill="#d9261c"/><rect x="5" y="6" width="6" height="4" fill="#ddd" stroke="#888"/><rect x="1.5" y="12" width="13" height="3" fill="#fff" stroke="#2b3a55"/></svg>
<svg class="a" style="left:1248.4px;top:239.5px" width="16" height="16" viewBox="0 0 16 16"><path d="M1 6v6M15 6v6M1 9h14" stroke="#d9261c" stroke-width="1.2"/><rect x="6" y="1" width="4" height="4" fill="#fff" stroke="#555"/><rect x="1.5" y="12" width="13" height="3" fill="#fff" stroke="#2b3a55"/></svg>
<svg class="a" style="left:1270.4px;top:239.5px" width="16" height="16" viewBox="0 0 16 16"><path d="M2 2v10M14 2v10M2 4h12" stroke="#d9261c" stroke-width="1.2"/><rect x="1.5" y="11.5" width="13" height="3" fill="#fff" stroke="#2b3a55"/></svg>
<div class="a" style="left:1293.4px;top:238.5px;width:1px;height:18px;background:#c4c6d2;box-shadow:1px 0 0 #fafafe"></div>
<svg class="a" style="left:1300.2px;top:239.5px" width="16" height="16" viewBox="0 0 16 16"><path d="M1 8v6M15 8v6M1 10h14" stroke="#d9261c" stroke-width="1.2"/><path d="M5 13l9-9" stroke="#f2c23a" stroke-width="2"/><path d="M4 14l4-4l2 2z" fill="#1f4f9a"/><path d="M2 15h12" stroke="#2b3a55" stroke-width="1.3"/><circle cx="5" cy="4" r="3.5" fill="#2e9a4a"/><path d="M5 2v4M3 4h4" stroke="#fff" stroke-width="1.3"/></svg>
<svg class="a" style="left:1321.9px;top:239.5px" width="16" height="16" viewBox="0 0 16 16"><path d="M1 8v6M15 8v6M1 10h14" stroke="#d9261c" stroke-width="1.2"/><path d="M5 13l9-9" stroke="#f2c23a" stroke-width="2"/><path d="M4 14l4-4l2 2z" fill="#1f4f9a"/><path d="M2 15h12" stroke="#2b3a55" stroke-width="1.3"/></svg>
<svg class="a" style="left:1343.7px;top:239.5px" width="16" height="16" viewBox="0 0 16 16"><path d="M1 8v6M15 8v6M1 10h14" stroke="#d9261c" stroke-width="1.2"/><path d="M5 13l9-9" stroke="#f2c23a" stroke-width="2"/><path d="M4 14l4-4l2 2z" fill="#1f4f9a"/><path d="M2 15h12" stroke="#2b3a55" stroke-width="1.3"/><rect x="3" y="1" width="5" height="5" fill="#fff" stroke="#8a3fc0" stroke-width="1.3"/></svg>
<svg class="a" style="left:1364.9px;top:239.5px" width="16" height="16" viewBox="0 0 16 16"><path d="M1 8v6M15 8v6M1 10h14" stroke="#d9261c" stroke-width="1.2"/><path d="M5 13l9-9" stroke="#f2c23a" stroke-width="2"/><path d="M4 14l4-4l2 2z" fill="#1f4f9a"/><path d="M2 15h12" stroke="#2b3a55" stroke-width="1.3"/><path d="M2 2h4l1 1h3v4H2z" fill="#f2b33e" stroke="#555" stroke-width="0.6"/></svg>
<svg class="a" style="left:1386.7px;top:239.5px" width="16" height="16" viewBox="0 0 16 16"><path d="M1 8v6M15 8v6M1 10h14" stroke="#d9261c" stroke-width="1.2"/><path d="M5 13l9-9" stroke="#f2c23a" stroke-width="2"/><path d="M4 14l4-4l2 2z" fill="#1f4f9a"/><path d="M2 15h12" stroke="#2b3a55" stroke-width="1.3"/><circle cx="6" cy="4" r="3.5" fill="#1f64b8"/><path d="M6 3v3" stroke="#fff" stroke-width="1.3"/></svg>
<svg class="a" style="left:1408.4px;top:239.5px" width="16" height="16" viewBox="0 0 16 16"><path d="M1 8v6M15 8v6M1 10h14" stroke="#d9261c" stroke-width="1.2"/><path d="M5 13l9-9" stroke="#f2c23a" stroke-width="2"/><path d="M4 14l4-4l2 2z" fill="#1f4f9a"/><path d="M2 15h12" stroke="#2b3a55" stroke-width="1.3"/><circle cx="5" cy="4" r="3.5" fill="#2e9a4a"/><path d="M5 2v4M3 4h4" stroke="#fff" stroke-width="1.3"/></svg>
<div class="a" style="left:1431.5px;top:238.5px;width:1px;height:18px;background:#c4c6d2;box-shadow:1px 0 0 #fafafe"></div>
<svg class="a" style="left:1553.2px;top:239.5px" width="16" height="16" viewBox="0 0 16 16"><path d="M2 7h12" stroke="#d9261c" stroke-width="1.3"/><rect x="1.0" y="5.5" width="3" height="3" fill="#fff" stroke="#d9261c" stroke-width="1"/><rect x="12.0" y="5.5" width="3" height="3" fill="#fff" stroke="#d9261c" stroke-width="1"/><rect x="1" y="11" width="14" height="4" fill="#f2b33e"/><path d="M3 11v2M6 11v2M9 11v2M12 11v2" stroke="#a87a2a" stroke-width="0.6"/></svg>
<svg class="a" style="left:1574.1px;top:239.5px" width="16" height="16" viewBox="0 0 16 16"><path d="M1 1h9l3 3l2 3l-3 3H1z" fill="#2e9a4a" stroke="#226b34"/><rect x="6" y="4" width="3" height="2" fill="#fff"/><rect x="1" y="11" width="14" height="4" fill="#f2b33e"/></svg>
<svg class="a" style="left:1595.9px;top:239.5px" width="16" height="16" viewBox="0 0 16 16"><circle cx="8" cy="6" r="5" fill="#2e9a4a"/><circle cx="8" cy="6" r="2" fill="#fff"/><rect x="1" y="11" width="14" height="4" fill="#f2b33e"/></svg>
<svg class="a" style="left:1616.8px;top:239.5px" width="16" height="16" viewBox="0 0 16 16"><path d="M8 1v10M3 6h10" stroke="#d9261c" stroke-width="1.2"/><rect x="6.5" y="4.5" width="3" height="3" fill="#fff" stroke="#d9261c" stroke-width="1"/><rect x="1" y="11" width="14" height="4" fill="#f2b33e"/></svg>
<div class="a" style="left:1640.2px;top:238.5px;width:1px;height:18px;background:#c4c6d2;box-shadow:1px 0 0 #fafafe"></div>
<svg class="a" style="left:1647.4px;top:239.5px" width="16" height="16" viewBox="0 0 16 16"><path d="M4 14l4-12h6l-4 12z" fill="#eaf5ea" stroke="#2e8b3e"/><circle cx="5" cy="11.5" r="3.5" fill="#1f64b8"/><path d="M5 10v4" stroke="#fff" stroke-width="1.3"/></svg>
<svg class="a" style="left:1668.9px;top:239.5px" width="16" height="16" viewBox="0 0 16 16"><path d="M2.5 1.5h6l3 3v10h-9z" fill="#fff" stroke="#777"/><path d="M6 11l2.5 3l6-6" stroke="#2e9a4a" stroke-width="2" fill="none"/></svg>
<svg class="a" style="left:1690.4px;top:239.5px" width="16" height="16" viewBox="0 0 16 16"><rect x="1.5" y="1.5" width="11" height="12" fill="#fff" stroke="#555"/><path d="M1.5 4h11" stroke="#1f64b8" stroke-width="2"/><path d="M3 7h5M3 9h5M3 11h4" stroke="#888"/><circle cx="11.5" cy="11.5" r="3.5" fill="#1f64b8"/><path d="M11.5 10v4" stroke="#fff" stroke-width="1.3"/></svg>
<svg class="a" style="left:1711.9px;top:239.5px" width="16" height="16" viewBox="0 0 16 16"><circle cx="8" cy="8" r="6.5" fill="#fff" stroke="#333" stroke-width="1.6"/><path d="M8 4v4h3" stroke="#1f64b8" stroke-width="1.4" fill="none"/></svg>
<svg class="a" style="left:1753.9px;top:239.5px" width="16" height="16" viewBox="0 0 16 16"><rect x="1" y="1" width="14" height="14" fill="#d8d8e8" stroke="#6a7ab8"/><path d="M1 15L15 1v14z" fill="#8a9ad0"/><circle cx="5" cy="4" r="3" fill="#f5b335"/><path d="M5 0v8M1 4h8" stroke="#f5b335"/></svg>
<svg class="a" style="left:1775.4px;top:239.5px" width="16" height="16" viewBox="0 0 16 16"><rect x="1" y="1" width="14" height="14" fill="#e4e4ee" stroke="#6a7ab8"/><path d="M2 14L14 2v12z" fill="#8a9ad0" stroke="#5a6aa8"/></svg>
<svg class="a" style="left:1796.9px;top:239.5px" width="16" height="16" viewBox="0 0 16 16"><rect x="1.5" y="2.5" width="13" height="11" fill="#e8e8e8" stroke="#999"/><rect x="4" y="5" width="8" height="6" fill="#fff" stroke="#999"/></svg>
<div class="a" style="left:545.5px;top:261.5px;width:23.399999999999977px;height:23.0px;background:#d8e8fa;border:1px solid #5aa0ee"></div>
<div class="a" style="left:1912.3px;top:261.5px;width:21.5px;height:23.0px;background:#d8e8fa;border:1px solid #5aa0ee"></div>
<svg class="a" style="left:218.8px;top:265px" width="16" height="16" viewBox="0 0 16 16"><path d="M2.5 1.5h7l3 3v10h-10z" fill="#fff" stroke="#444"/><circle cx="10" cy="11" r="3" fill="#fff" stroke="#444" stroke-width="1.3"/></svg>
<div class="a" style="left:241.5px;top:264px;width:1px;height:18px;background:#c4c6d2;box-shadow:1px 0 0 #fafafe"></div>
<svg class="a" style="left:248px;top:265px" width="16" height="16" viewBox="0 0 16 16"><rect x="1.5" y="7.5" width="13" height="7" fill="#f4f4f4" stroke="#777"/><path d="M3 10h10M3 12.5h10" stroke="#aaa"/><path d="M3 7l4-6l6 4l-2 2z" fill="#f0d9b0" stroke="#c33" stroke-width="0.7"/></svg>
<div class="a" style="left:272px;top:264px;width:1px;height:18px;background:#c4c6d2;box-shadow:1px 0 0 #fafafe"></div>
<svg class="a" style="left:278.5px;top:265px" width="16" height="16" viewBox="0 0 16 16"><rect x="2.5" y="2.5" width="8" height="8" fill="#fff" stroke="#2b3a55"/><rect x="5.5" y="5.5" width="8" height="8" fill="#fff" stroke="#2b3a55"/><rect x="0.5" y="0.5" width="3" height="3" fill="#fff" stroke="#2a6ebb" stroke-width="1"/><rect x="12.5" y="0.5" width="3" height="3" fill="#fff" stroke="#2a6ebb" stroke-width="1"/><rect x="0.5" y="12.5" width="3" height="3" fill="#fff" stroke="#2a6ebb" stroke-width="1"/><rect x="12.5" y="12.5" width="3" height="3" fill="#fff" stroke="#2a6ebb" stroke-width="1"/></svg>
<svg class="a" style="left:299.9px;top:265px" width="16" height="16" viewBox="0 0 16 16"><rect x="1.5" y="1.5" width="6" height="6" fill="#fff" stroke="#444"/><rect x="6" y="6" width="7" height="7" fill="#f2b33e"/><rect x="8.5" y="10.5" width="6" height="5" fill="#fff" stroke="#444"/></svg>
<div class="a" style="left:323.5px;top:264px;width:1px;height:18px;background:#c4c6d2;box-shadow:1px 0 0 #fafafe"></div>
<svg class="a" style="left:329.2px;top:265px" width="16" height="16" viewBox="0 0 16 16"><rect x="1.5" y="1.5" width="12" height="11" fill="#e8f2fa" stroke="#777"/><path d="M1.5 3h12" stroke="#1f64b8" stroke-width="2"/><circle cx="12" cy="12.5" r="3.2" fill="#d9261c"/></svg>
<svg class="a" style="left:351px;top:265px" width="16" height="16" viewBox="0 0 16 16"><rect x="1.5" y="1.5" width="12" height="11" fill="#e8f2fa" stroke="#777"/><path d="M1.5 3h12" stroke="#1f64b8" stroke-width="2"/><rect x="9" y="9" width="6.5" height="6.5" fill="#333"/></svg>
<svg class="a" style="left:372.7px;top:265px" width="16" height="16" viewBox="0 0 16 16"><rect x="1.5" y="1.5" width="12" height="11" fill="#e8f2fa" stroke="#777"/><path d="M1.5 3h12" stroke="#1f64b8" stroke-width="2"/><path d="M9 8l6 3.5l-6 3.5z" fill="#2e9a4a"/></svg>
<div class="a" style="left:396.6px;top:264px;width:1px;height:18px;background:#c4c6d2;box-shadow:1px 0 0 #fafafe"></div>
<svg class="a" style="left:402.9px;top:265px" width="16" height="16" viewBox="0 0 16 16"><rect x="3" y="6" width="9" height="7" fill="#fff" stroke="#2b3a55"/><circle cx="11" cy="12" r="3.5" fill="#fff" stroke="#555"/><circle cx="4" cy="4" r="2.5" fill="#f5b335"/><rect x="1.5" y="11.5" width="2" height="2" fill="#fff" stroke="#2a6ebb"/></svg>
<svg class="a" style="left:424.6px;top:265px" width="16" height="16" viewBox="0 0 16 16"><rect x="1.5" y="6.5" width="9" height="6" fill="#fff" stroke="#2b3a55"/><circle cx="10" cy="12" r="3.5" fill="none" stroke="#555"/><rect x="9" y="1.5" width="6" height="6" fill="#fff" stroke="#8a3fc0" stroke-width="1.3"/></svg>
<div class="a" style="left:448.5px;top:264px;width:1px;height:18px;background:#c4c6d2;box-shadow:1px 0 0 #fafafe"></div>
<svg class="a" style="left:454.7px;top:265px" width="16" height="16" viewBox="0 0 16 16"><rect x="1" y="5" width="14" height="9" rx="1.5" fill="#555"/><rect x="5" y="3" width="5" height="3" fill="#555"/><circle cx="8" cy="9.5" r="2.5" fill="#777"/></svg>
<svg class="a" style="left:476.2px;top:265px" width="16" height="16" viewBox="0 0 16 16"><rect x="1" y="5" width="14" height="9" rx="1.5" fill="#555"/><rect x="5" y="3" width="5" height="3" fill="#555"/><rect x="4" y="7" width="8" height="5" fill="#5fa0e0"/></svg>
<div class="a" style="left:499.6px;top:264px;width:1px;height:18px;background:#c4c6d2;box-shadow:1px 0 0 #fafafe"></div>
<svg class="a" style="left:505.79999999999995px;top:265px" width="16" height="16" viewBox="0 0 16 16"><path d="M2 9l6-6l6 6l-6 5z" fill="#fff" stroke="#1f64b8" stroke-width="1.6"/><circle cx="4" cy="4" r="2.5" fill="#f5b335"/></svg>
<svg class="a" style="left:527.5px;top:265px" width="16" height="16" viewBox="0 0 16 16"><path d="M1.5 9l6-7l6 7v5h-12z" fill="#fff" stroke="#2a6ebb" stroke-width="1.6"/><circle cx="8" cy="9" r="2" fill="#d9261c"/><path d="M9 10l5 5" stroke="#f2a93b" stroke-width="3"/></svg>
<svg class="a" style="left:549px;top:265px" width="16" height="16" viewBox="0 0 16 16"><path d="M2 9l6-6l6 6l-6 5z" fill="#fff" stroke="#1f64b8" stroke-width="1.6"/><path d="M6 12l3 3l6-6" stroke="#2e9a4a" stroke-width="2" fill="none"/></svg>
<svg class="a" style="left:570.4px;top:265px" width="16" height="16" viewBox="0 0 16 16"><path d="M1.5 9l6-7l6 7v5h-12z" fill="#fff" stroke="#2a6ebb" stroke-width="1.6"/><circle cx="8" cy="9" r="2" fill="#d9261c"/><path d="M9 10l5 5" stroke="#f2a93b" stroke-width="3"/></svg>
<svg class="a" style="left:592.2px;top:265px" width="16" height="16" viewBox="0 0 16 16"><path d="M2 9l6-6l6 6l-6 5z" fill="#fff" stroke="#1f64b8" stroke-width="1.6"/><rect x="10" y="10" width="5.5" height="5.5" fill="#8a3fc0"/></svg>
<div class="a" style="left:616px;top:264px;width:1px;height:18px;background:#c4c6d2;box-shadow:1px 0 0 #fafafe"></div>
<svg class="a" style="left:622.3px;top:265px" width="16" height="16" viewBox="0 0 16 16"><rect x="1.5" y="5.5" width="12" height="10" fill="#fff" stroke="#1f4f9a"/><rect x="4" y="9" width="7" height="3" fill="#cde" stroke="#1f4f9a"/><rect x="1" y="1" width="6" height="5" fill="none" stroke="#555"/></svg>
<svg class="a" style="left:644px;top:265px" width="16" height="16" viewBox="0 0 16 16"><path d="M2 15V3h12v5" stroke="#555" stroke-width="1.5" fill="none"/><path d="M5 3v4M9 3v5" stroke="#555" stroke-width="2"/></svg>
<svg class="a" style="left:665px;top:265px" width="16" height="16" viewBox="0 0 16 16"><path d="M2.5 1.5h6l3 3v10h-9z" fill="#fff" stroke="#777"/><path d="M6 11l2.5 3l6-6" stroke="#2e9a4a" stroke-width="2" fill="none"/></svg>
<svg class="a" style="left:707.6px;top:265px" width="16" height="16" viewBox="0 0 16 16"><path d="M4 10h11l-3 3H1z" fill="#fff" stroke="#444" stroke-width="0.9"/><path d="M4 6.5h11l-3 3H1z" fill="#fff" stroke="#444" stroke-width="0.9"/><circle cx="10.5" cy="10.5" r="2.8" fill="#fff" stroke="#333" stroke-width="1.3"/><path d="M12.5 12.5l2.5 2.5" stroke="#333" stroke-width="1.6"/></svg>
<svg class="a" style="left:729.4px;top:265px" width="16" height="16" viewBox="0 0 16 16"><path d="M4 10h11l-3 3H1z" fill="#fff" stroke="#444" stroke-width="0.9"/><path d="M4 6.5h11l-3 3H1z" fill="#fff" stroke="#444" stroke-width="0.9"/><path d="M4 3h11l-3 3H1z" fill="#fff" stroke="#444" stroke-width="0.9"/><rect x="7" y="8" width="8" height="6" fill="#fff" stroke="#444"/><path d="M7 9.5h8" stroke="#2a6ebb" stroke-width="2"/></svg>
<svg class="a" style="left:751.2px;top:265px" width="16" height="16" viewBox="0 0 16 16"><path d="M4 10h11l-3 3H1z" fill="#fff" stroke="#444" stroke-width="0.9"/><path d="M4 6.5h11l-3 3H1z" fill="#fff" stroke="#444" stroke-width="0.9"/><path d="M4 3h11l-3 3H1z" fill="#2a6ebb" stroke="#444" stroke-width="0.9"/><circle cx="8" cy="4.5" r="1.3" fill="#d9261c"/></svg>
<svg class="a" style="left:772.1px;top:265px" width="16" height="16" viewBox="0 0 16 16"><rect x="3" y="1" width="8" height="7" fill="#e8f0fa" stroke="#2a6ebb"/><path d="M4 9h11l-3 4H1z" fill="#fff" stroke="#444" stroke-width="0.9"/><path d="M8 5v6M6 9l2 2.5l2-2.5" stroke="#1f64b8" stroke-width="1.5" fill="none"/></svg>
<div class="a" style="left:796px;top:264px;width:1px;height:18px;background:#c4c6d2;box-shadow:1px 0 0 #fafafe"></div>
<svg class="a" style="left:802.2px;top:265px" width="16" height="16" viewBox="0 0 16 16"><path d="M4 10h11l-3 3H1z" fill="#fff" stroke="#444" stroke-width="0.9"/><path d="M4 6.5h11l-3 3H1z" fill="#fff" stroke="#444" stroke-width="0.9"/><path d="M4 3h11l-3 3H1z" fill="#fff" stroke="#444" stroke-width="0.9"/><path d="M9 14l5-5l1.5 1.5l-5 5z" fill="#d7b27a"/></svg>
<svg class="a" style="left:824px;top:265px" width="16" height="16" viewBox="0 0 16 16"><path d="M4 3h11l-3 3H1z" fill="#fff" stroke="#444" stroke-width="0.9"/><path d="M2 10l4 4l9-7" stroke="#1f4f9a" stroke-width="2.4" fill="none"/></svg>
<div class="a" style="left:847.5px;top:264px;width:1px;height:18px;background:#c4c6d2;box-shadow:1px 0 0 #fafafe"></div>
<svg class="a" style="left:854.1px;top:265px" width="16" height="16" viewBox="0 0 16 16"><path d="M4 10h11l-3 3H1z" fill="#fff" stroke="#444" stroke-width="0.9"/><path d="M4 6.5h11l-3 3H1z" fill="#2a6ebb" stroke="#444" stroke-width="0.9"/><path d="M4 3h11l-3 3H1z" fill="#fff" stroke="#444" stroke-width="0.9"/><path d="M11 13l3 2" stroke="#333"/></svg>
<svg class="a" style="left:875.8px;top:265px" width="16" height="16" viewBox="0 0 16 16"><path d="M4 10h11l-3 3H1z" fill="#fff" stroke="#444" stroke-width="0.9"/><path d="M4 6.5h11l-3 3H1z" fill="#2a6ebb" stroke="#444" stroke-width="0.9"/><path d="M4 3h11l-3 3H1z" fill="#fff" stroke="#444" stroke-width="0.9"/><path d="M10 14l4-4M12 10h2v2" stroke="#333" fill="none"/></svg>
<div class="a" style="left:898.9px;top:264px;width:1px;height:18px;background:#c4c6d2;box-shadow:1px 0 0 #fafafe"></div>
<svg class="a" style="left:905.1px;top:265px" width="16" height="16" viewBox="0 0 16 16"><path d="M4 10h11l-3 3H1z" fill="#fff" stroke="#444" stroke-width="0.9"/><path d="M4 6.5h11l-3 3H1z" fill="#fff" stroke="#444" stroke-width="0.9"/><path d="M4 3h11l-3 3H1z" fill="#fff" stroke="#444" stroke-width="0.9"/><circle cx="11" cy="9" r="3.5" fill="#f7e27a" stroke="#888"/><rect x="10" y="12" width="2" height="3" fill="#777"/></svg>
<svg class="a" style="left:927px;top:265px" width="16" height="16" viewBox="0 0 16 16"><path d="M4 10h11l-3 3H1z" fill="#fff" stroke="#444" stroke-width="0.9"/><path d="M4 6.5h11l-3 3H1z" fill="#fff" stroke="#444" stroke-width="0.9"/><path d="M4 3h11l-3 3H1z" fill="#fff" stroke="#444" stroke-width="0.9"/><circle cx="11" cy="9" r="3.5" fill="#f7e27a" stroke="#888"/><rect x="10" y="12" width="2" height="3" fill="#777"/></svg>
<div class="a" style="left:951px;top:264px;width:1px;height:18px;background:#c4c6d2;box-shadow:1px 0 0 #fafafe"></div>
<svg class="a" style="left:957.2px;top:265px" width="16" height="16" viewBox="0 0 16 16"><path d="M4 3h11l-3 3H1z" fill="#fff" stroke="#444" stroke-width="0.9"/><path d="M11 8v7M7.5 11.5h7M8.5 9l5 5M13.5 9l-5 5" stroke="#3a8ee6" stroke-width="1.1"/></svg>
<svg class="a" style="left:979px;top:265px" width="16" height="16" viewBox="0 0 16 16"><path d="M4 10h11l-3 3H1z" fill="#fff" stroke="#444" stroke-width="0.9"/><path d="M4 6.5h11l-3 3H1z" fill="#fff" stroke="#444" stroke-width="0.9"/><path d="M4 3h11l-3 3H1z" fill="#fff" stroke="#444" stroke-width="0.9"/><circle cx="11.5" cy="12" r="2.5" fill="#f5b335"/><path d="M11.5 8v8M7.5 12h8" stroke="#f5b335"/></svg>
<div class="a" style="left:1002.9px;top:264px;width:1px;height:18px;background:#c4c6d2;box-shadow:1px 0 0 #fafafe"></div>
<svg class="a" style="left:1009px;top:265px" width="16" height="16" viewBox="0 0 16 16"><path d="M4 3h11l-3 3H1z" fill="#fff" stroke="#444" stroke-width="0.9"/><rect x="8" y="9" width="6" height="6" fill="#f0d58a" stroke="#777"/><path d="M9 9V7a2 2 0 0 1 4 0v2" stroke="#1f4f9a" fill="none" stroke-width="1.4"/></svg>
<svg class="a" style="left:1030.8px;top:265px" width="16" height="16" viewBox="0 0 16 16"><path d="M4 3h11l-3 3H1z" fill="#fff" stroke="#444" stroke-width="0.9"/><rect x="7" y="9" width="6" height="6" fill="#888"/><path d="M12 9V7a2 2 0 0 1 4 0" stroke="#1f4f9a" fill="none" stroke-width="1.4"/></svg>
<div class="a" style="left:1053.9px;top:264px;width:1px;height:18px;background:#c4c6d2;box-shadow:1px 0 0 #fafafe"></div>
<svg class="a" style="left:1061px;top:265px" width="16" height="16" viewBox="0 0 16 16"><path d="M4 3h11l-3 3H1z" fill="#fff" stroke="#444" stroke-width="0.9"/><path d="M4 6l9 9M13 6l-9 9" stroke="#d9261c" stroke-width="2.6"/></svg>
<svg class="a" style="left:1102px;top:265px" width="16" height="16" viewBox="0 0 16 16"><path d="M4 10h11l-3 3H1z" fill="#fff" stroke="#444" stroke-width="0.9"/><path d="M4 6.5h11l-3 3H1z" fill="#fff" stroke="#444" stroke-width="0.9"/><circle cx="10.5" cy="10.5" r="2.8" fill="#fff" stroke="#333" stroke-width="1.3"/><path d="M12.5 12.5l2.5 2.5" stroke="#333" stroke-width="1.6"/></svg>
<svg class="a" style="left:1123.7px;top:265px" width="16" height="16" viewBox="0 0 16 16"><circle cx="8" cy="8" r="7" fill="#f5d63a" stroke="#777"/><path d="M8 8V1a7 7 0 0 0-7 7z" fill="#e8e07a"/><path d="M8 8H1a7 7 0 0 0 2 5z" fill="#3a9ae0"/><path d="M8 8L3 13a7 7 0 0 0 7 2z" fill="#8a4ec0"/><path d="M8 8l2 7a7 7 0 0 0 5-5z" fill="#e03a3a"/><path d="M8 8l7 2a7 7 0 0 0-2-7z" fill="#f2a52a"/><path d="M8 8V1a7 7 0 0 0-6 4z" fill="#5cb84a"/></svg>
<div class="a" style="left:1147.6px;top:264px;width:1px;height:18px;background:#c4c6d2;box-shadow:1px 0 0 #fafafe"></div>
<svg class="a" style="left:1153.9px;top:265px" width="16" height="16" viewBox="0 0 16 16"><path d="M4 10h11l-3 3H1z" fill="#fff" stroke="#444" stroke-width="0.9"/><path d="M4 6.5h11l-3 3H1z" fill="#fff" stroke="#444" stroke-width="0.9"/><path d="M4 3h11l-3 3H1z" fill="#fff" stroke="#444" stroke-width="0.9"/><rect x="7" y="8" width="8" height="6" fill="#fff" stroke="#444"/><path d="M7 9.5h8" stroke="#2a6ebb" stroke-width="2"/></svg>
<svg class="a" style="left:1175.6px;top:265px" width="16" height="16" viewBox="0 0 16 16"><text x="7" y="13" font-size="14" font-family="Liberation Sans" font-weight="bold" fill="#1f64b8" text-anchor="middle">A</text><path d="M9 14l6-7" stroke="#f2a93b" stroke-width="2.6"/></svg>
<svg class="a" style="left:1196.5px;top:265px" width="16" height="16" viewBox="0 0 16 16"><path d="M1 2v10M15 2v10M1 4h14" stroke="#d9261c" stroke-width="1.2"/><rect x="1.5" y="11.5" width="13" height="3" fill="#fff" stroke="#2b3a55"/><path d="M6 3l7 8" stroke="#f2a93b" stroke-width="2.4"/></svg>
<svg class="a" style="left:1219.1px;top:265px" width="16" height="16" viewBox="0 0 16 16"><path d="M2.5 1.5h6l2 2v9h-8z" fill="#fff" stroke="#777"/><path d="M3 2v10" stroke="#4a90d0"/><rect x="7" y="9" width="8" height="4" rx="1" fill="#dfe3ea" stroke="#555"/><rect x="8.5" y="7" width="5" height="2" fill="#1f64b8"/><rect x="8.5" y="12" width="5" height="3" fill="#fff" stroke="#555"/></svg>
<svg class="a" style="left:1240px;top:265px" width="16" height="16" viewBox="0 0 16 16"><rect x="4" y="1.5" width="8" height="4" fill="#1f64b8"/><rect x="1" y="5" width="14" height="6.5" rx="1" fill="#e6e9ef" stroke="#555"/><rect x="4" y="10" width="8" height="4.5" fill="#fff" stroke="#555"/><path d="M6 12.5h4" stroke="#1f64b8"/></svg>
<div class="a" style="left:1264px;top:264px;width:1px;height:18px;background:#c4c6d2;box-shadow:1px 0 0 #fafafe"></div>
<svg class="a" style="left:1272px;top:265px" width="16" height="16" viewBox="0 0 16 16"><path d="M4 3h11l-3 4H1z" fill="#2a9a3a" stroke="#555"/><path d="M4 9h11l-3 4H1z" fill="#aaa" stroke="#555"/><path d="M1 6v9M1 15l-1-2" stroke="#d9261c"/></svg>
<svg class="a" style="left:1291.3px;top:265px" width="16" height="16" viewBox="0 0 16 16"><rect x="5" y="3" width="9" height="8" fill="#bde8c4" stroke="#2a9a3a"/><rect x="2" y="7" width="7" height="7" fill="#ccc" stroke="#555"/><path d="M1 3v12" stroke="#d9261c"/></svg>
<div class="a" style="left:1315.2px;top:264px;width:1px;height:18px;background:#c4c6d2;box-shadow:1px 0 0 #fafafe"></div>
<svg class="a" style="left:1321.4px;top:265px" width="16" height="16" viewBox="0 0 16 16"><path d="M3.5 1.5h7l3 3v10h-10z" fill="#fff" stroke="#777"/><path d="M3.5 3.5h9M5.5 1.5v13M3.5 12.5h9" stroke="#d9261c" stroke-width="1.2"/></svg>
<svg class="a" style="left:1364px;top:265px" width="16" height="16" viewBox="0 0 16 16"><path d="M1 8q7-7 14 0q-7 7-14 0z" fill="#444"/><circle cx="8" cy="8" r="2.5" fill="#999"/></svg>
<svg class="a" style="left:1385px;top:265px" width="16" height="16" viewBox="0 0 16 16"><path d="M1 6q7-6 14 0q-7 6-14 0z" fill="#444"/><ellipse cx="8" cy="12.5" rx="6" ry="2.5" fill="none" stroke="#1f64b8" stroke-width="2"/><path d="M8 9v6" stroke="#d9261c"/></svg>
<svg class="a" style="left:1406.8px;top:265px" width="16" height="16" viewBox="0 0 16 16"><path d="M1 6q7-6 14 0q-7 6-14 0z" fill="#444"/><rect x="3" y="10.5" width="10" height="5" fill="#fff" stroke="#555"/><path d="M3 12h10" stroke="#1f64b8" stroke-width="1.5"/></svg>
<svg class="a" style="left:1428.5px;top:265px" width="16" height="16" viewBox="0 0 16 16"><path d="M3 6q6-6 12 0q-6 6-12 0z" fill="#444"/><path d="M3 8v7h9" stroke="#2e9a4a" stroke-width="1.2" fill="none"/><path d="M3 15h9" stroke="#d9261c" stroke-width="1.2"/></svg>
<div class="a" style="left:1452.4px;top:264px;width:1px;height:18px;background:#c4c6d2;box-shadow:1px 0 0 #fafafe"></div>
<svg class="a" style="left:1458.7px;top:265px" width="16" height="16" viewBox="0 0 16 16"><path d="M1.5 4.5h10v10h-10z M1.5 4.5l3-3h10l-3 3 M11.5 14.5l3-3v-10" fill="#fff" stroke="#2b3a55" stroke-width="1.1"/><path d="M4 4l3-3h8l-3 3z" fill="#2a7fd0"/><path d="M1.5 4.5h10v10h-10z M1.5 4.5l3-3h10l-3 3 M11.5 14.5l3-3v-10" fill="none" stroke="#2b3a55" stroke-width="1.1"/></svg>
<svg class="a" style="left:1480.4px;top:265px" width="16" height="16" viewBox="0 0 16 16"><path d="M1.5 4.5h10v10h-10z M1.5 4.5l3-3h10l-3 3 M11.5 14.5l3-3v-10" fill="#fff" stroke="#2b3a55" stroke-width="1.1"/><path d="M1.5 4.5h10v10h-10z" fill="#2a7fd0"/><path d="M1.5 4.5h10v10h-10z M1.5 4.5l3-3h10l-3 3 M11.5 14.5l3-3v-10" fill="none" stroke="#2b3a55" stroke-width="1.1"/></svg>
<svg class="a" style="left:1501.3px;top:265px" width="16" height="16" viewBox="0 0 16 16"><path d="M1.5 4.5h10v10h-10z M1.5 4.5l3-3h10l-3 3 M11.5 14.5l3-3v-10" fill="#fff" stroke="#2b3a55" stroke-width="1.1"/><path d="M11.5 4.5l3-3v10l-3 3z" fill="#2a7fd0"/><path d="M1.5 4.5h10v10h-10z M1.5 4.5l3-3h10l-3 3 M11.5 14.5l3-3v-10" fill="none" stroke="#2b3a55" stroke-width="1.1"/></svg>
<svg class="a" style="left:1523px;top:265px" width="16" height="16" viewBox="0 0 16 16"><path d="M1.5 4.5h10v10h-10z M1.5 4.5l3-3h10l-3 3 M11.5 14.5l3-3v-10" fill="#fff" stroke="#2b3a55" stroke-width="1.1"/><path d="M1.5 10.5h6v4h-6z" fill="#2a7fd0"/><path d="M1.5 4.5h10v10h-10z M1.5 4.5l3-3h10l-3 3 M11.5 14.5l3-3v-10" fill="none" stroke="#2b3a55" stroke-width="1.1"/></svg>
<svg class="a" style="left:1544.9px;top:265px" width="16" height="16" viewBox="0 0 16 16"><path d="M1.5 4.5h10v10h-10z M1.5 4.5l3-3h10l-3 3 M11.5 14.5l3-3v-10" fill="#fff" stroke="#2b3a55" stroke-width="1.1"/><path d="M8 1.5h6l-3 3h-6z" fill="#2a7fd0"/><path d="M1.5 4.5h10v10h-10z M1.5 4.5l3-3h10l-3 3 M11.5 14.5l3-3v-10" fill="none" stroke="#2b3a55" stroke-width="1.1"/></svg>
<svg class="a" style="left:1566.6px;top:265px" width="16" height="16" viewBox="0 0 16 16"><path d="M1.5 4.5h10v10h-10z M1.5 4.5l3-3h10l-3 3 M11.5 14.5l3-3v-10" fill="#fff" stroke="#2b3a55" stroke-width="1.1"/><path d="M11.5 9.5l3-3v5l-3 3z" fill="#2a7fd0"/><path d="M1.5 4.5h10v10h-10z M1.5 4.5l3-3h10l-3 3 M11.5 14.5l3-3v-10" fill="none" stroke="#2b3a55" stroke-width="1.1"/></svg>
<svg class="a" style="left:1587.5px;top:265px" width="16" height="16" viewBox="0 0 16 16"><path d="M8 1l6 3.5v7L8 15l-6-3.5v-7z" fill="#fff" stroke="#2b3a55" stroke-width="1.2"/><path d="M8 8l6-3.5v7L8 15z" fill="#2a7fd0"/><path d="M8 8V15M8 8l6-3.5M8 8L2 4.5" stroke="#2b3a55" stroke-width="0.9"/></svg>
<svg class="a" style="left:1609.3px;top:265px" width="16" height="16" viewBox="0 0 16 16"><path d="M8 1l6 3.5v7L8 15l-6-3.5v-7z" fill="#fff" stroke="#2b3a55" stroke-width="1.2"/><path d="M8 8L2 4.5v7L8 15z" fill="#2a7fd0"/><path d="M8 8V15M8 8l6-3.5M8 8L2 4.5" stroke="#2b3a55" stroke-width="0.9"/></svg>
<svg class="a" style="left:1631.3px;top:265px" width="16" height="16" viewBox="0 0 16 16"><path d="M8 1l6 3.5v7L8 15l-6-3.5v-7z" fill="#fff" stroke="#2b3a55" stroke-width="1.2"/><path d="M8 8L2 4.5L8 1l6 3.5z" fill="#2a7fd0"/><path d="M8 8V15M8 8l6-3.5M8 8L2 4.5" stroke="#2b3a55" stroke-width="0.9"/></svg>
<svg class="a" style="left:1652.8px;top:265px" width="16" height="16" viewBox="0 0 16 16"><path d="M8 1l6 3.5v7L8 15l-6-3.5v-7z" fill="#fff" stroke="#2b3a55" stroke-width="1.2"/><path d="M2 4.5v7L8 15V8z" fill="#2a7fd0"/><path d="M8 8V15M8 8l6-3.5M8 8L2 4.5" stroke="#2b3a55" stroke-width="0.9"/></svg>
<div class="a" style="left:1676.9px;top:264px;width:1px;height:18px;background:#c4c6d2;box-shadow:1px 0 0 #fafafe"></div>
<svg class="a" style="left:1682.9px;top:265px" width="16" height="16" viewBox="0 0 16 16"><path d="M8 1l6 3.5v7L8 15l-6-3.5v-7z" fill="#fff" stroke="#2b3a55" stroke-width="1.2"/><path d="M8 8L2 4.5v7L8 15z" fill="#2a7fd0"/><path d="M8 8V15M8 8l6-3.5M8 8L2 4.5" stroke="#2b3a55" stroke-width="0.9"/></svg>
<svg class="a" style="left:1704.3px;top:265px" width="16" height="16" viewBox="0 0 16 16"><path d="M8 1l6 3.5v7L8 15l-6-3.5v-7z" fill="#fff" stroke="#2b3a55" stroke-width="1.2"/><path d="M8 8l6-3.5v7L8 15z" fill="#2a7fd0"/><path d="M8 8V15M8 8l6-3.5M8 8L2 4.5" stroke="#2b3a55" stroke-width="0.9"/></svg>
<svg class="a" style="left:1725.8px;top:265px" width="16" height="16" viewBox="0 0 16 16"><path d="M8 1l6 3.5v7L8 15l-6-3.5v-7z" fill="#fff" stroke="#2b3a55" stroke-width="1.2"/><path d="M8 8L2 4.5L8 1l6 3.5z" fill="#2a7fd0"/><path d="M8 8V15M8 8l6-3.5M8 8L2 4.5" stroke="#2b3a55" stroke-width="0.9"/></svg>
<svg class="a" style="left:1747.3px;top:265px" width="16" height="16" viewBox="0 0 16 16"><path d="M8 1l6 3.5v7L8 15l-6-3.5v-7z" fill="#fff" stroke="#2b3a55" stroke-width="1.2"/><path d="M2 4.5v7L8 15V8z" fill="#2a7fd0"/><path d="M8 8V15M8 8l6-3.5M8 8L2 4.5" stroke="#2b3a55" stroke-width="0.9"/></svg>
<svg class="a" style="left:1789.7px;top:265px" width="16" height="16" viewBox="0 0 16 16"><rect x="1.5" y="1.5" width="13" height="13" fill="#fff" stroke="#444"/><path d="M4.5 1.5v13M7.5 1.5v13M10.5 1.5v13M1.5 4.5h13M1.5 7.5h13M1.5 10.5h13" stroke="#555" stroke-width="0.8"/></svg>
<svg class="a" style="left:1811.2px;top:265px" width="16" height="16" viewBox="0 0 16 16"><rect x="1.5" y="1.5" width="13" height="13" fill="#fff" stroke="#444"/><path d="M4.5 1.5v13M7.5 1.5v13M10.5 1.5v13M1.5 4.5h13M1.5 7.5h13M1.5 10.5h13" stroke="#555" stroke-width="0.8"/><path d="M8 1v14M1 8h14" stroke="#d9261c" stroke-width="1.2"/><rect x="5.5" y="5.5" width="5" height="5" fill="none" stroke="#d9261c" stroke-width="1.2"/></svg>
<svg class="a" style="left:1832.7px;top:265px" width="16" height="16" viewBox="0 0 16 16"><path d="M2 2v12h12" stroke="#2e9a4a" stroke-width="1.2" fill="none"/><path d="M2 14h12" stroke="#d9261c" stroke-width="1.3"/><path d="M5 10v4M2 10h3" stroke="#2e9a4a" stroke-width="0.8"/></svg>
<div class="a" style="left:1856.8px;top:264px;width:1px;height:18px;background:#c4c6d2;box-shadow:1px 0 0 #fafafe"></div>
<svg class="a" style="left:1863.1px;top:265px" width="16" height="16" viewBox="0 0 16 16"><path d="M2 10q6-9 12 0" stroke="#d9261c" stroke-width="1.3" fill="none"/><path d="M8 3v12M8 8l-5 3M8 8l5 3" stroke="#d9261c" stroke-width="1.1"/><circle cx="8" cy="3" r="1.5" fill="#fff" stroke="#d9261c"/><circle cx="8" cy="9" r="1.5" fill="#fff" stroke="#d9261c"/><circle cx="8" cy="15" r="1.5" fill="#fff" stroke="#d9261c"/></svg>
<svg class="a" style="left:1884.6px;top:265px" width="16" height="16" viewBox="0 0 16 16"><rect x="3.5" y="3.5" width="9" height="9" fill="none" stroke="#888" stroke-dasharray="1.5 1"/><path d="M8 1v14" stroke="#2e9a4a" stroke-width="1.2"/><path d="M1 8h14" stroke="#d9261c" stroke-width="1.2"/><rect x="6" y="6" width="4" height="4" fill="none" stroke="#d9261c"/></svg>
<div class="a" style="left:1907.8px;top:264px;width:1px;height:18px;background:#c4c6d2;box-shadow:1px 0 0 #fafafe"></div>
<svg class="a" style="left:1915px;top:265px" width="16" height="16" viewBox="0 0 16 16"><rect x="1.5" y="1.5" width="13" height="13" fill="#fff" stroke="#2b3a55"/><rect x="2" y="10" width="12" height="4" fill="#d9261c"/><path d="M6 10l6-7" stroke="#1f64b8" stroke-width="2.5"/></svg>
<svg class="a" style="left:1936.5px;top:265px" width="16" height="16" viewBox="0 0 16 16"><path d="M2 2v12h12" stroke="#d9261c" stroke-width="1.2" fill="none"/><path d="M2 2v12" stroke="#1f64b8" stroke-width="1.2"/><path d="M2 14l10-5" stroke="#2e9a4a" stroke-width="1.2"/></svg>
<svg class="a" style="left:1957.1px;top:265px" width="16" height="16" viewBox="0 0 16 16"><path d="M2 1v14h12" stroke="#2e9a4a" stroke-width="1.2" fill="none"/><path d="M2 15h12" stroke="#d9261c" stroke-width="1.2"/><path d="M5 1.5h6l3 3v9H5z" fill="#fff" stroke="#555"/></svg>
<svg class="a" style="left:213px;top:297px" width="16" height="16" viewBox="0 0 16 16"><path d="M3 13L13 3" stroke="#2b3a55" stroke-width="1.6"/><rect x="1.75" y="11.75" width="2.5" height="2.5" fill="#fff" stroke="#2a6ebb" stroke-width="1"/><rect x="11.75" y="1.75" width="2.5" height="2.5" fill="#fff" stroke="#2a6ebb" stroke-width="1"/></svg>
<svg class="a" style="left:213px;top:319px" width="16" height="16" viewBox="0 0 16 16"><path d="M7 4a4 4 0 0 0 0 8h6" stroke="#2b3a55" stroke-width="1.6" fill="none"/><rect x="5.75" y="2.75" width="2.5" height="2.5" fill="#fff" stroke="#2a6ebb" stroke-width="1"/><rect x="5.75" y="10.75" width="2.5" height="2.5" fill="#fff" stroke="#2a6ebb" stroke-width="1"/><rect x="11.75" y="10.75" width="2.5" height="2.5" fill="#fff" stroke="#2a6ebb" stroke-width="1"/></svg>
<svg class="a" style="left:213px;top:338px" width="16" height="16" viewBox="0 0 16 16"><path d="M2 4l10 10M4 2l10 10" stroke="#2b3a55" stroke-width="1.8"/><rect x="1.75" y="1.75" width="2.5" height="2.5" fill="#fff" stroke="#2a6ebb" stroke-width="1"/><rect x="11.75" y="11.75" width="2.5" height="2.5" fill="#fff" stroke="#2a6ebb" stroke-width="1"/></svg>
<svg class="a" style="left:213px;top:359px" width="16" height="16" viewBox="0 0 16 16"><path d="M3 14q1-6 5-5t5-6" stroke="#2b3a55" stroke-width="1.6" fill="none"/><rect x="1.75" y="12.75" width="2.5" height="2.5" fill="#fff" stroke="#2a6ebb" stroke-width="1"/><rect x="11.75" y="1.75" width="2.5" height="2.5" fill="#fff" stroke="#2a6ebb" stroke-width="1"/></svg>
<svg class="a" style="left:213px;top:380.5px" width="16" height="16" viewBox="0 0 16 16"><path d="M2 5q3-4 5 1t-3 8" stroke="#2b3a55" stroke-width="1.6" fill="none"/><path d="M6 13l8-6" stroke="#f2a93b" stroke-width="2.8"/></svg>
<div class="a" style="left:212px;top:402.5px;width:17px;height:1px;background:#c4c6d2;box-shadow:0 1px 0 #fafafe"></div>
<svg class="a" style="left:213px;top:408px" width="16" height="16" viewBox="0 0 16 16"><circle cx="8" cy="8" r="6.5" fill="#eef2f8" stroke="#2b3a55" stroke-width="1.4"/><path d="M8 8l4-4" stroke="#2a6ebb"/><rect x="10.75" y="2.75" width="2.5" height="2.5" fill="#fff" stroke="#2a6ebb" stroke-width="1"/></svg>
<svg class="a" style="left:213px;top:429px" width="16" height="16" viewBox="0 0 16 16"><path d="M3 14q1-9 10-11" stroke="#2b3a55" stroke-width="1.6" fill="none"/><rect x="1.75" y="12.75" width="2.5" height="2.5" fill="#fff" stroke="#2a6ebb" stroke-width="1"/><rect x="4.75" y="5.75" width="2.5" height="2.5" fill="#fff" stroke="#2a6ebb" stroke-width="1"/><rect x="11.75" y="1.75" width="2.5" height="2.5" fill="#fff" stroke="#2a6ebb" stroke-width="1"/></svg>
<svg class="a" style="left:213px;top:449px" width="16" height="16" viewBox="0 0 16 16"><ellipse cx="8" cy="8" rx="6.5" ry="4.5" fill="#eef2f8" stroke="#2b3a55" stroke-width="1.4"/><rect x="0.75" y="6.75" width="2.5" height="2.5" fill="#fff" stroke="#2a6ebb" stroke-width="1"/><rect x="12.75" y="6.75" width="2.5" height="2.5" fill="#fff" stroke="#2a6ebb" stroke-width="1"/><rect x="6.75" y="2.25" width="2.5" height="2.5" fill="#fff" stroke="#2a6ebb" stroke-width="1"/></svg>
<svg class="a" style="left:213px;top:469px" width="16" height="16" viewBox="0 0 16 16"><path d="M2 9q6-9 12 0" stroke="#2b3a55" stroke-width="1.6" fill="none"/><rect x="0.75" y="7.75" width="2.5" height="2.5" fill="#fff" stroke="#2a6ebb" stroke-width="1"/><rect x="12.75" y="7.75" width="2.5" height="2.5" fill="#fff" stroke="#2a6ebb" stroke-width="1"/><path d="M8 13q3 0 5-3" stroke="#2b3a55" stroke-width="1.2" fill="none"/></svg>
<div class="a" style="left:212px;top:492px;width:17px;height:1px;background:#c4c6d2;box-shadow:0 1px 0 #fafafe"></div>
<svg class="a" style="left:213px;top:498px" width="16" height="16" viewBox="0 0 16 16"><rect x="6.5" y="6.5" width="3" height="3" fill="#fff" stroke="#2b3a55"/></svg>
<div class="a" style="left:212px;top:520px;width:17px;height:1px;background:#c4c6d2;box-shadow:0 1px 0 #fafafe"></div>
<svg class="a" style="left:213px;top:525px" width="16" height="16" viewBox="0 0 16 16"><rect x="2" y="4" width="12" height="8" fill="#eef2f8" stroke="#2b3a55" stroke-width="1.3"/><rect x="0.75" y="10.75" width="2.5" height="2.5" fill="#fff" stroke="#2a6ebb" stroke-width="1"/><rect x="12.75" y="2.75" width="2.5" height="2.5" fill="#fff" stroke="#2a6ebb" stroke-width="1"/></svg>
<svg class="a" style="left:213px;top:547px" width="16" height="16" viewBox="0 0 16 16"><path d="M3 3h10M3 6h10M3 9h10M3 12h10" stroke="#666" stroke-width="2.2"/><path d="M3 3v9M13 6v6" stroke="#666" stroke-width="1.5"/></svg>
<svg class="a" style="left:213px;top:568px" width="16" height="16" viewBox="0 0 16 16"><path d="M8 1.5l6.5 5l-2.5 7.5h-8L1.5 6.5z" fill="#eef2f8" stroke="#2b3a55" stroke-width="1.2"/><circle cx="8" cy="8" r="1" fill="#2a6ebb"/><rect x="2.75" y="12.75" width="2.5" height="2.5" fill="#fff" stroke="#2a6ebb" stroke-width="1"/></svg>
<svg class="a" style="left:213px;top:588px" width="16" height="16" viewBox="0 0 16 16"><rect x="1" y="1" width="14" height="14" fill="#fff"/><path d="M1 5l4-4M1 9l8-8M1 13l12-12M3 15l12-12M7 15l8-8M11 15l4-4" stroke="#444" stroke-width="1.1"/><path d="M4 4h6v3h3v6H4z" fill="#fff" stroke="#2b3a55" stroke-width="1.2"/></svg>
<svg class="a" style="left:213px;top:607px" width="16" height="16" viewBox="0 0 16 16"><path d="M3 6q0-3 3-3q1-2 4 0q4 0 3 4q3 2 0 5q-1 3-4 1q-3 2-5-1q-3-1-1-6z" fill="#eef2f8" stroke="#2b3a55" stroke-width="1.2"/></svg>
<div class="a" style="left:212px;top:630px;width:17px;height:1px;background:#c4c6d2;box-shadow:0 1px 0 #fafafe"></div>
<svg class="a" style="left:213px;top:636px" width="16" height="16" viewBox="0 0 16 16"><circle cx="8" cy="8" r="6.5" fill="#eee" stroke="#2b3a55" stroke-width="1.3"/><circle cx="8" cy="8" r="3" fill="#fff" stroke="#2b3a55" stroke-width="1.3"/></svg>
<svg class="a" style="left:213px;top:656px" width="16" height="16" viewBox="0 0 16 16"><path d="M2 2h11v5H5z" fill="#fff" stroke="#2b3a55" stroke-width="1.2"/><path d="M5 7l9 7" stroke="#2b3a55" stroke-width="1.2"/><path d="M12 12l3 3l-4-1z" fill="#2b3a55"/></svg>
<svg class="a" style="left:213px;top:678px" width="16" height="16" viewBox="0 0 16 16"><path d="M3 15V8q0-5 5-5h6" stroke="#555" stroke-width="4" fill="none"/><path d="M3 15V8q0-5 5-5h6" stroke="#ddd" stroke-width="1.6" fill="none"/></svg>
<div class="a" style="left:212px;top:700px;width:17px;height:1px;background:#c4c6d2;box-shadow:0 1px 0 #fafafe"></div>
<svg class="a" style="left:213px;top:706px" width="16" height="16" viewBox="0 0 16 16"><rect x="2.5" y="3.5" width="9" height="6" fill="#fff" stroke="#2b3a55"/><circle cx="11" cy="11" r="3.5" fill="none" stroke="#2b3a55"/><rect x="0.5" y="8.5" width="3" height="3" fill="#fff" stroke="#d9261c" stroke-width="1"/></svg>
<div class="a" style="left:212px;top:729px;width:17px;height:1px;background:#c4c6d2;box-shadow:0 1px 0 #fafafe"></div>
<svg class="a" style="left:213px;top:734px" width="16" height="16" viewBox="0 0 16 16"><rect x="1" y="1" width="14" height="14" fill="#fff"/><path d="M1 5l4-4M1 9l8-8M1 13l12-12M3 15l12-12M7 15l8-8M11 15l4-4" stroke="#444" stroke-width="1.1"/><path d="M4 4h6v3h3v6H4z" fill="#fff" stroke="#2b3a55" stroke-width="1.2"/></svg>
<svg class="a" style="left:213px;top:754px" width="16" height="16" viewBox="0 0 16 16"><text x="8" y="12.5" font-size="14" font-family="Liberation Sans" font-weight="bold" fill="#2a5ea8" text-anchor="middle">A</text><path d="M1 14.5h14" stroke="#555" stroke-width="1.3"/></svg>
<svg class="a" style="left:213px;top:773px" width="16" height="16" viewBox="0 0 16 16"><text x="8" y="13.5" font-size="15" font-family="Liberation Sans" font-weight="bold" fill="#2a5ea8" text-anchor="middle">A</text></svg>
<div class="a" style="left:212px;top:809px;width:17px;height:1px;background:#c4c6d2;box-shadow:0 1px 0 #fafafe"></div>
<svg class="a" style="left:213px;top:816px" width="16" height="16" viewBox="0 0 16 16"><path d="M3 7a5 5 0 0 1 9-3" stroke="#1f64b8" stroke-width="2.4" fill="none"/><path d="M13 9a5 5 0 0 1-9 3" stroke="#1f64b8" stroke-width="2.4" fill="none"/><path d="M10 1l4 2l-3 3z M6 15l-4-2l3-3z" fill="#1f64b8"/></svg>
<div class="a" style="left:212px;top:840px;width:17px;height:1px;background:#c4c6d2;box-shadow:0 1px 0 #fafafe"></div>
<svg class="a" style="left:213px;top:844px" width="16" height="16" viewBox="0 0 16 16"><path d="M4 9V4a1 1 0 0 1 2 0v4V2a1 1 0 0 1 2 0v6V3a1 1 0 0 1 2 0v5V5a1 1 0 0 1 2 0v6q0 4-4 4q-3 0-5-3l-2-3q0-1 1-1z" fill="#fff" stroke="#444"/></svg>
<svg class="a" style="left:213px;top:864px" width="16" height="16" viewBox="0 0 16 16"><circle cx="7" cy="7" r="5" fill="#f4f4f4" stroke="#555" stroke-width="1.6"/><path d="M4 7h6" stroke="#555" stroke-width="1.2"/><path d="M10.5 10.5l4 4" stroke="#555" stroke-width="2"/></svg>
<svg class="a" style="left:213px;top:886px" width="16" height="16" viewBox="0 0 16 16"><circle cx="7" cy="7" r="5" fill="#f4f4f4" stroke="#555" stroke-width="1.6"/><path d="M10 4l-6 6M4 6v4h4" stroke="#1f64b8" stroke-width="2" fill="none"/><path d="M10.5 10.5l4 4" stroke="#555" stroke-width="2"/></svg>
<svg class="a" style="left:213px;top:905px" width="16" height="16" viewBox="0 0 16 16"><circle cx="7" cy="7" r="5" fill="#f4f4f4" stroke="#555" stroke-width="1.6"/><rect x="5" y="5" width="5" height="4" fill="#fff" stroke="#555"/><path d="M10.5 10.5l4 4" stroke="#555" stroke-width="2"/></svg>
<svg class="a" style="left:213px;top:925px" width="16" height="16" viewBox="0 0 16 16"><circle cx="7" cy="7" r="5" fill="#f4f4f4" stroke="#555" stroke-width="1.6"/><path d="M5 9l4-4M7 5h2v2" stroke="#1f64b8" stroke-width="1.6" fill="none"/><path d="M10.5 10.5l4 4" stroke="#555" stroke-width="2"/></svg>
<svg class="a" style="left:1986px;top:297px" width="16" height="16" viewBox="0 0 16 16"><rect x="1.5" y="1.5" width="6" height="5" fill="#f4f4f4" stroke="#888"/><rect x="8.5" y="9.5" width="6" height="5" fill="#fff" stroke="#2b3a55" stroke-width="1.2"/><path d="M8 3h3v5" stroke="#d9261c" fill="none"/></svg>
<svg class="a" style="left:1986px;top:318px" width="16" height="16" viewBox="0 0 16 16"><rect x="1" y="1" width="6" height="5" fill="#fff" stroke="#2b3a55"/><rect x="5" y="7" width="5" height="4" fill="#fff" stroke="#2b3a55"/><rect x="9" y="10" width="6" height="5" fill="#fff" stroke="#2b3a55"/><path d="M8 3h3v3" stroke="#d9261c" fill="none"/></svg>
<svg class="a" style="left:1986px;top:339px" width="16" height="16" viewBox="0 0 16 16"><path d="M2 14.5v-5h5v-4h5" stroke="#2b3a55" fill="none" stroke-width="1.5"/><path d="M4 14.5v-3h5v-4h3.5" stroke="#2b3a55" fill="none" stroke-width="1"/><path d="M11 7a3 3 0 0 1 4 1v6" stroke="#666" fill="none" stroke-width="1.5"/></svg>
<svg class="a" style="left:1986px;top:360px" width="16" height="16" viewBox="0 0 16 16"><rect x="2.5" y="1.5" width="12" height="12" fill="none" stroke="#999" stroke-dasharray="2 1"/><rect x="1.5" y="8.5" width="6" height="6" fill="#fff" stroke="#2b3a55"/></svg>
<div class="a" style="left:1985px;top:381px;width:17px;height:1px;background:#c4c6d2;box-shadow:0 1px 0 #fafafe"></div>
<svg class="a" style="left:1986px;top:387px" width="16" height="16" viewBox="0 0 16 16"><path d="M3 5a6 6 0 1 0 10 0" stroke="#1f4f9a" stroke-width="2" fill="none"/><path d="M11 3l3-1l0 4z" fill="#1f4f9a"/><path d="M8 6v5M5.5 8.5h5" stroke="#d9261c" stroke-width="1.2"/></svg>
<svg class="a" style="left:1986px;top:407px" width="16" height="16" viewBox="0 0 16 16"><path d="M2 7a6 4 0 1 0 12 0" stroke="#1f4f9a" stroke-width="2" fill="none"/><path d="M8 1v14" stroke="#d9261c" stroke-dasharray="2 1"/><path d="M11 6l3-1v3z" fill="#1f4f9a"/></svg>
<div class="a" style="left:1985px;top:430px;width:17px;height:1px;background:#c4c6d2;box-shadow:0 1px 0 #fafafe"></div>
<svg class="a" style="left:1986px;top:435px" width="16" height="16" viewBox="0 0 16 16"><path d="M6.5 4l-5 10h5z" fill="#fff" stroke="#2b3a55"/><path d="M9.5 4l5 10h-5z" fill="#fff" stroke="#2b3a55"/><path d="M8 1v15" stroke="#d9261c" stroke-width="1.2"/></svg>
<svg class="a" style="left:1986px;top:456px" width="16" height="16" viewBox="0 0 16 16"><path d="M2 3l5 3v9l-5-3z" fill="#cfe8cf" stroke="#2e8b3e"/><path d="M14 3l-5 3v9l5-3z" fill="#cfe8cf" stroke="#2e8b3e"/><path d="M2 9l12 6" stroke="#d9261c"/></svg>
<div class="a" style="left:1985px;top:479px;width:17px;height:1px;background:#c4c6d2;box-shadow:0 1px 0 #fafafe"></div>
<svg class="a" style="left:1986px;top:484px" width="16" height="16" viewBox="0 0 16 16"><rect x="1.5" y="1.5" width="3" height="3" fill="#2a6ebb"/><rect x="1.5" y="11.5" width="3" height="3" fill="#2a6ebb"/><rect x="11.5" y="1.5" width="3" height="3" fill="#2a6ebb"/><rect x="11.5" y="11.5" width="3" height="3" fill="#2a6ebb"/><path d="M4.5 3h7M4.5 13h7M3 4.5v7M13 4.5v7" stroke="#2a6ebb" stroke-dasharray="1.5 1.5"/></svg>
<svg class="a" style="left:1986px;top:505px" width="16" height="16" viewBox="0 0 16 16"><rect x="1" y="3" width="2.5" height="2.5" fill="#2a6ebb"/><rect x="1" y="8" width="2.5" height="2.5" fill="#2a6ebb"/><rect x="1" y="13" width="2.5" height="2.5" fill="#2a6ebb"/><rect x="7" y="3" width="2.5" height="2.5" fill="#2a6ebb"/><rect x="7" y="8" width="2.5" height="2.5" fill="#2a6ebb"/><rect x="7" y="13" width="2.5" height="2.5" fill="#2a6ebb"/><rect x="13" y="3" width="2.5" height="2.5" fill="#2a6ebb"/><rect x="13" y="8" width="2.5" height="2.5" fill="#2a6ebb"/><rect x="13" y="13" width="2.5" height="2.5" fill="#2a6ebb"/><path d="M3 4h10M3 9h10M3 14h10" stroke="#888" stroke-dasharray="1 1"/></svg>
<div class="a" style="left:1985px;top:528px;width:17px;height:1px;background:#c4c6d2;box-shadow:0 1px 0 #fafafe"></div>
<svg class="a" style="left:1986px;top:533px" width="16" height="16" viewBox="0 0 16 16"><rect x="2.5" y="5.5" width="11" height="8" fill="none" stroke="#2e8b3e" stroke-width="1.6"/><path d="M8 5l3-3" stroke="#555" stroke-width="1.2"/><rect x="8" y="4" width="4" height="3" fill="#e8eef8"/></svg>
<svg class="a" style="left:1986px;top:554px" width="16" height="16" viewBox="0 0 16 16"><rect x="2.5" y="4.5" width="11" height="8" fill="none" stroke="#2e8b3e" stroke-width="1.6"/></svg>
<svg class="a" style="left:1986px;top:575px" width="16" height="16" viewBox="0 0 16 16"><rect x="2.5" y="4.5" width="7" height="8" fill="none" stroke="#2e8b3e" stroke-width="1.6"/><rect x="9.5" y="4.5" width="4" height="8" fill="none" stroke="#aaa" stroke-width="1.4"/><path d="M9.5 1v15" stroke="#555"/></svg>
<div class="a" style="left:1985px;top:597px;width:17px;height:1px;background:#c4c6d2;box-shadow:0 1px 0 #fafafe"></div>
<svg class="a" style="left:1986px;top:603px" width="16" height="16" viewBox="0 0 16 16"><path d="M2 5h9v9H2z M2 5l3-3h9l-3 3 M11 14l3-3V2" fill="none" stroke="#555" stroke-width="1"/><path d="M2 14l3-3h9M5 11V2" stroke="#999" stroke-width="0.8"/><path d="M2 14h9l3-3" stroke="#1e2d4a" stroke-width="1.8" fill="none"/></svg>
<div class="a" style="left:1985px;top:625px;width:17px;height:1px;background:#c4c6d2;box-shadow:0 1px 0 #fafafe"></div>
<svg class="a" style="left:1986px;top:631px" width="16" height="16" viewBox="0 0 16 16"><rect x="2.5" y="8.5" width="3" height="6" fill="#fff" stroke="#2b3a55"/><rect x="10.5" y="2.5" width="3" height="12" fill="#fff" stroke="#2b3a55"/><path d="M5 6l5-4" stroke="#aaa" stroke-dasharray="1 1"/></svg>
<div class="a" style="left:1985px;top:652.5px;width:17px;height:1px;background:#c4c6d2;box-shadow:0 1px 0 #fafafe"></div>
<svg class="a" style="left:1986px;top:660px" width="16" height="16" viewBox="0 0 16 16"><path d="M2 14L12 4" stroke="#1e2d4a" stroke-width="2.2"/><path d="M10 2l4 4" stroke="#1e2d4a" stroke-width="2"/><path d="M12 13l2 2l-3 0z" fill="#111"/></svg>
<div class="a" style="left:1985px;top:680px;width:17px;height:1px;background:#c4c6d2;box-shadow:0 1px 0 #fafafe"></div>
<svg class="a" style="left:1986px;top:686px" width="16" height="16" viewBox="0 0 16 16"><path d="M2 2v6M8 2v6M14 2v6M2 5h12" stroke="#333" stroke-dasharray="1.5 1" stroke-width="1.1"/><path d="M2 9h12" stroke="#333" stroke-width="1.3"/><rect x="1" y="11" width="14" height="4" fill="#f2b33e"/></svg>
<div class="a" style="left:1985px;top:710px;width:17px;height:1px;background:#c4c6d2;box-shadow:0 1px 0 #fafafe"></div>
<svg class="a" style="left:1986px;top:715px" width="16" height="16" viewBox="0 0 16 16"><path d="M2 14.5V9a8 8 0 0 1 8-7h5v12.5z" fill="#fff" stroke="#1e2d4a" stroke-width="1.4"/><path d="M1 1h4M1 1v4" stroke="#888" stroke-dasharray="1 1"/></svg>
<div class="a" style="left:1985px;top:738px;width:17px;height:1px;background:#c4c6d2;box-shadow:0 1px 0 #fafafe"></div>
<svg class="a" style="left:1986px;top:744px" width="16" height="16" viewBox="0 0 16 16"><path d="M4 6a3 3 0 0 0 0 6h8" stroke="#2b3a55" stroke-width="1.5" fill="none"/><rect x="2.75" y="4.75" width="2.5" height="2.5" fill="#fff" stroke="#2a6ebb" stroke-width="1"/><rect x="2.75" y="10.75" width="2.5" height="2.5" fill="#fff" stroke="#2a6ebb" stroke-width="1"/><rect x="10.75" y="10.75" width="2.5" height="2.5" fill="#fff" stroke="#2a6ebb" stroke-width="1"/><path d="M7 10l8-8" stroke="#f2a93b" stroke-width="2.6"/></svg>
<svg class="a" style="left:1986px;top:764px" width="16" height="16" viewBox="0 0 16 16"><path d="M2 14q2-8 7-6t5-6" stroke="#2b3a55" stroke-width="1.5" fill="none"/><rect x="0.75" y="12.75" width="2.5" height="2.5" fill="#fff" stroke="#2a6ebb" stroke-width="1"/><rect x="12.75" y="0.75" width="2.5" height="2.5" fill="#fff" stroke="#2a6ebb" stroke-width="1"/><path d="M6 12l8-8" stroke="#f2a93b" stroke-width="2.6"/></svg>
<svg class="a" style="left:1986px;top:785px" width="16" height="16" viewBox="0 0 16 16"><text x="6" y="13" font-size="14" font-family="Liberation Sans" font-weight="bold" fill="#2a5ea8" text-anchor="middle">A</text><path d="M8 14l7-7" stroke="#f2a93b" stroke-width="2.6"/></svg>
<div class="a" style="left:1985px;top:807px;width:17px;height:1px;background:#c4c6d2;box-shadow:0 1px 0 #fafafe"></div>
<svg class="a" style="left:1986px;top:813px" width="16" height="16" viewBox="0 0 16 16"><path d="M6 5l9 9l-2 2l-9-9z" fill="#d9261c"/><path d="M1 2l4-1l2 3l-3 3z" fill="#f5c518"/><path d="M3 3l3 3" stroke="#222"/></svg>
<svg class="a" style="left:1986px;top:833px" width="16" height="16" viewBox="0 0 16 16"><path d="M6 5l9 9l-2 2l-9-9z" fill="#d9261c"/><path d="M1 2l4-1l2 3l-3 3z" fill="#f5c518"/><path d="M3 3l3 3" stroke="#222"/><circle cx="12" cy="5" r="3.5" fill="#2e9a4a"/><path d="M12 3v4M10 5h4" stroke="#fff" stroke-width="1.2"/></svg>
<div class="a" style="left:1985px;top:856px;width:17px;height:1px;background:#c4c6d2;box-shadow:0 1px 0 #fafafe"></div>
<svg class="a" style="left:1986px;top:861px" width="16" height="16" viewBox="0 0 16 16"><rect x="2.5" y="6.5" width="8" height="8" fill="#fff" stroke="#999"/><rect x="6.5" y="2.5" width="8" height="8" fill="none" stroke="#2e8b3e" stroke-width="1.2"/></svg>
<svg class="a" style="left:1986px;top:881.5px" width="16" height="16" viewBox="0 0 16 16"><rect x="7" y="1" width="8" height="7" fill="#333"/><path d="M2 14V8h6" stroke="#2a6ebb" stroke-width="1.2" fill="none"/><path d="M2 14l6-6" stroke="#2a6ebb"/><path d="M5 5l3-2" stroke="#d9261c"/></svg>
<div class="a" style="left:1983px;top:899px;width:21px;height:23px;background:#d8e8fa;border:1px solid #5aa0ee"></div>
<svg class="a" style="left:1986px;top:902.5px" width="16" height="16" viewBox="0 0 16 16"><rect x="1.5" y="1.5" width="13" height="13" fill="#fff" stroke="#555"/><path d="M1.5 4h13" stroke="#1f64b8" stroke-width="1.5"/><circle cx="4.5" cy="7.5" r="1.2" fill="#555"/><circle cx="4.5" cy="11" r="1.2" fill="none" stroke="#555"/><path d="M7 7.5h5M7 11h5" stroke="#555"/></svg>
<svg class="a" style="left:1617.5px;top:1015.0px" width="15" height="15" viewBox="0 0 16 16"><path d="M8 1l2 8l5 5H1l5-5z" fill="#fff" stroke="#444" stroke-width="1.1"/></svg>
<svg class="a" style="left:1656.5px;top:1015.0px" width="15" height="15" viewBox="0 0 16 16"><rect x="0" y="0" width="16" height="16" fill="#f7f07a"/><path d="M8 1l2 8l5 5H1l5-5z" fill="none" stroke="#444" stroke-width="1.1"/></svg>
<svg class="a" style="left:1677.5px;top:1015.0px" width="15" height="15" viewBox="0 0 16 16"><path d="M8 1l2 8l5 5H1l5-5z" fill="none" stroke="#444" stroke-width="1.1"/><path d="M11 3l4-2" stroke="#c27a3a" stroke-width="1.6"/></svg>
<svg class="a" style="left:1697.5px;top:1015.0px" width="15" height="15" viewBox="0 0 16 16"><rect x="1.5" y="1.5" width="13" height="13" fill="#fff" stroke="#444"/><path d="M4.5 1.5v13M7.5 1.5v13M10.5 1.5v13M1.5 4.5h13M1.5 7.5h13M1.5 10.5h13" stroke="#555" stroke-width="0.8"/></svg>
<svg class="a" style="left:1718.5px;top:1015.0px" width="15" height="15" viewBox="0 0 16 16"><rect x="1.5" y="1.5" width="13" height="13" fill="#fff" stroke="#444"/><path d="M4.5 1.5v13M7.5 1.5v13M10.5 1.5v13M1.5 4.5h13M1.5 7.5h13M1.5 10.5h13" stroke="#555" stroke-width="0.8"/></svg>
<svg class="a" style="left:1739.5px;top:1015.0px" width="15" height="15" viewBox="0 0 16 16"><path d="M2 2v12h12" stroke="#2e9a4a" stroke-width="1.2" fill="none"/><path d="M2 14h12" stroke="#d9261c" stroke-width="1.3"/><path d="M5 10v4M2 10h3" stroke="#2e9a4a" stroke-width="0.8"/></svg>
<svg class="a" style="left:1759.5px;top:1015.0px" width="15" height="15" viewBox="0 0 16 16"><circle cx="8" cy="8" r="6.5" fill="#fff" stroke="#444" stroke-width="1.3"/><path d="M8 8l5-4" stroke="#d9261c" stroke-width="1.2"/></svg>
<svg class="a" style="left:1780.5px;top:1015.0px" width="15" height="15" viewBox="0 0 16 16"><rect x="0" y="0" width="16" height="16" fill="#f7f07a"/><path d="M8 1v14" stroke="#d9261c" stroke-width="1.5"/><path d="M1 8h14" stroke="#2e9a4a" stroke-width="1.5"/></svg>
<svg class="a" style="left:1800.5px;top:1015.0px" width="15" height="15" viewBox="0 0 16 16"><rect x="0" y="0" width="16" height="16" fill="#f7f07a"/><path d="M1 14h14M1 14l10-10" stroke="#333" stroke-width="1.3"/><path d="M5 14q0-3-2-4" stroke="#d9261c" fill="none"/></svg>
<svg class="a" style="left:1820.5px;top:1015.0px" width="15" height="15" viewBox="0 0 16 16"><path d="M8 1v14M1 8h14" stroke="#333" stroke-width="1.4"/></svg>
<svg class="a" style="left:1921.5px;top:1015.0px" width="15" height="15" viewBox="0 0 16 16"><circle cx="8" cy="8" r="5" fill="#1f64b8"/><path d="M8 0.5v15M0.5 8h15M2.5 2.5l11 11M13.5 2.5l-11 11" stroke="#1f64b8" stroke-width="3"/><circle cx="8" cy="8" r="2" fill="#f0f0f0"/></svg>
<svg class="a" style="left:1942.5px;top:1015.0px" width="15" height="15" viewBox="0 0 16 16"><rect x="1.5" y="1.5" width="9" height="7" fill="#fff" stroke="#2b3a55" stroke-width="1.3"/><rect x="5.5" y="7.5" width="9" height="7" fill="#fff" stroke="#2b3a55" stroke-width="1.3"/></svg>
<svg class="a" style="left:1962.5px;top:1015.0px" width="15" height="15" viewBox="0 0 16 16"><circle cx="8" cy="8" r="6.5" fill="#fff" stroke="#444" stroke-width="1.5"/><path d="M4 12l8-8" stroke="#1f64b8" stroke-width="1.5"/></svg>
<svg class="a" style="left:1983.5px;top:1015.0px" width="15" height="15" viewBox="0 0 16 16"><rect x="1" y="3" width="14" height="10" fill="#f5c84a" stroke="#b48a2a"/><path d="M1 3l7 6l7-6" stroke="#b48a2a" fill="none"/></svg>
<div class="a" style="left:231.5px;top:763.5px;width:173px;height:226px;background:rgba(240,240,243,0.94)"></div>
<div class="a" style="left:233.3px;top:769.5px;width:20.5px;height:19.5px;background:#c9dcf2;border:1px solid #3a78c0"></div>
<div class="a" style="left:258px;top:769.5px;width:21px;height:19.5px;background:#c9dcf2;border:1px solid #3a78c0"></div>
<div class="a" style="left:285.5px;top:769.5px;width:20.5px;height:19.5px;background:#c9dcf2;border:1px solid #3a78c0"></div>
<div class="a" style="left:312px;top:769.5px;width:20.600000000000023px;height:19.5px;background:#c9dcf2;border:1px solid #3a78c0"></div>
<div class="a" style="left:339px;top:769.5px;width:20.600000000000023px;height:19.5px;background:#c4c4c4;border:1px solid #b0b0b0"></div>
<div class="a" style="left:379px;top:769.5px;width:20.80000000000001px;height:19.5px;background:#c4c4c4;border:1px solid #b0b0b0"></div>
<svg class="a" style="left:236px;top:772px;" width="16" height="14" viewBox="0 0 16 14"><rect x="1.5" y="1.5" width="13" height="11" fill="#eee" stroke="#333" stroke-width="1.3"/><path d="M1.5 3.5h13" stroke="#333" stroke-width="2"/></svg>
<svg class="a" style="left:260px;top:771px;" width="17" height="16" viewBox="0 0 17 16"><rect x="5.5" y="5.5" width="9" height="9" fill="#fff" stroke="#333"/><path d="M10 7v6M7 10h6" stroke="#333" stroke-width="1.4"/><path d="M1 10h4M10 1v4" stroke="#333"/><circle cx="2" cy="10" r="1.5" fill="#333"/></svg>
<svg class="a" style="left:287px;top:771px;" width="17" height="16" viewBox="0 0 17 16"><rect x="1.5" y="1.5" width="8" height="8" fill="none" stroke="#333" stroke-width="1.3"/><circle cx="10" cy="13" r="2" fill="none" stroke="#333"/><circle cx="15" cy="13" r="2" fill="none" stroke="#333"/><path d="M7 6l9 5M7 12l9-5" stroke="#333"/></svg>
<svg class="a" style="left:314px;top:771px;transform:scale(1)" width="17" height="16" viewBox="0 0 17 16"><path d="M8 0.8l1.3 2 2.2-0.9 0.2 2.4 2.4 0.3-0.9 2.2 2 1.3-2 1.3 0.9 2.2-2.4 0.3-0.2 2.4-2.2-0.9-1.3 2-1.3-2-2.2 0.9-0.2-2.4-2.4-0.3 0.9-2.2-2-1.3 2-1.3-0.9-2.2 2.4-0.3 0.2-2.4 2.2 0.9z" fill="#4a4a4a"/><circle cx="8" cy="8" r="3" fill="#ddd" stroke="#4a4a4a"/></svg>
<svg class="a" style="left:342px;top:771px;" width="15" height="16" viewBox="0 0 15 16"><path d="M5 2q-3 0-3 3v2l-1 1l1 1v2q0 3 3 3M10 2q3 0 3 3v2l1 1l-1 1v2q0 3-3 3" stroke="#8a9ab8" fill="none"/></svg>
<svg class="a" style="left:382px;top:771px;" width="16" height="16" viewBox="0 0 16 16"><path d="M6 1h4M7 1v5l-5 8h12l-5-8V1" stroke="#333" fill="#fff" stroke-width="1.2"/><path d="M4 11h8l2 3H2z" fill="#333"/></svg>
<div class="a" style="left:234px;top:795.5px;width:149px;height:17px;background:linear-gradient(#dce9f8,#c4d9f2);border:1px solid #9ec0e6;border-radius:2px"></div>
<svg class="a" style="left:234.5px;top:797.0px" width="15" height="15" viewBox="0 0 16 16"><path d="M4 14l4-12h6l-4 12z" fill="#eaf5ea" stroke="#2e8b3e"/><circle cx="5" cy="11.5" r="3.5" fill="#1f64b8"/><path d="M5 10v4" stroke="#fff" stroke-width="1.3"/></svg>
<div class="a" style="left:251.5px;top:804.0px;width:5px;height:5px;background:#d33;border:1px solid #222"></div>
<div class="t" style="left:257.5px;top:799.6px;font-size:10.5px;line-height:10.5px;color:#1a1a1a;transform:scaleX(0.84);transform-origin:0 0;letter-spacing:-0.1px">LI (LIST)</div>
<svg class="a" style="left:369.5px;top:797.5px" width="14" height="15" viewBox="0 0 14 15"><path d="M4 0.5h6l3.5 3.5v7L10 14.5H4L0.5 11V4z" fill="#2c6cb0"/><text x="7" y="12" font-size="11" font-family="Liberation Sans" font-weight="bold" fill="#fff" text-anchor="middle">?</text></svg>
<svg class="a" style="left:234.5px;top:814.7px" width="15" height="15" viewBox="0 0 16 16"><rect x="1.5" y="1.5" width="11" height="12" fill="#fff" stroke="#555"/><path d="M1.5 4h11" stroke="#1f64b8" stroke-width="2"/><path d="M3 7h5M3 9h5M3 11h4" stroke="#888"/><circle cx="11.5" cy="11.5" r="3.5" fill="#1f64b8"/><path d="M11.5 10v4" stroke="#fff" stroke-width="1.3"/></svg>
<div class="a" style="left:251.5px;top:821.7px;width:5px;height:5px;background:#d33;border:1px solid #222"></div>
<div class="t" style="left:257.5px;top:817.3px;font-size:10.5px;line-height:10.5px;color:#1a1a1a;transform:scaleX(0.84);transform-origin:0 0;letter-spacing:-0.1px">LICENSEMANAGER</div>
<svg class="a" style="left:369.5px;top:815.2px" width="14" height="15" viewBox="0 0 14 15"><path d="M4 0.5h6l3.5 3.5v7L10 14.5H4L0.5 11V4z" fill="#2c6cb0"/><text x="7" y="12" font-size="11" font-family="Liberation Sans" font-weight="bold" fill="#fff" text-anchor="middle">?</text></svg>
<svg class="a" style="left:234.5px;top:832.4px" width="15" height="15" viewBox="0 0 16 16"><circle cx="8" cy="6.5" r="5" fill="#f8ea8a" stroke="#a08a30"/><rect x="6" y="11" width="4" height="4" fill="#777"/></svg>
<div class="a" style="left:251.5px;top:839.4px;width:5px;height:5px;background:#2c2;border:1px solid #222"></div>
<div class="t" style="left:257.5px;top:835.0px;font-size:10.5px;line-height:10.5px;color:#1a1a1a;transform:scaleX(0.84);transform-origin:0 0;letter-spacing:-0.1px">LIGHT (LIGHTING)</div>
<svg class="a" style="left:369.5px;top:832.9px" width="14" height="15" viewBox="0 0 14 15"><path d="M4 0.5h6l3.5 3.5v7L10 14.5H4L0.5 11V4z" fill="#2c6cb0"/><text x="7" y="12" font-size="11" font-family="Liberation Sans" font-weight="bold" fill="#fff" text-anchor="middle">?</text></svg>
<svg class="a" style="left:234.5px;top:850.1px" width="15" height="15" viewBox="0 0 16 16"><path d="M8 0.8l1.3 2 2.2-0.9 0.2 2.4 2.4 0.3-0.9 2.2 2 1.3-2 1.3 0.9 2.2-2.4 0.3-0.2 2.4-2.2-0.9-1.3 2-1.3-2-2.2 0.9-0.2-2.4-2.4-0.3 0.9-2.2-2-1.3 2-1.3-0.9-2.2 2.4-0.3 0.2-2.4 2.2 0.9z" fill="#4a4a4a"/><circle cx="8" cy="8" r="3" fill="#ddd" stroke="#4a4a4a"/></svg>
<div class="a" style="left:251.5px;top:857.1px;width:5px;height:5px;background:#ee3;border:1px solid #222"></div>
<div class="t" style="left:257.5px;top:852.7px;font-size:10.5px;line-height:10.5px;color:#1a1a1a;transform:scaleX(0.84);transform-origin:0 0;letter-spacing:-0.1px">LIGHTGLYPHDISPLAY</div>
<svg class="a" style="left:369.5px;top:850.6px" width="14" height="15" viewBox="0 0 14 15"><path d="M4 0.5h6l3.5 3.5v7L10 14.5H4L0.5 11V4z" fill="#2c6cb0"/><text x="7" y="12" font-size="11" font-family="Liberation Sans" font-weight="bold" fill="#fff" text-anchor="middle">?</text></svg>
<svg class="a" style="left:234.5px;top:867.8px" width="15" height="15" viewBox="0 0 16 16"><path d="M8 0.8l1.3 2 2.2-0.9 0.2 2.4 2.4 0.3-0.9 2.2 2 1.3-2 1.3 0.9 2.2-2.4 0.3-0.2 2.4-2.2-0.9-1.3 2-1.3-2-2.2 0.9-0.2-2.4-2.4-0.3 0.9-2.2-2-1.3 2-1.3-0.9-2.2 2.4-0.3 0.2-2.4 2.2 0.9z" fill="#4a4a4a"/><circle cx="8" cy="8" r="3" fill="#ddd" stroke="#4a4a4a"/></svg>
<div class="a" style="left:251.5px;top:874.8px;width:5px;height:5px;background:#ee3;border:1px solid #222"></div>
<div class="t" style="left:257.5px;top:870.4px;font-size:10.5px;line-height:10.5px;color:#1a1a1a;transform:scaleX(0.84);transform-origin:0 0;letter-spacing:-0.1px">LIGHTINGUNITS</div>
<svg class="a" style="left:369.5px;top:868.3px" width="14" height="15" viewBox="0 0 14 15"><path d="M4 0.5h6l3.5 3.5v7L10 14.5H4L0.5 11V4z" fill="#2c6cb0"/><text x="7" y="12" font-size="11" font-family="Liberation Sans" font-weight="bold" fill="#fff" text-anchor="middle">?</text></svg>
<svg class="a" style="left:234.5px;top:885.5px" width="15" height="15" viewBox="0 0 16 16"><path d="M8 0.8l1.3 2 2.2-0.9 0.2 2.4 2.4 0.3-0.9 2.2 2 1.3-2 1.3 0.9 2.2-2.4 0.3-0.2 2.4-2.2-0.9-1.3 2-1.3-2-2.2 0.9-0.2-2.4-2.4-0.3 0.9-2.2-2-1.3 2-1.3-0.9-2.2 2.4-0.3 0.2-2.4 2.2 0.9z" fill="#4a4a4a"/><circle cx="8" cy="8" r="3" fill="#ddd" stroke="#4a4a4a"/></svg>
<div class="a" style="left:251.5px;top:892.5px;width:5px;height:5px;background:#ee3;border:1px solid #222"></div>
<div class="t" style="left:257.5px;top:888.1px;font-size:10.5px;line-height:10.5px;color:#1a1a1a;transform:scaleX(0.84);transform-origin:0 0;letter-spacing:-0.1px">LIGHTSINBLOCKS</div>
<svg class="a" style="left:369.5px;top:886.0px" width="14" height="15" viewBox="0 0 14 15"><path d="M4 0.5h6l3.5 3.5v7L10 14.5H4L0.5 11V4z" fill="#2c6cb0"/><text x="7" y="12" font-size="11" font-family="Liberation Sans" font-weight="bold" fill="#fff" text-anchor="middle">?</text></svg>
<svg class="a" style="left:234.5px;top:903.2px" width="15" height="15" viewBox="0 0 16 16"><path d="M8 0.8l1.3 2 2.2-0.9 0.2 2.4 2.4 0.3-0.9 2.2 2 1.3-2 1.3 0.9 2.2-2.4 0.3-0.2 2.4-2.2-0.9-1.3 2-1.3-2-2.2 0.9-0.2-2.4-2.4-0.3 0.9-2.2-2-1.3 2-1.3-0.9-2.2 2.4-0.3 0.2-2.4 2.2 0.9z" fill="#4a4a4a"/><circle cx="8" cy="8" r="3" fill="#ddd" stroke="#4a4a4a"/></svg>
<div class="a" style="left:251.5px;top:910.2px;width:5px;height:5px;background:#ee3;border:1px solid #222"></div>
<div class="t" style="left:257.5px;top:905.8px;font-size:10.5px;line-height:10.5px;color:#1a1a1a;transform:scaleX(0.84);transform-origin:0 0;letter-spacing:-0.1px">LIGHTTRIM</div>
<svg class="a" style="left:369.5px;top:903.7px" width="14" height="15" viewBox="0 0 14 15"><path d="M4 0.5h6l3.5 3.5v7L10 14.5H4L0.5 11V4z" fill="#2c6cb0"/><text x="7" y="12" font-size="11" font-family="Liberation Sans" font-weight="bold" fill="#fff" text-anchor="middle">?</text></svg>
<svg class="a" style="left:234.5px;top:920.9px" width="15" height="15" viewBox="0 0 16 16"><path d="M8 0.8l1.3 2 2.2-0.9 0.2 2.4 2.4 0.3-0.9 2.2 2 1.3-2 1.3 0.9 2.2-2.4 0.3-0.2 2.4-2.2-0.9-1.3 2-1.3-2-2.2 0.9-0.2-2.4-2.4-0.3 0.9-2.2-2-1.3 2-1.3-0.9-2.2 2.4-0.3 0.2-2.4 2.2 0.9z" fill="#4a4a4a"/><circle cx="8" cy="8" r="3" fill="#ddd" stroke="#4a4a4a"/></svg>
<div class="a" style="left:251.5px;top:927.9px;width:5px;height:5px;background:#ee3;border:1px solid #222"></div>
<div class="t" style="left:257.5px;top:923.5px;font-size:10.5px;line-height:10.5px;color:#1a1a1a;transform:scaleX(0.84);transform-origin:0 0;letter-spacing:-0.1px">LIMCHECK</div>
<svg class="a" style="left:369.5px;top:921.4px" width="14" height="15" viewBox="0 0 14 15"><path d="M4 0.5h6l3.5 3.5v7L10 14.5H4L0.5 11V4z" fill="#2c6cb0"/><text x="7" y="12" font-size="11" font-family="Liberation Sans" font-weight="bold" fill="#fff" text-anchor="middle">?</text></svg>
<svg class="a" style="left:234.5px;top:938.6px" width="15" height="15" viewBox="0 0 16 16"><path d="M3.5 1.5h7l3 3v10h-10z" fill="#fff" stroke="#777"/><path d="M3.5 3.5h9M5.5 1.5v13M3.5 12.5h9" stroke="#d9261c" stroke-width="1.2"/></svg>
<div class="a" style="left:251.5px;top:945.6px;width:5px;height:5px;background:#d33;border:1px solid #222"></div>
<div class="t" style="left:257.5px;top:941.2px;font-size:10.5px;line-height:10.5px;color:#1a1a1a;transform:scaleX(0.84);transform-origin:0 0;letter-spacing:-0.1px">LIMITS</div>
<svg class="a" style="left:369.5px;top:939.1px" width="14" height="15" viewBox="0 0 14 15"><path d="M4 0.5h6l3.5 3.5v7L10 14.5H4L0.5 11V4z" fill="#2c6cb0"/><text x="7" y="12" font-size="11" font-family="Liberation Sans" font-weight="bold" fill="#fff" text-anchor="middle">?</text></svg>
<svg class="a" style="left:234.5px;top:956.3px" width="15" height="15" viewBox="0 0 16 16"><path d="M8 0.8l1.3 2 2.2-0.9 0.2 2.4 2.4 0.3-0.9 2.2 2 1.3-2 1.3 0.9 2.2-2.4 0.3-0.2 2.4-2.2-0.9-1.3 2-1.3-2-2.2 0.9-0.2-2.4-2.4-0.3 0.9-2.2-2-1.3 2-1.3-0.9-2.2 2.4-0.3 0.2-2.4 2.2 0.9z" fill="#4a4a4a"/><circle cx="8" cy="8" r="3" fill="#ddd" stroke="#4a4a4a"/></svg>
<div class="a" style="left:251.5px;top:963.3px;width:5px;height:5px;background:#ee3;border:1px solid #222"></div>
<div class="t" style="left:257.5px;top:958.9px;font-size:10.5px;line-height:10.5px;color:#1a1a1a;transform:scaleX(0.84);transform-origin:0 0;letter-spacing:-0.1px">LIMMAX</div>
<svg class="a" style="left:369.5px;top:956.8px" width="14" height="15" viewBox="0 0 14 15"><path d="M4 0.5h6l3.5 3.5v7L10 14.5H4L0.5 11V4z" fill="#2c6cb0"/><text x="7" y="12" font-size="11" font-family="Liberation Sans" font-weight="bold" fill="#fff" text-anchor="middle">?</text></svg>
<svg class="a" style="left:234.5px;top:974.0px" width="15" height="15" viewBox="0 0 16 16"><path d="M8 0.8l1.3 2 2.2-0.9 0.2 2.4 2.4 0.3-0.9 2.2 2 1.3-2 1.3 0.9 2.2-2.4 0.3-0.2 2.4-2.2-0.9-1.3 2-1.3-2-2.2 0.9-0.2-2.4-2.4-0.3 0.9-2.2-2-1.3 2-1.3-0.9-2.2 2.4-0.3 0.2-2.4 2.2 0.9z" fill="#4a4a4a"/><circle cx="8" cy="8" r="3" fill="#ddd" stroke="#4a4a4a"/></svg>
<div class="a" style="left:251.5px;top:981.0px;width:5px;height:5px;background:#ee3;border:1px solid #222"></div>
<div class="t" style="left:257.5px;top:976.6px;font-size:10.5px;line-height:10.5px;color:#1a1a1a;transform:scaleX(0.84);transform-origin:0 0;letter-spacing:-0.1px">LIMMIN</div>
<svg class="a" style="left:369.5px;top:974.5px" width="14" height="15" viewBox="0 0 14 15"><path d="M4 0.5h6l3.5 3.5v7L10 14.5H4L0.5 11V4z" fill="#2c6cb0"/><text x="7" y="12" font-size="11" font-family="Liberation Sans" font-weight="bold" fill="#fff" text-anchor="middle">?</text></svg>
<div class="a" style="left:386px;top:795px;width:14px;height:194px;background:rgba(228,228,230,0.94)"></div>
<svg class="a" style="left:388px;top:798px;" width="10" height="8" viewBox="0 0 10 8"><path d="M1 6l4-4l4 4" stroke="#444" fill="none" stroke-width="1.3"/></svg>
<div class="a" style="left:387px;top:811px;width:12px;height:70px;background:#bdbdbd"></div>
<svg class="a" style="left:388px;top:972px;" width="10" height="8" viewBox="0 0 10 8"><path d="M1 2l4 4l4-4" stroke="#444" fill="none" stroke-width="1.3"/></svg>
<div class="or" style="left:207.5px;top:57.5px;width:38.0px;height:40.5px;border-radius:7px"></div>
<div class="or" style="left:247.5px;top:57.5px;width:158.5px;height:21.5px;border-radius:7px"></div>
<div class="or" style="left:247.5px;top:80px;width:485.0px;height:18px;border-radius:7px"></div>
<div class="or" style="left:207.5px;top:102.5px;width:1471.0px;height:101.5px;border-radius:9px"></div>
<div class="or" style="left:207.5px;top:206.5px;width:1778.5px;height:79.5px;border-radius:9px"></div>
<div class="or" style="left:1979.5px;top:286px;width:28.0px;height:646px;border-radius:8px"></div>
<div class="or" style="left:229px;top:756.5px;width:177.5px;height:240.5px;border-radius:8px"></div>
<div class="a" style="left:294px;top:21px;width:2px;height:37px;background:#8c8c8c"></div>
<div class="a" style="left:290.5px;top:54.0px;width:9px;height:9px;border-radius:50%;background:#000"></div>
<div class="a" style="left:450.5px;top:21px;width:2px;height:60px;background:#8c8c8c"></div>
<div class="a" style="left:447.0px;top:76.5px;width:9px;height:9px;border-radius:50%;background:#000"></div>
<div class="a" style="left:793.5px;top:21px;width:2px;height:81px;background:#8c8c8c"></div>
<div class="a" style="left:790.0px;top:97.5px;width:9px;height:9px;border-radius:50%;background:#000"></div>
<div class="a" style="left:172px;top:77.5px;width:36px;height:2px;background:#8c8c8c"></div>
<div class="a" style="left:203.5px;top:74.0px;width:9px;height:9px;border-radius:50%;background:#000"></div>
<div class="a" style="left:166.5px;top:257.5px;width:51.5px;height:2px;background:#8c8c8c"></div>
<div class="a" style="left:213.5px;top:254.0px;width:9px;height:9px;border-radius:50%;background:#000"></div>
<div class="a" style="left:192px;top:674px;width:53px;height:2px;background:#8c8c8c"></div>
<div class="a" style="left:240.5px;top:670.5px;width:9px;height:9px;border-radius:50%;background:#000"></div>
<div class="a" style="left:160px;top:870px;width:71px;height:2px;background:#8c8c8c"></div>
<div class="a" style="left:226.5px;top:866.5px;width:9px;height:9px;border-radius:50%;background:#000"></div>
<div class="a" style="left:1998px;top:379.5px;width:60px;height:2px;background:#8c8c8c"></div>
<div class="a" style="left:1993.5px;top:376.0px;width:9px;height:9px;border-radius:50%;background:#000"></div></body></html>
